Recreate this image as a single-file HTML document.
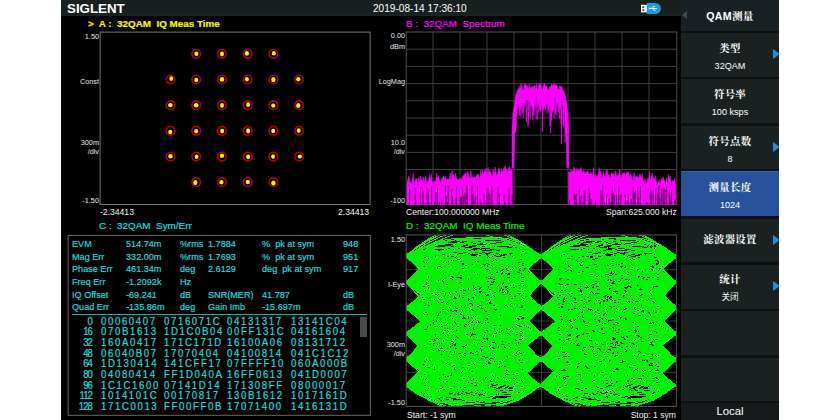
<!DOCTYPE html>
<html lang="zh">
<head>
<meta charset="utf-8">
<title>SIGLENT QAM</title>
<style>
html,body{margin:0;padding:0;background:#fff;}
body{width:840px;height:420px;position:relative;overflow:hidden;font-family:"Liberation Sans","Noto Sans CJK SC",sans-serif;}
#scr{position:absolute;left:61px;top:0;width:718px;height:420px;background:#000;overflow:hidden;}
#hdr{position:absolute;left:0;top:0;width:620px;height:16px;background:#18201f;box-shadow:inset 0 -1.5px 0 #1b2424;}
.abs{position:absolute;white-space:pre;line-height:1;}
#logo{left:6px;top:3.4px;font-size:12px;font-weight:bold;color:#fff;letter-spacing:0;transform-origin:0 0;transform:scaleX(1.11);}
#date{left:312px;top:4.2px;font-size:10.1px;color:#fff;}
.ttl{font-size:9.9px;top:18.6px;-webkit-text-stroke:0.22px currentColor;}
.ax{font-size:7.3px;color:#e8e8e8;text-align:right;width:40px;}
.bl{font-size:8.6px;color:#f0f0f0;}
.box{position:absolute;border:1px solid #6e6e6e;box-sizing:border-box;}
#menu{position:absolute;left:620px;top:0;width:98px;height:420px;background:#0d1112;}
.mi{position:absolute;left:0;width:98px;height:43.7px;background:#1a2120;color:#fff;text-align:center;}
.mi .l{position:absolute;left:0;width:98px;top:11.2px;font-size:10.4px;font-weight:bold;line-height:1;letter-spacing:0.3px;font-family:"Liberation Sans","Noto Serif CJK SC",serif;}
.mi .l1{top:16.4px;}
.mi .v{position:absolute;left:0;width:98px;top:29px;font-size:9.1px;line-height:1;}
.mi .ar{position:absolute;right:-0.5px;top:16.6px;width:0;height:0;border-left:7.6px solid #1b8fe6;border-top:5px solid transparent;border-bottom:5px solid transparent;}
.c{color:#12dede;font-size:9.8px;transform-origin:0 50%;transform:scaleX(0.93);-webkit-text-stroke:0.2px #12dede;}
.hx{color:#12dede;font-size:10px;letter-spacing:1.62px;transform-origin:0 50%;transform:scale(0.97,1.03);-webkit-text-stroke:0.2px #12dede;}
.hi{color:#12dede;font-size:10px;letter-spacing:-1px;text-align:right;width:30px;transform-origin:100% 50%;transform:scale(0.97,1.03);-webkit-text-stroke:0.2px #12dede;}
</style>
</head>
<body>
<div id="scr">
  <div id="hdr"></div>
  <div id="logo" class="abs">SIGLENT</div>
  <div id="date" class="abs">2019-08-14 17:36:10</div>
  <!-- usb icon -->
  <svg class="abs" style="left:578px;top:2px" width="24" height="13" viewBox="0 0 24 13">
    <rect x="2" y="2.8" width="6.2" height="7.6" fill="#fff"/>
    <rect x="3.4" y="4.3" width="1.8" height="1.5" fill="#18201f"/>
    <rect x="3.4" y="7.4" width="1.8" height="1.5" fill="#18201f"/>
    <path d="M7.8,0.9 H16.3 A5.6,5.6 0 0 1 16.3,12.1 H7.8 Z" fill="#1a9be8"/>
    <path d="M10.5,6.5 H18 M12.5,6.5 L14.3,4.6 H16 M13.5,6.5 L15,8.4 H16.6" stroke="#fff" stroke-width="0.9" fill="none"/>
    <circle cx="10.6" cy="6.5" r="1" fill="#fff"/>
  </svg>

  <!-- ===== A ===== -->
  <div class="abs ttl" style="left:27px;color:#f4f400;font-weight:bold;font-size:9.85px;">&gt;  A :  32QAM  IQ Meas Time</div>
  
  <div class="abs ax" style="left:-2px;top:33px;">1.50</div>
  <div class="abs ax" style="left:-2px;top:78.3px;">Const</div>
  <div class="abs ax" style="left:-2px;top:139px;">300m</div>
  <div class="abs ax" style="left:-2px;top:147.5px;">/div</div>
  <div class="abs ax" style="left:-2px;top:197.3px;">-1.50</div>
  <div class="abs bl" style="left:39px;top:208.3px;">-2.34413</div>
  <div class="abs bl" style="left:277px;top:208.3px;">2.34413</div>
  <svg class="abs" style="left:0;top:0" width="620" height="420" viewBox="61 0 620 420">
    <rect x="100.1" y="32.1" width="270" height="172.4" fill="none" stroke="#747474"/>
    <rect x="68.1" y="235.4" width="302.2" height="179.9" fill="none" stroke="#6a6a6a"/>
    <g id="con" fill="none" stroke="#b40000" stroke-width="1.6"><circle cx="170.6" cy="79.5" r="4.3"/><circle cx="170.6" cy="105.2" r="4.3"/><circle cx="170.6" cy="130.8" r="4.3"/><circle cx="170.6" cy="156.6" r="4.3"/><circle cx="196.2" cy="53.8" r="4.3"/><circle cx="196.2" cy="79.5" r="4.3"/><circle cx="196.2" cy="105.2" r="4.3"/><circle cx="196.2" cy="130.8" r="4.3"/><circle cx="196.2" cy="156.6" r="4.3"/><circle cx="196.2" cy="182.2" r="4.3"/><circle cx="222.0" cy="53.8" r="4.3"/><circle cx="222.0" cy="79.5" r="4.3"/><circle cx="222.0" cy="105.2" r="4.3"/><circle cx="222.0" cy="130.8" r="4.3"/><circle cx="222.0" cy="156.6" r="4.3"/><circle cx="222.0" cy="182.2" r="4.3"/><circle cx="247.7" cy="53.8" r="4.3"/><circle cx="247.7" cy="79.5" r="4.3"/><circle cx="247.7" cy="105.2" r="4.3"/><circle cx="247.7" cy="130.8" r="4.3"/><circle cx="247.7" cy="156.6" r="4.3"/><circle cx="247.7" cy="182.2" r="4.3"/><circle cx="273.4" cy="53.8" r="4.3"/><circle cx="273.4" cy="79.5" r="4.3"/><circle cx="273.4" cy="105.2" r="4.3"/><circle cx="273.4" cy="130.8" r="4.3"/><circle cx="273.4" cy="156.6" r="4.3"/><circle cx="273.4" cy="182.2" r="4.3"/><circle cx="299.1" cy="79.5" r="4.3"/><circle cx="299.1" cy="105.2" r="4.3"/><circle cx="299.1" cy="130.8" r="4.3"/><circle cx="299.1" cy="156.6" r="4.3"/><g fill="#f4f400" stroke="none"><ellipse cx="171.3" cy="78.6" rx="2.0" ry="2.3"/><ellipse cx="170.4" cy="105.1" rx="2.4" ry="2.2"/><ellipse cx="170.2" cy="132.0" rx="2.0" ry="2.2"/><ellipse cx="170.5" cy="156.3" rx="2.2" ry="2.2"/><ellipse cx="196.4" cy="53.7" rx="2.1" ry="2.2"/><ellipse cx="196.3" cy="80.0" rx="2.0" ry="2.3"/><ellipse cx="196.2" cy="105.3" rx="2.4" ry="2.2"/><ellipse cx="196.2" cy="131.2" rx="2.1" ry="2.2"/><ellipse cx="196.6" cy="156.8" rx="1.9" ry="2.3"/><ellipse cx="195.3" cy="182.6" rx="2.1" ry="2.6"/><ellipse cx="222.0" cy="54.0" rx="2.0" ry="2.4"/><ellipse cx="222.0" cy="79.4" rx="2.3" ry="2.3"/><ellipse cx="222.0" cy="105.5" rx="2.0" ry="2.4"/><ellipse cx="222.2" cy="131.1" rx="2.0" ry="2.3"/><ellipse cx="222.0" cy="155.7" rx="2.1" ry="2.2"/><ellipse cx="221.4" cy="182.3" rx="2.1" ry="2.3"/><ellipse cx="246.9" cy="53.4" rx="2.1" ry="2.4"/><ellipse cx="246.9" cy="79.3" rx="2.0" ry="2.3"/><ellipse cx="248.2" cy="104.7" rx="2.0" ry="2.4"/><ellipse cx="248.1" cy="130.8" rx="2.0" ry="2.6"/><ellipse cx="248.2" cy="156.8" rx="2.1" ry="2.4"/><ellipse cx="247.8" cy="182.0" rx="2.1" ry="2.3"/><ellipse cx="273.8" cy="53.2" rx="2.0" ry="2.2"/><ellipse cx="273.4" cy="79.7" rx="2.2" ry="2.6"/><ellipse cx="273.3" cy="105.6" rx="2.1" ry="2.2"/><ellipse cx="273.2" cy="131.0" rx="2.0" ry="2.3"/><ellipse cx="273.1" cy="156.6" rx="1.9" ry="2.3"/><ellipse cx="273.4" cy="183.1" rx="2.3" ry="2.5"/><ellipse cx="298.3" cy="79.3" rx="2.1" ry="2.3"/><ellipse cx="298.3" cy="105.6" rx="2.2" ry="2.5"/><ellipse cx="298.7" cy="130.6" rx="1.9" ry="2.3"/><ellipse cx="299.8" cy="156.5" rx="2.1" ry="2.1"/></g></g>
  </svg>

  <!-- ===== B ===== -->
  <div class="abs ttl" style="left:345px;color:#ff00ff;">B :  32QAM  Spectrum</div>
  <div class="abs ax" style="left:304px;top:32.2px;">0.00</div>
  <div class="abs ax" style="left:304px;top:43.4px;">dBm</div>
  <div class="abs ax" style="left:304px;top:78.3px;">LogMag</div>
  <div class="abs ax" style="left:304px;top:139px;">10.0</div>
  <div class="abs ax" style="left:304px;top:147.5px;">/div</div>
  <div class="abs ax" style="left:304px;top:197.3px;">-100</div>
  <div class="abs bl" style="left:345px;top:208.3px;">Center:100.000000 MHz</div>
  <div class="abs bl" style="left:545px;top:208.3px;width:70px;text-align:right;">Span:625.000 kHz</div>
  <svg class="abs" style="left:0;top:0" width="620" height="420" viewBox="61 0 620 420">
    <g stroke="#3e3e3e" stroke-width="1" fill="none"><path d="M433.0,32V204M460.0,32V204M487.0,32V204M514.0,32V204M541.0,32V204M568.0,32V204M595.0,32V204M622.0,32V204M649.0,32V204M406,49.2H676M406,66.4H676M406,83.6H676M406,100.8H676M406,118.0H676M406,135.2H676M406,152.4H676M406,169.6H676M406,186.8H676"/></g>
    <rect x="406.2" y="32" width="270.6" height="172.5" fill="none" stroke="#525252"/>
    <path d="M407.0,204.5L407.0,183.6L407.9,179.4L408.8,175.9L409.7,181.8L410.6,182.1L411.5,184.6L412.4,178.8L413.3,173.4L414.2,185.4L415.1,181.5L416.0,178.2L416.9,178.9L417.8,184.4L418.7,176.4L419.6,184.4L420.5,175.7L421.4,179.6L422.3,181.7L423.2,176.7L424.1,184.7L425.0,178.3L425.9,176.2L426.8,183.9L427.7,180.6L428.6,181.4L429.5,174.3L430.4,180.3L431.3,173.9L432.2,181.1L433.1,182.9L434.0,181.1L434.9,181.8L435.8,181.6L436.7,173.0L437.6,179.1L438.5,175.4L439.4,179.5L440.3,183.0L441.2,182.2L442.1,177.7L443.0,177.7L443.9,175.6L444.8,180.2L445.7,176.3L446.6,181.7L447.5,178.8L448.4,179.0L449.3,180.1L450.2,173.1L451.1,180.9L452.0,170.8L452.9,174.8L453.8,175.2L454.7,179.9L455.6,173.5L456.5,177.8L457.4,179.4L458.3,179.3L459.2,180.0L460.1,177.7L461.0,179.2L461.9,179.7L462.8,176.7L463.7,175.1L464.6,174.6L465.5,172.7L466.4,178.0L467.3,171.4L468.2,173.0L469.1,176.4L470.0,178.7L470.9,170.5L471.8,178.0L472.7,177.3L473.6,178.3L474.5,176.7L475.4,177.7L476.3,176.8L477.2,173.8L478.1,174.6L479.0,176.2L479.9,177.8L480.8,169.9L481.7,177.5L482.6,170.1L483.5,175.9L484.4,170.4L485.3,171.4L486.2,168.3L487.1,176.8L488.0,167.3L488.9,172.7L489.8,170.3L490.7,173.0L491.6,175.9L492.5,176.3L493.4,169.1L494.3,173.8L495.2,166.9L496.1,175.4L497.0,174.2L497.9,173.4L498.8,167.9L499.7,169.7L500.6,175.5L501.5,168.9L502.4,172.4L503.3,170.1L504.2,169.1L505.1,165.5L506.0,169.6L506.9,169.6L507.8,171.6L508.7,167.5L509.6,166.7L510.5,171.8L511.4,169.3L512.3,171.2L512.5,204.5ZM568.5,204.5L568.5,171.8L569.4,172.0L570.3,172.9L571.2,169.6L572.1,170.8L573.0,171.9L573.9,166.9L574.8,169.0L575.7,174.2L576.6,168.5L577.5,170.1L578.4,170.7L579.3,169.8L580.2,170.2L581.1,167.4L582.0,172.8L582.9,171.9L583.8,169.7L584.7,173.8L585.6,171.9L586.5,173.3L587.4,170.6L588.3,172.2L589.2,173.8L590.1,175.1L591.0,172.3L591.9,173.9L592.8,176.8L593.7,167.7L594.6,175.7L595.5,174.7L596.4,177.8L597.3,175.2L598.2,174.6L599.1,167.7L600.0,173.0L600.9,170.8L601.8,177.9L602.7,175.9L603.6,171.6L604.5,176.2L605.4,176.4L606.3,170.3L607.2,169.9L608.1,175.9L609.0,174.5L609.9,177.3L610.8,177.0L611.7,172.1L612.6,174.9L613.5,173.1L614.4,177.8L615.3,170.7L616.2,175.6L617.1,176.4L618.0,173.6L618.9,175.7L619.8,169.4L620.7,177.1L621.6,177.3L622.5,173.3L623.4,173.0L624.3,172.7L625.2,175.9L626.1,173.7L627.0,172.5L627.9,171.7L628.8,172.3L629.7,177.6L630.6,173.5L631.5,176.1L632.4,181.1L633.3,179.4L634.2,172.6L635.1,178.9L636.0,175.6L636.9,177.3L637.8,176.4L638.7,179.4L639.6,174.4L640.5,174.5L641.4,178.5L642.3,173.8L643.2,179.6L644.1,183.5L645.0,178.3L645.9,183.7L646.8,183.4L647.7,178.2L648.6,179.1L649.5,172.0L650.4,181.4L651.3,177.9L652.2,173.1L653.1,178.0L654.0,177.6L654.9,181.2L655.8,175.5L656.7,184.9L657.6,185.0L658.5,182.6L659.4,179.6L660.3,184.8L661.2,178.3L662.1,180.3L663.0,177.0L663.9,179.6L664.8,181.9L665.7,185.6L666.6,177.7L667.5,184.6L668.4,174.3L669.3,179.2L670.2,175.8L671.1,185.5L672.0,181.1L672.9,180.3L673.8,181.8L674.7,178.3L675.6,184.7L676.0,204.5ZM512.0,129.7L512.9,115.0L513.8,107.4L514.7,102.7L515.6,95.3L516.5,93.5L517.4,89.9L518.3,89.4L519.2,86.7L520.1,88.4L521.0,83.4L521.9,84.9L522.8,89.7L523.7,89.6L524.6,83.9L525.5,84.1L526.4,86.2L527.3,84.8L528.2,89.6L529.1,84.2L530.0,89.0L530.9,86.8L531.8,88.5L532.7,86.2L533.6,86.9L534.5,85.1L535.4,90.1L536.3,83.6L537.2,89.2L538.1,89.5L539.0,83.6L539.9,85.2L540.8,83.4L541.7,88.8L542.6,89.7L543.5,85.4L544.4,83.1L545.3,87.1L546.2,85.2L547.1,87.5L548.0,90.1L548.9,89.6L549.8,86.6L550.7,86.8L551.6,84.0L552.5,86.1L553.4,84.2L554.3,83.7L555.2,85.4L556.1,85.2L557.0,84.9L557.9,88.7L558.8,90.3L559.7,85.7L560.6,87.2L561.5,85.7L562.4,89.0L563.3,90.6L564.2,92.1L565.1,95.8L566.0,100.3L566.9,104.1L567.8,113.1L568.7,125.9L568.7,168.0L567.8,168.0L566.9,168.0L566.0,129.6L565.1,142.6L564.2,103.7L563.3,111.5L562.4,103.6L561.5,107.3L560.6,109.8L559.7,104.3L558.8,112.3L557.9,103.8L557.0,103.0L556.1,114.7L555.2,115.1L554.3,109.6L553.4,109.2L552.5,111.3L551.6,114.5L550.7,104.1L549.8,115.5L548.9,112.2L548.0,107.4L547.1,103.7L546.2,104.1L545.3,109.7L544.4,105.5L543.5,110.7L542.6,113.2L541.7,104.3L540.8,110.7L539.9,110.1L539.0,104.5L538.1,111.5L537.2,115.2L536.3,109.5L535.4,103.4L534.5,115.0L533.6,114.4L532.7,108.4L531.8,106.3L530.9,104.5L530.0,110.3L529.1,105.8L528.2,111.7L527.3,112.3L526.4,108.6L525.5,103.2L524.6,104.7L523.7,111.1L522.8,113.5L521.9,111.1L521.0,113.5L520.1,107.3L519.2,109.1L518.3,105.3L517.4,103.2L516.5,123.2L515.6,131.4L514.7,133.9L513.8,168.0L512.9,168.0L512.0,168.0Z" fill="#ff00ff" stroke="#ff00ff" stroke-width="0.5" stroke-linejoin="round"/><path d="M517.4,102.2V109.8M519.4,108.1V115.5M520.9,112.5V117.3M523.7,110.1V117.6M526.4,107.6V122.4M528.1,110.7V126.3M528.2,110.7V124.5M528.9,104.8V118.5M530.2,109.3V118.0M532.8,107.4V120.0M536.2,108.5V119.7M537.5,114.2V119.6M538.8,103.5V113.7M542.7,112.2V118.6M542.6,112.2V132.0M547.1,102.7V113.7M550.0,114.5V125.8M551.0,103.1V117.7M550.7,103.1V133.1M551.6,113.5V120.5M554.2,108.6V119.3M559.6,103.3V119.2M560.9,108.8V123.7M561.7,106.3V117.4M561.5,106.3V144.2M563.1,110.5V125.3M563.3,110.5V127.7M564.1,102.7V113.2" fill="none" stroke="#ff00ff" stroke-width="0.9"/><path d="M409.7,188.8V204.5M415.2,187.7V204.5M415.8,199.8V204.5M420.7,186.9V204.5M423.0,191.6V204.5M427.1,187.9V204.5M428.4,191.8V204.5M431.6,186.3V204.5M434.6,201.7V204.5M436.0,192.0V204.5M437.5,187.8V204.5M439.4,202.1V204.5M441.8,201.5V204.5M445.5,185.0V204.5M446.6,195.5V204.5M447.5,202.3V204.5M448.3,185.2V204.5M451.8,188.7V204.5M452.6,196.9V204.5M455.9,199.2V204.5M456.6,186.1V204.5M460.2,196.6V204.5M461.2,197.7V204.5M461.7,196.4V204.5M462.8,188.8V204.5M463.9,196.6V204.5M465.2,192.7V204.5M466.6,185.5V204.5M467.5,185.5V204.5M471.8,185.2V204.5M472.8,194.2V204.5M473.7,199.2V204.5M475.2,196.2V204.5M477.4,184.6V204.5M480.2,198.4V204.5M481.5,202.8V204.5M484.1,193.0V204.5M486.9,188.3V204.5M488.2,187.3V204.5M489.9,193.8V204.5M491.9,186.2V204.5M498.1,187.2V204.5M499.5,193.8V204.5M504.4,194.5V204.5M505.1,202.2V204.5M508.9,187.7V204.5M512.2,194.6V204.5M569.3,199.7V204.5M574.2,192.2V204.5M575.1,195.0V204.5M575.7,200.8V204.5M576.4,193.4V204.5M579.4,190.0V204.5M581.0,196.2V204.5M582.8,202.3V204.5M584.0,192.0V204.5M584.9,190.1V204.5M589.1,187.3V204.5M589.8,193.0V204.5M590.8,199.1V204.5M591.7,199.5V204.5M595.7,199.8V204.5M600.9,189.8V204.5M602.9,184.1V204.5M604.4,201.8V204.5M606.5,194.5V204.5M609.1,198.4V204.5M610.9,202.3V204.5M611.9,192.9V204.5M612.4,185.5V204.5M613.3,192.8V204.5M614.4,194.9V204.5M616.4,195.3V204.5M616.8,198.4V204.5M618.8,184.8V204.5M620.9,194.9V204.5M625.3,194.3V204.5M627.2,200.1V204.5M628.2,192.9V204.5M631.2,198.8V204.5M633.2,186.6V204.5M634.1,192.8V204.5M635.3,190.3V204.5M637.8,186.7V204.5M638.7,197.5V204.5M640.4,185.8V204.5M646.7,201.9V204.5M650.3,188.4V204.5M651.4,190.1V204.5M653.1,191.7V204.5M655.6,188.8V204.5M657.7,193.9V204.5M658.2,186.6V204.5M659.1,185.3V204.5M660.0,197.5V204.5M661.8,188.2V204.5M663.2,187.0V204.5M664.0,199.1V204.5M664.9,188.9V204.5M666.7,186.5V204.5M669.3,189.9V204.5M670.2,197.5V204.5M671.4,189.5V204.5M674.8,199.8V204.5M675.3,199.5V204.5" fill="none" stroke="#000" stroke-opacity="0.7" stroke-width="0.85"/><path d="M522.0,105.6V112.1M523.1,102.7V114.5M525.3,97.0V104.2M526.5,100.1V109.6M527.5,99.8V113.3M528.0,110.5V112.7M529.1,101.1V106.8M530.0,106.3V111.3M534.6,100.2V116.0M536.3,96.4V110.5M537.2,100.2V116.2M538.3,103.4V112.5M549.6,105.9V116.5M555.0,97.2V116.1M561.7,98.6V108.3M562.4,100.5V104.6" fill="none" stroke="#000" stroke-opacity="0.45" stroke-width="0.7"/>
  </svg>

  <!-- ===== C ===== -->
  <div class="abs ttl" style="left:38px;top:221.2px;color:#12dede;">C :  32QAM  Sym/Err</div>
  
  <div class="abs c" style="left:11.2px;top:238.8px;">EVM</div>
  <div class="abs c" style="left:65.0px;top:238.8px;">514.74m</div>
  <div class="abs c" style="left:119.4px;top:238.8px;">%rms</div>
  <div class="abs c" style="left:147.0px;top:238.8px;">1.7884</div>
  <div class="abs c" style="left:201.0px;top:238.8px;">%  pk at sym</div>
  <div class="abs c" style="left:281.5px;top:238.8px;">948</div>
  <div class="abs c" style="left:11.2px;top:251.5px;">Mag Err</div>
  <div class="abs c" style="left:65.0px;top:251.5px;">332.00m</div>
  <div class="abs c" style="left:119.4px;top:251.5px;">%rms</div>
  <div class="abs c" style="left:147.0px;top:251.5px;">1.7693</div>
  <div class="abs c" style="left:201.0px;top:251.5px;">%  pk at sym</div>
  <div class="abs c" style="left:281.5px;top:251.5px;">951</div>
  <div class="abs c" style="left:11.2px;top:264.2px;">Phase Err</div>
  <div class="abs c" style="left:65.0px;top:264.2px;">461.34m</div>
  <div class="abs c" style="left:119.4px;top:264.2px;">deg</div>
  <div class="abs c" style="left:147.0px;top:264.2px;">2.6129</div>
  <div class="abs c" style="left:201.0px;top:264.2px;">deg  pk at sym</div>
  <div class="abs c" style="left:281.5px;top:264.2px;">917</div>
  <div class="abs c" style="left:11.2px;top:276.9px;">Freq Err</div>
  <div class="abs c" style="left:64.5px;top:276.9px;">-1.2092k</div>
  <div class="abs c" style="left:119.4px;top:276.9px;">Hz</div>
  <div class="abs c" style="left:11.2px;top:289.6px;">IQ Offset</div>
  <div class="abs c" style="left:64.5px;top:289.6px;">-69.241</div>
  <div class="abs c" style="left:119.4px;top:289.6px;">dB</div>
  <div class="abs c" style="left:147.0px;top:289.6px;">SNR(MER)</div>
  <div class="abs c" style="left:201.0px;top:289.6px;">41.787</div>
  <div class="abs c" style="left:281.5px;top:289.6px;">dB</div>
  <div class="abs c" style="left:11.2px;top:302.3px;">Quad Err</div>
  <div class="abs c" style="left:64.5px;top:302.3px;">-135.86m</div>
  <div class="abs c" style="left:119.4px;top:302.3px;">deg</div>
  <div class="abs c" style="left:147.0px;top:302.3px;">Gain Imb</div>
  <div class="abs c" style="left:201.0px;top:302.3px;">-15.697m</div>
  <div class="abs c" style="left:281.5px;top:302.3px;">dB</div>
  <div class="abs hi" style="left:0.6px;top:316.7px;">0</div>
  <div class="abs hx" style="left:40.1px;top:316.7px;">00060407</div>
  <div class="abs hx" style="left:102.8px;top:316.7px;">0716071C</div>
  <div class="abs hx" style="left:166.2px;top:316.7px;">04131317</div>
  <div class="abs hx" style="left:230.2px;top:316.7px;">13141C04</div>
  <div class="abs hi" style="left:0.6px;top:327.3px;">16</div>
  <div class="abs hx" style="left:40.1px;top:327.3px;">070B1613</div>
  <div class="abs hx" style="left:102.8px;top:327.3px;">1D1C0B04</div>
  <div class="abs hx" style="left:166.2px;top:327.3px;">00FF131C</div>
  <div class="abs hx" style="left:230.2px;top:327.3px;">04161604</div>
  <div class="abs hi" style="left:0.6px;top:338.0px;">32</div>
  <div class="abs hx" style="left:40.1px;top:338.0px;">160A0417</div>
  <div class="abs hx" style="left:102.8px;top:338.0px;">171C171D</div>
  <div class="abs hx" style="left:166.2px;top:338.0px;">16100A06</div>
  <div class="abs hx" style="left:230.2px;top:338.0px;">08131712</div>
  <div class="abs hi" style="left:0.6px;top:348.6px;">48</div>
  <div class="abs hx" style="left:40.1px;top:348.6px;">06040B07</div>
  <div class="abs hx" style="left:102.8px;top:348.6px;">17070404</div>
  <div class="abs hx" style="left:166.2px;top:348.6px;">04100814</div>
  <div class="abs hx" style="left:230.2px;top:348.6px;">041C1C12</div>
  <div class="abs hi" style="left:0.6px;top:359.3px;">64</div>
  <div class="abs hx" style="left:40.1px;top:359.3px;">1D130414</div>
  <div class="abs hx" style="left:102.8px;top:359.3px;">141CFF17</div>
  <div class="abs hx" style="left:166.2px;top:359.3px;">07FFFF10</div>
  <div class="abs hx" style="left:230.2px;top:359.3px;">060A000B</div>
  <div class="abs hi" style="left:0.6px;top:369.9px;">80</div>
  <div class="abs hx" style="left:40.1px;top:369.9px;">04080414</div>
  <div class="abs hx" style="left:102.8px;top:369.9px;">FF1D040A</div>
  <div class="abs hx" style="left:166.2px;top:369.9px;">16FF0613</div>
  <div class="abs hx" style="left:230.2px;top:369.9px;">041D0007</div>
  <div class="abs hi" style="left:0.6px;top:380.5px;">96</div>
  <div class="abs hx" style="left:40.1px;top:380.5px;">1C1C1600</div>
  <div class="abs hx" style="left:102.8px;top:380.5px;">07141D14</div>
  <div class="abs hx" style="left:166.2px;top:380.5px;">171308FF</div>
  <div class="abs hx" style="left:230.2px;top:380.5px;">08000017</div>
  <div class="abs hi" style="left:0.6px;top:391.2px;">112</div>
  <div class="abs hx" style="left:40.1px;top:391.2px;">1014101C</div>
  <div class="abs hx" style="left:102.8px;top:391.2px;">00170817</div>
  <div class="abs hx" style="left:166.2px;top:391.2px;">130B1612</div>
  <div class="abs hx" style="left:230.2px;top:391.2px;">1017161D</div>
  <div class="abs hi" style="left:0.6px;top:401.8px;">128</div>
  <div class="abs hx" style="left:40.1px;top:401.8px;">171C0013</div>
  <div class="abs hx" style="left:102.8px;top:401.8px;">FF00FF0B</div>
  <div class="abs hx" style="left:166.2px;top:401.8px;">17071400</div>
  <div class="abs hx" style="left:230.2px;top:401.8px;">1416131D</div>
  <div class="abs" style="left:11px;top:314px;width:295px;height:1.4px;background:#0fb5b5;"></div>
  <div class="abs" style="left:298.5px;top:317px;width:7.5px;height:20px;background:#4a4a4a;"></div>

  <!-- ===== D ===== -->
  <div class="abs ttl" style="left:345px;top:221.2px;color:#00f000;">D :  32QAM  IQ Meas Time</div>
  <div class="abs ax" style="left:304px;top:235.5px;">1.50</div>
  <div class="abs ax" style="left:304px;top:280.7px;">I-Eye</div>
  <div class="abs ax" style="left:304px;top:341.2px;">300m</div>
  <div class="abs ax" style="left:304px;top:349.8px;">/div</div>
  <div class="abs ax" style="left:304px;top:399.2px;">-1.50</div>
  <div class="abs bl" style="left:346px;top:410.6px;">Start: -1 sym</div>
  <div class="abs bl" style="left:545px;top:410.6px;width:70px;text-align:right;">Stop: 1 sym</div>
  <svg class="abs" style="left:0;top:0" width="620" height="420" viewBox="61 0 620 420">
    <defs><clipPath id="cd"><rect x="406" y="235" width="270.5" height="171"/></clipPath><clipPath id="cs"><rect x="34" y="0" width="202" height="342"/><rect x="304" y="0" width="202" height="342"/></clipPath></defs>
    <g stroke="#3a3a3a" stroke-width="1" fill="none"><path d="M541.5,235V406M406,252.6H676M406,269.7H676M406,286.8H676M406,303.9H676M406,321.0H676M406,338.1H676M406,355.2H676M406,372.3H676M406,389.4H676"/></g>
    <g clip-path="url(#cd)"><g transform="translate(406,235) scale(0.5)"><path d="M0,197 22,183 45,168 68,152 90,137 112,122 135,107 158,93 180,80 202,69 225,58 248,50 270,43 292,39 315,37 338,37 360,39 382,44 405,52 428,62 450,74 472,89 495,105 518,123 540,143M0,43 22,39 45,37 68,37 90,39 112,44 135,52 158,62 180,74 202,88 225,105 248,123 270,143 292,164 315,185 338,206 360,227 382,246 405,263 428,278 450,290 472,298 495,302 518,303 540,300M0,143 22,164 45,185 68,206 90,227 112,246 135,263 158,278 180,290 202,298 225,302 248,303 270,300 292,292 315,282 338,268 360,253 382,235 405,218 428,200 450,184 472,170 495,158 518,150 540,145M0,300 22,292 45,282 68,268 90,253 112,235 135,218 158,200 180,184 202,170 225,158 248,150 270,145 292,145 315,148 338,154 360,164 382,176 405,189 428,203 450,216 472,228 495,238 518,245 540,249M0,145 22,145 45,148 68,154 90,164 112,176 135,189 158,203 180,216 202,228 225,238 248,245 270,249 292,249 315,246 338,239 360,228 382,215 405,199 428,182 450,164 472,145 495,128 518,111 540,97M0,249 22,249 45,246 68,239 90,228 112,215 135,199 158,182 180,164 202,145 225,128 248,111 270,97 292,84 315,73 338,65 360,58 382,53 405,50 428,48 450,47 472,46 495,45 518,43 540,42M0,97 22,84 45,73 68,65 90,58 112,53 135,50 158,48 180,47 202,46 225,45 248,43 270,42 292,39 315,37 338,34 360,31 382,28 405,26 428,24 450,24 472,26 495,29 518,34 540,41M0,42 22,39 45,37 68,34 90,31 112,28 135,26 158,24 180,24 202,26 225,29 248,34 270,41 292,49 315,59 338,70 360,82 382,94 405,105 428,116 450,126 472,134 495,140 518,144 540,146M0,41 22,49 45,59 68,70 90,82 112,94 135,105 158,116 180,126 202,134 225,140 248,144 270,146 292,146 315,144 338,140 360,135 382,129 405,122 428,115 450,108 472,103 495,98 518,95 540,93M0,146 22,146 45,144 68,140 90,135 112,129 135,122 158,115 180,108 202,103 225,98 248,95 270,93 292,94 315,96 338,100 360,106 382,114 405,123 428,134 450,146 472,158 495,171 518,184 540,196M0,93 22,94 45,96 68,100 90,106 112,114 135,123 158,134 180,146 202,158 225,171 248,184 270,196 292,209 315,220 338,231 360,240 382,248 405,255 428,259 450,261 472,262 495,260 518,256 540,250M0,196 22,209 45,220 68,231 90,240 112,248 135,254 158,259 180,261 202,262 225,260 248,256 270,250 292,243 315,234 338,224 360,214 382,202 405,191 428,180 450,171 472,162 495,154 518,149 540,145M0,250 22,243 45,234 68,224 90,214 112,202 135,191 158,180 180,171 202,162 225,154 248,149 270,145 292,143 315,142 338,144 360,147 382,151 405,157 428,163 450,170 472,177 495,184 518,190 540,196M0,145 22,143 45,142 68,144 90,147 112,151 135,157 158,163 180,170 202,177 225,184 248,190 270,196 292,201 315,204 338,207 360,207 382,206 405,203 428,199 450,192 472,183 495,172 518,160 540,145M0,196 22,201 45,204 68,207 90,207 112,206 135,203 158,199 180,192 202,183 225,172 248,160 270,145 292,130 315,114 338,97 360,81 382,66 405,53 428,42 450,34 472,30 495,30 518,34 540,42M0,145 22,130 45,114 68,97 90,81 112,66 135,53 158,42 180,34 202,30 225,30 248,34 270,42 292,55 315,72 338,92 360,114 382,137 405,161 428,183 450,204 472,221 495,235 518,244 540,248M0,42 22,55 45,72 68,92 90,114 112,137 135,161 158,183 180,204 202,221 225,235 248,244 270,248 292,247 315,241 338,230 360,216 382,199 405,180 428,161 450,143 472,126 495,112 518,102 540,96M0,248 22,247 45,241 68,230 90,216 112,199 135,180 158,161 180,143 202,126 225,112 248,102 270,96 292,94 315,97 338,104 360,115 382,129 405,145 428,164 450,183 472,201 495,219 518,235 540,249M0,96 22,94 45,97 68,104 90,115 112,129 135,145 158,164 180,183 202,201 225,219 248,235 270,249 292,260 315,268 338,272 360,274 382,272 405,268 428,260 450,251 472,239 495,226 518,211 540,196M0,249 22,260 45,268 68,272 90,274 112,272 135,268 158,260 180,251 202,239 225,226 248,211 270,196 292,180 315,165 338,149 360,135 382,121 405,110 428,100 450,93 472,89 495,88 518,90 540,95M0,196 22,180 45,165 68,149 90,135 112,121 135,110 158,100 180,93 202,89 225,88 248,90 270,95 292,104 315,115 338,128 360,144 382,160 405,177 428,194 450,210 472,223 495,235 518,243 540,248M0,95 22,104 45,115 68,128 90,144 112,160 135,177 158,194 180,210 202,223 225,235 248,243 270,248 292,249 315,247 338,242 360,234 382,223 405,211 428,199 450,186 472,173 495,162 518,153 540,146M0,248 22,249 45,247 68,242 90,234 112,223 135,212 158,199 180,186 202,173 225,162 248,153 270,146 292,142 315,140 338,140 360,143 382,148 405,155 428,163 450,171 472,179 495,187 518,194 540,199M0,146 22,142 45,140 68,140 90,143 112,148 135,155 158,163 180,171 202,179 225,187 248,194 270,199 292,203 315,206 338,207 360,205 382,203 405,198 428,192 450,185 472,176 495,167 518,157 540,146M0,199 22,203 45,206 68,207 90,205 112,203 135,198 158,192 180,185 202,176 225,167 248,157 270,146 292,134 315,123 338,112 360,100 382,89 405,79 428,70 450,62 472,55 495,49 518,46 540,43M0,146 22,134 45,123 68,112 90,100 112,89 135,79 158,70 180,62 202,55 225,49 248,46 270,43 292,43 315,44 338,47 360,51 382,56 405,62 428,68 450,74 472,80 495,86 518,90 540,94M0,43 22,43 45,44 68,47 90,51 112,56 135,62 158,68 180,74 202,80 225,86 248,90 270,94 292,96 315,97 338,98 360,97 382,96 405,94 428,93 450,92 472,91 495,92 518,93 540,95M0,94 22,96 45,97 68,98 90,97 112,96 135,94 158,93 180,92 202,91 225,92 248,93 270,95 292,99 315,103 338,108 360,114 382,121 405,127 428,132 450,137 472,141 495,144 518,145 540,145M0,95 22,99 45,103 68,108 90,114 112,120 135,127 158,132 180,137 202,141 225,144 248,145 270,145 292,142 315,138 338,133 360,126 382,118 405,108 428,98 450,87 472,76 495,65 518,54 540,43M0,145 22,142 45,138 68,133 90,126 112,118 135,108 158,98 180,87 202,76 225,65 248,54 270,43 292,33 315,25 338,17 360,11 382,7 405,5 428,5 450,7 472,12 495,20 518,30 540,42M0,43 22,33 45,25 68,17 90,11 112,7 135,5 158,5 180,7 202,12 225,20 248,30 270,42 292,57 315,73 338,91 360,111 382,131 405,151 428,171 450,190 472,208 495,224 518,238 540,249M0,42 22,57 45,73 68,91 90,111 112,131 135,151 158,171 180,190 202,208 225,224 248,238 270,249 292,258 315,265 338,269 360,270 382,270 405,268 428,266 450,262 472,258 495,255 518,252 540,249M0,249 22,258 45,265 68,269 90,270 112,270 135,268 158,266 180,262 202,258 225,255 248,252 270,249 292,247 315,246 338,246 360,247 382,248 405,249 428,250 450,251 472,252 495,251 518,250 540,248M0,249 22,247 45,246 68,246 90,247 112,248 135,249 158,250 180,251 202,252 225,251 248,250 270,248 292,244 315,239 338,234 360,227 382,219 405,210 428,200 450,190 472,179 495,168 518,157 540,145M0,248 22,244 45,239 68,234 90,227 112,219 135,210 158,200 180,190 202,179 225,168 248,157 270,145 292,134 315,123 338,113 360,103 382,95 405,88 428,83 450,81 472,80 495,82 518,87 540,94M0,145 22,134 45,123 68,113 90,103 112,95 135,88 158,83 180,81 202,80 225,82 248,87 270,94 292,104 315,115 338,128 360,142 382,156 405,170 428,182 450,192 472,199 495,203 518,203 540,198M0,94 22,104 45,115 68,128 90,142 112,156 135,170 158,182 180,192 202,199 225,203 248,203 270,198 292,190 315,179 338,164 360,146 382,128 405,108 428,90 450,73 472,59 495,49 518,43 540,41M0,198 22,190 45,179 68,164 90,146 112,128 135,108 158,90 180,73 202,59 225,49 248,43 270,41 292,45 315,53 338,65 360,81 382,99 405,118 428,137 450,156 472,172 495,184 518,193 540,196M0,41 22,45 45,53 68,65 90,81 112,99 135,118 158,137 180,156 202,172 225,184 248,193 270,196 292,195 315,189 338,179 360,165 382,148 405,130 428,110 450,92 472,75 495,60 518,50 540,43M0,196 22,195 45,189 68,179 90,165 112,148 135,130 158,110 180,92 202,75 225,60 248,50 270,43 292,40 315,42 338,48 360,57 382,68 405,82 428,96 450,109 472,122 495,133 518,140 540,145M0,43 22,40 45,42 68,48 90,57 112,68 135,82 158,96 180,109 202,122 225,133 248,140 270,145 292,147 315,146 338,141 360,135 382,127 405,118 428,109 450,102 472,96 495,93 518,92 540,95M0,145 22,147 45,146 68,141 90,135 112,127 135,118 158,109 180,102 202,96 225,93 248,92 270,95 292,101 315,111 338,123 360,138 382,154 405,172 428,189 450,205 472,220 495,233 518,243 540,250M0,95 22,101 45,111 68,123 90,138 112,154 135,172 158,189 180,206 202,221 225,233 248,243 270,250 292,253 315,253 338,249 360,243 382,234 405,223 428,210 450,197 472,183 495,170 518,158 540,146M0,250 22,253 45,253 68,249 90,243 112,234 135,223 158,210 180,197 202,183 225,170 248,158 270,146 292,137 315,128 338,122 360,117 382,113 405,110 428,107 450,105 472,103 495,101 518,98 540,94M0,146 22,137 45,128 68,122 90,117 112,113 135,110 158,107 180,105 202,103 225,101 248,98 270,94 292,89 315,83 338,77 360,71 382,64 405,57 428,51 450,46 472,43 495,41 518,41 540,42M0,94 22,89 45,83 68,77 90,71 112,64 135,57 158,51 180,46 202,43 225,41 248,40 270,42 292,46 315,51 338,57 360,64 382,72 405,80 428,87 450,92 472,96 495,98 518,98 540,95M0,42 22,46 45,51 68,57 90,64 112,72 135,80 158,87 180,92 202,96 225,98 248,98 270,95 292,90 315,82 338,73 360,64 382,54 405,44 428,36 450,30 472,27 495,28 518,33 540,42M0,95 22,90 45,82 68,73 90,64 112,54 135,44 158,36 180,30 202,28 225,28 248,33 270,42 292,54 315,71 338,90 360,112 382,136 405,159 428,182 450,202 472,220 495,234 518,244 540,248M0,42 22,54 45,71 68,90 90,112 112,136 135,159 158,182 180,202 202,220 225,234 248,244 270,248 292,247 315,242 338,232 360,218 382,201 405,183 428,164 450,145 472,128 495,113 518,102 540,94M0,248 22,247 45,242 68,232 90,218 112,202 135,183 158,164 180,145 202,128 225,113 248,102 270,94 292,90 315,91 338,95 360,103 382,114 405,127 428,141 450,155 472,168 495,180 518,189 540,196M0,94 22,90 45,91 68,95 90,103 112,114 135,127 158,141 180,155 202,168 225,180 248,189 270,196 292,200 315,201 338,199 360,195 382,189 405,181 428,173 450,165 472,158 495,152 518,148 540,146M0,196 22,200 45,201 68,199 90,195 112,189 135,181 158,173 180,165 202,158 225,152 248,148 270,146 292,147 315,150 338,155 360,163 382,173 405,184 428,195 450,207 472,219 495,230 518,240 540,249M0,146 22,147 45,150 68,155 90,163 112,173 135,184 158,195 180,207 202,219 225,230 248,240 270,249 292,256 315,263 338,268 360,272 382,275 405,278 428,280 450,283 472,286 495,290 518,295 540,300M0,249 22,256 45,263 68,268 90,272 112,275 135,278 158,280 180,283 202,286 225,290 248,295 270,300 292,306 315,311 338,317 360,323 382,327 405,330 428,332 450,331 472,328 495,321 518,312 540,300M0,300 22,306 45,311 68,317 90,323 112,327 135,330 158,332 180,331 202,328 225,321 248,312 270,300 292,286 315,268 338,248 360,226 382,203 405,179 428,154 450,129 472,105 495,82 518,61 540,42M0,300 22,286 45,268 68,248 90,226 112,203 135,178 158,154 180,129 202,105 225,82 248,61 270,42 292,25 315,11 338,0 360,-6 382,-6 405,-6 428,-6 450,-6 472,2 495,14 518,27 540,44M0,42 22,25 45,11 68,0 90,-6 112,-6 135,-6 158,-6 180,-6 202,2 225,14 248,27 270,44 292,62 315,81 338,102 360,123 382,144 405,164 428,183 450,201 472,216 495,229 518,240 540,247M0,44 22,62 45,81 68,102 90,123 112,144 135,164 158,183 180,201 202,216 225,229 248,240 270,247 292,252 315,254 338,254 360,251 382,246 405,240 428,232 450,225 472,217 495,210 518,203 540,198M0,247 22,252 45,254 68,254 90,251 112,246 135,240 158,232 180,225 202,217 225,210 248,203 270,198 292,194 315,192 338,192 360,194 382,197 405,202 428,208 450,216 472,224 495,232 518,241 540,249M0,198 22,194 45,192 68,192 90,194 112,197 135,202 158,208 180,216 202,224 225,232 248,241 270,249 292,257 315,264 338,270 360,274 382,278 405,279 428,279 450,277 472,273 495,267 518,260 540,250M0,249 22,257 45,264 68,270 90,274 112,278 135,279 158,279 180,277 202,273 225,267 248,260 270,250 292,239 315,227 338,214 360,200 382,185 405,170 428,155 450,140 472,127 495,114 518,103 540,93M0,250 22,239 45,227 68,214 90,200 112,185 135,170 158,155 180,140 202,127 225,114 248,103 270,93 292,86 315,80 338,77 360,76 382,78 405,81 428,87 450,95 472,105 495,117 518,130 540,144M0,93 22,86 45,80 68,77 90,76 112,78 135,81 158,87 180,95 202,105 225,117 248,130 270,144 292,160 315,175 338,191 360,208 382,223 405,238 428,252 450,265 472,276 495,286 518,294 540,299M0,144 22,160 45,175 68,191 90,208 112,223 135,238 158,252 180,265 202,276 225,286 248,294 270,299 292,303 315,305 338,305 360,303 382,300 405,295 428,289 450,282 472,274 495,265 518,257 540,248M0,299 22,303 45,305 68,305 90,303 112,300 135,295 158,289 180,282 202,274 225,265 248,257 270,248 292,239 315,230 338,221 360,213 382,204 405,196 428,188 450,180 472,172 495,163 518,155 540,147M0,248 22,239 45,230 68,221 90,213 112,204 135,196 158,188 180,180 202,172 225,163 248,155 270,147 292,139 315,131 338,123 360,114 382,106 405,97 428,88 450,79 472,70 495,61 518,52 540,43M0,147 22,139 45,131 68,123 90,114 112,106 135,97 158,88 180,79 202,70 225,61 248,52 270,43 292,34 315,26 338,19 360,12 382,7 405,4 428,4 450,5 472,10 495,18 518,29 540,43M0,43 22,34 45,26 68,19 90,12 112,7 135,4 158,4 180,5 202,10 225,18 248,29 270,43 292,60 315,79 338,100 360,123 382,146 405,168 428,189 450,208 472,224 495,237 518,246 540,250M0,43 22,60 45,79 68,100 90,123 112,146 135,168 158,189 180,208 202,224 225,237 248,246 270,250 292,250 315,246 338,238 360,227 382,214 405,200 428,186 450,173 472,161 495,152 518,146 540,144M0,250 22,250 45,246 68,238 90,227 112,214 135,200 158,186 180,173 202,161 225,152 248,146 270,144 292,146 315,152 338,162 360,175 382,190 405,208 428,226 450,244 472,261 495,277 518,290 540,300M0,144 22,146 45,152 68,162 90,175 112,190 135,208 158,226 180,244 202,261 225,277 248,290 270,300 292,307 315,311 338,312 360,309 382,305 405,298 428,289 450,280 472,271 495,263 518,255 540,249M0,300 22,307 45,311 68,312 90,309 112,305 135,298 158,289 180,280 202,271 225,263 248,255 270,249 292,244 315,241 338,239 360,239 382,240 405,242 428,244 450,247 472,248 495,249 518,249 540,248M0,249 22,244 45,241 68,239 90,239 112,240 135,242 158,244 180,247 202,248 225,249 248,249 270,248 292,246 315,242 338,238 360,233 382,227 405,221 428,215 450,209 472,205 495,201 518,199 540,198M0,248 22,246 45,242 68,238 90,233 112,227 135,221 158,215 180,209 202,205 225,201 248,199 270,198 292,198 315,200 338,202 360,204 382,207 405,209 428,211 450,211 472,211 495,208 518,204 540,198M0,198 22,198 45,200 68,202 90,204 112,207 135,209 158,211 180,211 202,211 225,208 248,204 270,198 292,191 315,182 338,171 360,160 382,149 405,137 428,127 450,117 472,108 495,102 518,97 540,95M0,198 22,191 45,182 68,171 90,160 112,149 135,137 158,127 180,117 202,108 225,102 248,97 270,95 292,95 315,97 338,102 360,108 382,116 405,126 428,137 450,149 472,161 495,173 518,185 540,197M0,95 22,95 45,97 68,102 90,108 112,116 135,126 158,137 180,149 202,161 225,173 248,185 270,197 292,207 315,216 338,224 360,230 382,234 405,236 428,235 450,232 472,227 495,219 518,209 540,197M0,197 22,207 45,216 68,224 90,230 112,234 135,236 158,235 180,232 202,227 225,219 248,209 270,197 292,183 315,167 338,150 360,133 382,116 405,100 428,84 450,71 472,59 495,50 518,45 540,42M0,197 22,183 45,167 68,151 90,133 112,116 135,100 158,84 180,71 202,59 225,50 248,45 270,42 292,42 315,45 338,51 360,60 382,70 405,81 428,94 450,106 472,117 495,128 518,137 540,144M0,42 22,42 45,45 68,52 90,60 112,70 135,82 158,94 180,106 202,117 225,128 248,137 270,144 292,150 315,153 338,153 360,152 382,149 405,144 428,137 450,130 472,122 495,113 518,104 540,95M0,144 22,150 45,153 68,153 90,152 112,149 135,144 158,137 180,130 202,122 225,113 248,104 270,95 292,87 315,80 338,73 360,68 382,65 405,63 428,63 450,65 472,69 495,75 518,84 540,95M0,95 22,87 45,80 68,73 90,68 112,64 135,63 158,63 180,65 202,69 225,75 248,84 270,95 292,107 315,121 338,135 360,150 382,165 405,178 428,189 450,198 472,204 495,205 518,203 540,197M0,95 22,107 45,121 68,135 90,150 112,165 135,178 158,189 180,198 202,203 225,205 248,203 270,197 292,187 315,173 338,157 360,138 382,119 405,99 428,81 450,65 472,53 495,45 518,42 540,44M0,197 22,187 45,173 68,157 90,138 112,119 135,99 158,81 180,65 202,53 225,45 248,42 270,44 292,51 315,64 338,82 360,104 382,129 405,156 428,185 450,212 472,239 495,263 518,284 540,301M0,44 22,51 45,64 68,82 90,104 112,129 135,156 158,185 180,212 202,239 225,263 248,284 270,301 292,314 315,322 338,326 360,326 382,323 405,316 428,307 450,296 472,284 495,272 518,259 540,248M0,301 22,314 45,322 68,326 90,326 112,323 135,316 158,307 180,296 202,284 225,272 248,259 270,248 292,237 315,228 338,221 360,215 382,212 405,210 428,211 450,215 472,220 495,227 518,237 540,248M0,248 22,237 45,228 68,221 90,215 112,212 135,210 158,211 180,215 202,220 225,227 248,237 270,248 292,260 315,273 338,286 360,298 382,310 405,319 428,326 450,329 472,329 495,324 518,314 540,299M0,248 22,260 45,273 68,286 90,298 112,310 135,319 158,326 180,329 202,329 225,324 248,314 270,299 292,280 315,257 338,231 360,203 382,173 405,144 428,116 450,91 472,70 495,55 518,45 540,42M0,299 22,280 45,257 68,231 90,203 112,173 135,144 158,116 180,91 202,70 225,55 248,45 270,42 292,46 315,56 338,72 360,94 382,119 405,147 428,177 450,207 472,235 495,261 518,283 540,301M0,42 22,46 45,56 68,72 90,94 112,119 135,147 158,177 180,207 202,235 225,261 248,283 270,301 292,313 315,321 338,323 360,320 382,312 405,301 428,286 450,270 472,252 495,233 518,214 540,196M0,301 22,313 45,321 68,323 90,320 112,312 135,301 158,286 180,270 202,252 225,233 248,214 270,196 292,179 315,164 338,150 360,138 382,127 405,119 428,111 450,106 472,101 495,98 518,96 540,94M0,196 22,179 45,164 68,150 90,138 112,127 135,119 158,111 180,106 202,101 225,98 248,96 270,94 292,94 315,94 338,95 360,96 382,97 405,98 428,99 450,99 472,99 495,98 518,96 540,94M0,94 22,94 45,94 68,95 90,96 112,97 135,98 158,99 180,99 202,99 225,98 248,96 270,94 292,90 315,85 338,81 360,76 382,71 405,67 428,65 450,65 472,67 495,73 518,81 540,93M0,94 22,90 45,85 68,81 90,76 112,71 135,67 158,65 180,65 202,67 225,73 248,81 270,93 292,107 315,125 338,145 360,167 382,189 405,212 428,234 450,254 472,271 495,285 518,295 540,301M0,93 22,107 45,125 68,145 90,167 112,189 135,212 158,234 180,254 202,271 225,285 248,295 270,301 292,302 315,300 338,294 360,285 382,273 405,260 428,247 450,234 472,221 495,211 518,203 540,198M0,301 22,302 45,300 68,294 90,285 112,273 135,261 158,247 180,234 202,221 225,211 248,203 270,198 292,196 315,197 338,201 360,208 382,217 405,227 428,240 450,252 472,265 495,278 518,290 540,300M0,198 22,196 45,197 68,201 90,208 112,217 135,227 158,240 180,252 202,265 225,278 248,290 270,300 292,309 315,316 338,321 360,323 382,323 405,320 428,315 450,306 472,296 495,282 518,266 540,248M0,300 22,309 45,316 68,321 90,323 112,323 135,320 158,315 180,306 202,296 225,282 248,266 270,248 292,229 315,208 338,187 360,165 382,145 405,127 428,111 450,99 472,90 495,87 518,88 540,94M0,248 22,229 45,208 68,187 90,165 112,145 135,127 158,111 180,99 202,90 225,87 248,88 270,94 292,104 315,119 338,138 360,160 382,183 405,207 428,230 450,252 472,270 495,285 518,295 540,300M0,94 22,104 45,119 68,138 90,160 112,183 135,207 158,230 180,252 202,270 225,285 248,295 270,300 292,300 315,295 338,285 360,271 382,254 405,235 428,215 450,196 472,178 495,164 518,152 540,145M0,300 22,300 45,295 68,285 90,271 112,254 135,235 158,215 180,196 202,179 225,164 248,152 270,145 292,142 315,144 338,150 360,161 382,175 405,191 428,210 450,230 472,249 495,269 518,286 540,302M0,145 22,142 45,144 68,150 90,161 112,175 135,191 158,210 180,230 202,249 225,269 248,286 270,302 292,315 315,325 338,332 360,336 382,335 405,332 428,325 450,315 472,302 495,287 518,269 540,250M0,302 22,315 45,325 68,332 90,336 112,335 135,332 158,325 180,315 202,302 225,287 248,269 270,250 292,228 315,206 338,183 360,160 382,138 405,116 428,97 450,79 472,65 495,54 518,46 540,42M0,250 22,228 45,206 68,183 90,160 112,138 135,117 158,97 180,79 202,65 225,54 248,46 270,42 292,43 315,47 338,55 360,66 382,80 405,97 428,114 450,133 472,151 495,168 518,184 540,198M0,42 22,43 45,47 68,55 90,66 112,80 135,97 158,114 180,133 202,151 225,168 248,184 270,198 292,210 315,219 338,226 360,231 382,234 405,235 428,236 450,237 472,239 495,241 518,245 540,250M0,198 22,210 45,219 68,226 90,231 112,234 135,235 158,236 180,237 202,239 225,241 248,245 270,250 292,257 315,265 338,275 360,285 382,295 405,304 428,311 450,316 472,318 495,317 518,311 540,302M0,250 22,257 45,265 68,275 90,285 112,295 135,304 158,311 180,316 202,318 225,317 248,311 270,302 292,288 315,271 338,251 360,229 382,205 405,182 428,159 450,139 472,122 495,108 518,99 540,95M0,302 22,288 45,271 68,251 90,229 112,205 135,182 158,159 180,139 202,122 225,108 248,99 270,95 292,96 315,101 338,111 360,124 382,140 405,158 428,177 450,195 472,212 495,227 518,240 540,249M0,95 22,96 45,101 68,111 90,124 112,140 135,158 158,177 180,195 202,212 225,227 248,240 270,249 292,255 315,257 338,257 360,253 382,247 405,240 428,231 450,223 472,214 495,207 518,202 540,198M0,249 22,255 45,257 68,256 90,253 112,247 135,240 158,231 180,223 202,214 225,207 248,202 270,198 292,197 315,198 338,201 360,207 382,215 405,225 428,236 450,248 472,261 495,274 518,287 540,300M0,198 22,197 45,198 68,202 90,207 112,215 135,225 158,236 180,248 202,261 225,274 248,287 270,300 292,312 315,323 338,333 360,340 382,346 405,348 428,348 450,345 472,338 495,328 518,315 540,299M0,300 22,312 45,323 68,333 90,340 112,346 135,348 158,348 180,345 202,338 225,328 248,315 270,299 292,279 315,258 338,235 360,211 382,187 405,164 428,143 450,125 472,110 495,100 518,94 540,94M0,299 22,279 45,258 68,235 90,211 112,187 135,164 158,143 180,125 202,110 225,100 248,94 270,94 292,99 315,109 338,123 360,141 382,162 405,184 428,208 450,231 472,252 495,271 518,287 540,299M0,94 22,99 45,109 68,123 90,141 112,162 135,184 158,208 180,231 202,252 225,271 248,287 270,299 292,307 315,310 338,309 360,304 382,295 405,283 428,270 450,255 472,239 495,224 518,210 540,197M0,299 22,307 45,310 68,309 90,304 112,295 135,283 158,270 180,255 202,239 225,224 248,210 270,197 292,186 315,177 338,171 360,167 382,166 405,166 428,169 450,173 472,178 495,184 518,191 540,198M0,197 22,186 45,177 68,171 90,167 112,166 135,166 158,169 180,173 202,178 225,184 248,191 270,198 292,206 315,213 338,221 360,227 382,234 405,239 428,244 450,248 472,250 495,251 518,251 540,249M0,198 22,206 45,213 68,220 90,227 112,234 135,239 158,244 180,248 202,250 225,251 248,251 270,249 292,246 315,240 338,234 360,226 382,217 405,206 428,196 450,185 472,174 495,164 518,155 540,147M0,249 22,246 45,240 68,234 90,226 112,217 135,206 158,196 180,185 202,174 225,164 248,155 270,147 292,140 315,134 338,129 360,126 382,123 405,121 428,119 450,116 472,112 495,107 518,101 540,93M0,147 22,140 45,134 68,129 90,126 112,123 135,121 158,119 180,116 202,112 225,107 248,101 270,93 292,84 315,74 338,63 360,52 382,41 405,32 428,25 450,21 472,20 495,24 518,32 540,44M0,93 22,84 45,74 68,63 90,52 112,41 135,32 158,25 180,21 202,20 225,24 248,32 270,44 292,60 315,80 338,102 360,127 382,152 405,176 428,199 450,219 472,234 495,244 518,249 540,247M0,44 22,60 45,79 68,102 90,127 112,152 135,176 158,199 180,219 202,234 225,244 248,249 270,247 292,240 315,227 338,209 360,187 382,163 405,138 428,113 450,90 472,70 495,55 518,45 540,42M0,247 22,240 45,227 68,209 90,187 112,163 135,138 158,113 180,90 202,70 225,55 248,45 270,42 292,45 315,54 338,69 360,90 382,114 405,142 428,172 450,202 472,231 495,258 518,282 540,302M0,42 22,45 45,54 68,69 90,90 112,114 135,142 158,172 180,202 202,231 225,258 248,282 270,302 292,318 315,329 338,335 360,337 382,334 405,328 428,318 450,306 472,292 495,278 518,263 540,248M0,302 22,318 45,329 68,335 90,337 112,334 135,328 158,318 180,306 202,292 225,278 248,263 270,248 292,234 315,221 338,209 360,198 382,188 405,180 428,172 450,165 472,159 495,154 518,149 540,144M0,248 22,234 45,221 68,209 90,198 112,188 135,180 158,172 180,165 202,159 225,154 248,149 270,144 292,139 315,135 338,130 360,126 382,122 405,118 428,114 450,110 472,106 495,102 518,98 540,95M0,144 22,139 45,135 68,130 90,126 112,122 135,118 158,114 180,110 202,106 225,102 248,98 270,95 292,91 315,87 338,83 360,79 382,75 405,70 428,65 450,61 472,56 495,51 518,46 540,41M0,95 22,91 45,87 68,83 90,79 112,75 135,70 158,65 180,61 202,56 225,51 248,46 270,41 292,38 315,35 338,33 360,32 382,33 405,36 428,40 450,47 472,56 495,67 518,81 540,96M0,41 22,38 45,35 68,33 90,32 112,33 135,36 158,40 180,47 202,56 225,67 248,81 270,96 292,113 315,132 338,151 360,172 382,192 405,213 428,232 450,250 472,267 495,281 518,292 540,300M0,96 22,113 45,132 68,151 90,172 112,192 135,213 158,232 180,250 202,267 225,281 248,292 270,300 292,305 315,307 338,306 360,302 382,295 405,285 428,273 450,260 472,245 495,230 518,214 540,199M0,300 22,305 45,307 68,306 90,302 112,295 135,285 158,273 180,260 202,245 225,230 248,214 270,199 292,184 315,170 338,157 360,145 382,134 405,125 428,117 450,110 472,104 495,100 518,96 540,94M0,199 22,184 45,170 68,157 90,145 112,134 135,125 158,117 180,110 202,104 225,100 248,96 270,94 292,92 315,91 338,91 360,92 382,94 405,97 428,102 450,108 472,116 495,125 518,135 540,147M0,94 22,92 45,91 68,91 90,92 112,94 135,97 158,102 180,108 202,116 225,125 248,135 270,147 292,161 315,175 338,189 360,203 382,217 405,229 428,240 450,248 472,254 495,257 518,256 540,252M0,147 22,161 45,175 68,189 90,203 112,217 135,229 158,240 180,248 202,254 225,257 248,256 270,252 292,244 315,234 338,222 360,208 382,193 405,179 428,166 450,154 472,146 495,142 518,141 540,145M0,252 22,244 45,234 68,222 90,208 112,193 135,179 158,166 180,154 202,146 225,142 248,141 270,145 292,153 315,166 338,181 360,199 382,219 405,239 428,257 450,274 472,287 495,296 518,300 540,298M0,145 22,153 45,166 68,181 90,199 112,219 135,238 158,257 180,274 202,287 225,296 248,300 270,298 292,291 315,278 338,261 360,240 382,216 405,192 428,167 450,144 472,124 495,109 518,99 540,95M0,298 22,291 45,278 68,261 90,240 112,216 135,192 158,167 180,144 202,124 225,109 248,99 270,95 292,96 315,104 338,118 360,136 382,158 405,182 428,207 450,231 472,254 495,273 518,289 540,300M0,95 22,96 45,104 68,118 90,136 112,158 135,182 158,207 180,231 202,254 225,273 248,289 270,300 292,305 315,306 338,301 360,293 382,281 405,267 428,252 450,237 472,223 495,211 518,202 540,197M0,300 22,305 45,306 68,301 90,293 112,281 135,267 158,252 180,237 202,223 225,211 248,202 270,197 292,195 315,197 338,202 360,209 382,218 405,227 428,237 450,245 472,251 495,254 518,253 540,249M0,197 22,195 45,197 68,202 90,209 112,218 135,227 158,237 180,245 202,251 225,254 248,253 270,249 292,241 315,229 338,213 360,195 382,174 405,152 428,130 450,108 472,88 495,70 518,54 540,42M0,249 22,241 45,229 68,213 90,195 112,174 135,152 158,130 180,108 202,88 225,70 248,54 270,42 292,33 315,27 338,25 360,26 382,29 405,35 428,43 450,52 472,62 495,72 518,83 540,92M0,42 22,33 45,27 68,25 90,26 112,29 135,35 158,43 180,52 202,62 225,72 248,83 270,92 292,101 315,109 338,117 360,123 382,128 405,132 428,136 450,139 472,141 495,143 518,145 540,147M0,92 22,101 45,109 68,117 90,123 112,128 135,132 158,136 180,139 202,141 225,143 248,145 270,147 292,149 315,151 338,153 360,156 382,159 405,163 428,167 450,172 472,177 495,183 518,190 540,197M0,147 22,149 45,151 68,153 90,156 112,159 135,163 158,167 180,172 202,177 225,183 248,190 270,197 292,204 315,212 338,219 360,227 382,233 405,240 428,245 450,249 472,251 495,252 518,251 540,248M0,197 22,204 45,212 68,219 90,227 112,233 135,240 158,245 180,249 202,251 225,252 248,251 270,248 292,244 315,237 338,228 360,218 382,205 405,192 428,177 450,161 472,145 495,128 518,112 540,95M0,248 22,244 45,237 68,228 90,217 112,205 135,192 158,177 180,161 202,145 225,128 248,112 270,95 292,80 315,66 338,53 360,42 382,32 405,25 428,21 450,19 472,20 495,24 518,31 540,41M0,95 22,80 45,66 68,53 90,42 112,32 135,25 158,21 180,19 202,20 225,24 248,31 270,41 292,53 315,67 338,84 360,102 382,121 405,141 428,161 450,181 472,200 495,217 518,233 540,247M0,41 22,53 45,67 68,84 90,102 112,121 135,141 158,161 180,181 202,200 225,217 248,233 270,247 292,258 315,267 338,273 360,277 382,279 405,279 428,276 450,273 472,268 495,262 518,256 540,250M0,247 22,258 45,267 68,273 90,277 112,279 135,279 158,276 180,273 202,268 225,262 248,256 270,250 292,244 315,237 338,232 360,226 382,221 405,217 428,213 450,209 472,205 495,202 518,198 540,195M0,250 22,244 45,237 68,232 90,226 112,221 135,217 158,213 180,209 202,205 225,202 248,198 270,195 292,193 315,190 338,188 360,186 382,185 405,185 428,185 450,186 472,188 495,190 518,193 540,197M0,195 22,193 45,190 68,188 90,186 112,185 135,185 158,185 180,186 202,188 225,190 248,194 270,197 292,201 315,206 338,210 360,215 382,220 405,225 428,229 450,234 472,238 495,242 518,246 540,249M0,197 22,201 45,206 68,210 90,215 112,220 135,225 158,229 180,234 202,238 225,242 248,246 270,249 292,252 315,254 338,256 360,256 382,255 405,253 428,249 450,243 472,234 495,224 518,211 540,196M0,249 22,252 45,254 68,256 90,256 112,255 135,253 158,249 180,243 202,234 225,224 248,211 270,196 292,179 315,160 338,141 360,122 382,103 405,85 428,69 450,56 472,47 495,41 518,39 540,42M0,196 22,179 45,160 68,141 90,122 112,103 135,85 158,69 180,56 202,47 225,41 248,39 270,42 292,49 315,60 338,74 360,90 382,108 405,127 428,145 450,162 472,176 495,187 518,194 540,197M0,42 22,49 45,60 68,74 90,90 112,108 135,127 158,145 180,162 202,176 225,187 248,194 270,197 292,195 315,190 338,180 360,167 382,151 405,133 428,115 450,97 472,79 495,64 518,51 540,41M0,197 22,195 45,190 68,180 90,167 112,151 135,134 158,115 180,97 202,79 225,64 248,51 270,41 292,34 315,31 338,32 360,36 382,43 405,53 428,65 450,79 472,95 495,111 518,128 540,144M0,41 22,34 45,31 68,32 90,36 112,43 135,53 158,65 180,79 202,95 225,111 248,128 270,144 292,160 315,175 338,188 360,199 382,208 405,215 428,219 450,221 472,219 495,214 518,207 540,196M0,144 22,160 45,175 68,188 90,199 112,208 135,215 158,219 180,221 202,219 225,214 248,207 270,196 292,183 315,168 338,151 360,133 382,115 405,98 428,81 450,67 472,56 495,48 518,44 540,44M0,196 22,183 45,168 68,151 90,133 112,115 135,98 158,81 180,67 202,56 225,48 248,44 270,44 292,48 315,57 338,69 360,84 382,101 405,120 428,138 450,156 472,171 495,184 518,194 540,199M0,44 22,48 45,57 68,69 90,84 112,101 135,120 158,138 180,156 202,171 225,184 248,194 270,199 292,200 315,197 338,190 360,180 382,167 405,153 428,138 450,124 472,112 495,102 518,96 540,93M0,199 22,200 45,197 68,190 90,180 112,167 135,153 158,138 180,124 202,112 225,102 248,96 270,93 292,94 315,99 338,107 360,118 382,131 405,146 428,160 450,173 472,184 495,193 518,197 540,198M0,93 22,94 45,99 68,107 90,118 112,131 135,146 158,160 180,173 202,184 225,193 248,197 270,198 292,195 315,187 338,176 360,162 382,145 405,127 428,109 450,91 472,75 495,61 518,50 540,42M0,198 22,195 45,187 68,176 90,162 112,145 135,127 158,109 180,91 202,75 225,61 248,50 270,42 292,38 315,38 338,41 360,46 382,54 405,62 428,71 450,80 472,87 495,92 518,95 540,95M0,42 22,38 45,38 68,41 90,46 112,54 135,62 158,71 180,80 202,87 225,92 248,95 270,95 292,92 315,87 338,80 360,71 382,61 405,52 428,43 450,36 472,32 495,32 518,35 540,43M0,95 22,92 45,87 68,80 90,71 112,61 135,52 158,43 180,36 202,32 225,32 248,35 270,43 292,54 315,70 338,90 360,112 382,137 405,164 428,191 450,217 472,242 495,265 518,285 540,302M0,43 22,54 45,70 68,90 90,113 112,138 135,164 158,191 180,217 202,243 225,265 248,285 270,302 292,314 315,323 338,329 360,331 382,330 405,326 428,322 450,316 472,311 495,305 518,301 540,299M0,302 22,314 45,323 68,329 90,331 112,330 135,326 158,322 180,316 202,311 225,305 248,301 270,299 292,298 315,298 338,300 360,303 382,307 405,311 428,314 450,316 472,316 495,314 518,309 540,301M0,299 22,298 45,298 68,300 90,303 112,307 135,311 158,314 180,316 202,316 225,314 248,309 270,301 292,291 315,278 338,263 360,247 382,229 405,211 428,195 450,179 472,166 495,156 518,149 540,146M0,301 22,291 45,278 68,263 90,247 112,229 135,211 158,195 180,179 202,166 225,156 248,149 270,146 292,146 315,149 338,155 360,162 382,172 405,181 428,190 450,197 472,202 495,204 518,202 540,197M0,146 22,146 45,149 68,155 90,162 112,171 135,181 158,190 180,197 202,202 225,204 248,202 270,197 292,189 315,177 338,162 360,145 382,126 405,108 428,90 450,73 472,60 495,49 518,43 540,41M0,197 22,189 45,177 68,162 90,145 112,126 135,108 158,90 180,73 202,60 225,49 248,43 270,41 292,44 315,51 338,62 360,77 382,96 405,117 428,139 450,163 472,186 495,209 518,231 540,250M0,41 22,44 45,51 68,62 90,77 112,96 135,117 158,139 180,163 202,186 225,209 248,231 270,250 292,267 315,282 338,293 360,301 382,305 405,306 428,304 450,298 472,290 495,279 518,265 540,249M0,250 22,267 45,282 68,293 90,301 112,305 135,306 158,304 180,298 202,290 225,279 248,265 270,249 292,231 315,212 338,193 360,173 382,154 405,136 428,121 450,108 472,99 495,93 518,91 540,94M0,249 22,231 45,212 68,193 90,173 112,154 135,136 158,121 180,108 202,99 225,93 248,91 270,94 292,101 315,112 338,126 360,143 382,161 405,180 428,198 450,215 472,230 495,240 518,247 540,248M0,94 22,101 45,112 68,126 90,143 112,161 135,180 158,198 180,215 202,230 225,240 248,247 270,248 292,245 315,237 338,225 360,209 382,191 405,172 428,152 450,134 472,118 495,105 518,97 540,94M0,248 22,245 45,237 68,225 90,209 112,191 135,172 158,152 180,134 202,118 225,105 248,97 270,94 292,95 315,102 338,113 360,128 382,146 405,165 428,185 450,204 472,221 495,234 518,244 540,249M0,94 22,95 45,102 68,113 90,128 112,146 135,165 158,185 180,204 202,221 225,234 248,244 270,249 292,250 315,246 338,239 360,228 382,214 405,200 428,185 450,171 472,160 495,151 518,146 540,145M0,249 22,250 45,246 68,239 90,228 112,214 135,200 158,185 180,171 202,160 225,151 248,146 270,145 292,149 315,157 338,168 360,182 382,199 405,217 428,236 450,254 472,270 495,283 518,294 540,301M0,145 22,149 45,157 68,168 90,182 112,199 135,217 158,236 180,254 202,270 225,283 248,294 270,301 292,304 315,302 338,297 360,288 382,276 405,261 428,244 450,225 472,205 495,185 518,165 540,145M0,301 22,304 45,302 68,297 90,288 112,276 135,261 158,244 180,225 202,205 225,185 248,165 270,145 292,127 315,110 338,94 360,81 382,69 405,60 428,52 450,46 472,43 495,41 518,41 540,43M0,145 22,127 45,110 68,94 90,81 112,69 135,60 158,52 180,46 202,43 225,41 248,41 270,43 292,45 315,50 338,55 360,60 382,66 405,72 428,78 450,83 472,88 495,91 518,94 540,95M0,43 22,45 45,50 68,55 90,60 112,66 135,72 158,78 180,83 202,88 225,91 248,94 270,95 292,94 315,93 338,90 360,85 382,80 405,75 428,69 450,63 472,57 495,51 518,46 540,42M0,95 22,94 45,93 68,90 90,86 112,81 135,75 158,69 180,63 202,57 225,51 248,46 270,42 292,40 315,38 338,38 360,40 382,42 405,46 428,52 450,59 472,66 495,75 518,84 540,94M0,42 22,40 45,38 68,38 90,40 112,42 135,46 158,52 180,59 202,66 225,75 248,84 270,94 292,103 315,113 338,122 360,131 382,139 405,145 428,149 450,152 472,153 495,152 518,149 540,143M0,94 22,103 45,113 68,122 90,131 112,138 135,145 158,149 180,152 202,153 225,152 248,149 270,143 292,136 315,127 338,117 360,105 382,94 405,82 428,71 450,61 472,53 495,47 518,44 540,43M0,143 22,136 45,127 68,117 90,105 112,94 135,82 158,71 180,61 202,53 225,47 248,44 270,43 292,45 315,50 338,58 360,69 382,82 405,96 428,113 450,130 472,147 495,164 518,181 540,197M0,43 22,45 45,50 68,58 90,69 112,82 135,96 158,113 180,130 202,147 225,164 248,181 270,197 292,211 315,224 338,235 360,243 382,250 405,255 428,258 450,259 472,258 495,256 518,252 540,247M0,197 22,211 45,224 68,235 90,244 112,250 135,255 158,258 180,259 202,258 225,256 248,252 270,247 292,241 315,234 338,227 360,218 382,210 405,201 428,191 450,182 472,173 495,164 518,155 540,148M0,247 22,241 45,234 68,227 90,218 112,210 135,201 158,191 180,182 202,173 225,164 248,155 270,148 292,141 315,135 338,130 360,127 382,125 405,124 428,125 450,127 472,130 495,135 518,141 540,147M0,148 22,141 45,135 68,130 90,127 112,125 135,124 158,125 180,127 202,130 225,135 248,141 270,147 292,155 315,163 338,172 360,180 382,190 405,199 428,208 450,217 472,226 495,235 518,243 540,250M0,147 22,155 45,163 68,172 90,180 112,190 135,199 158,208 180,217 202,226 225,235 248,243 270,250 292,257 315,263 338,267 360,271 382,273 405,275 428,274 450,272 472,269 495,263 518,257 540,249M0,250 22,257 45,263 68,267 90,271 112,274 135,275 158,274 180,272 202,269 225,263 248,257 270,249 292,240 315,230 338,219 360,208 382,197 405,186 428,176 450,166 472,158 495,152 518,146 540,143M0,249 22,240 45,230 68,219 90,208 112,197 135,186 158,176 180,166 202,158 225,152 248,147 270,143 292,141 315,141 338,143 360,146 382,150 405,155 428,162 450,168 472,176 495,183 518,190 540,197M0,143 22,141 45,141 68,143 90,146 112,150 135,155 158,162 180,168 202,176 225,183 248,190 270,197 292,203 315,209 338,214 360,217 382,220 405,221 428,221 450,219 472,216 495,211 518,204 540,196M0,197 22,203 45,209 68,214 90,217 112,220 135,221 158,221 180,219 202,216 225,211 248,204 270,196 292,186 315,176 338,164 360,152 382,140 405,129 428,118 450,109 472,102 495,97 518,94 540,94M0,196 22,186 45,176 68,164 90,152 112,140 135,129 158,118 180,109 202,102 225,97 248,94 270,94 292,97 315,101 338,108 360,115 382,124 405,132 428,140 450,147 472,151 495,153 518,152 540,148M0,94 22,97 45,101 68,108 90,115 112,124 135,132 158,140 180,147 202,151 225,153 248,152 270,148 292,141 315,131 338,119 360,106 382,91 405,77 428,64 450,53 472,45 495,40 518,40 540,45M0,148 22,141 45,131 68,119 90,106 112,91 135,77 158,64 180,53 202,45 225,41 248,40 270,45 292,54 315,67 338,84 360,104 382,126 405,149 428,172 450,193 472,212 495,228 518,240 540,248M0,45 22,54 45,67 68,84 90,104 112,126 135,149 158,172 180,193 202,212 225,228 248,240 270,248 292,250 315,248 338,241 360,230 382,216 405,199 428,180 450,161 472,142 495,124 518,108 540,94M0,248 22,250 45,248 68,241 90,230 112,216 135,199 158,180 180,161 202,142 225,124 248,108 270,94 292,83 315,76 338,71 360,70 382,73 405,78 428,85 450,95 472,106 495,119 518,133 540,147M0,94 22,83 45,76 68,71 90,70 112,73 135,78 158,85 180,95 202,106 225,119 248,133 270,147 292,162 315,176 338,191 360,205 382,219 405,233 428,246 450,258 472,270 495,281 518,291 540,299M0,147 22,162 45,176 68,191 90,205 112,219 135,233 158,246 180,258 202,270 225,281 248,291 270,299 292,307 315,313 338,318 360,321 382,323 405,324 428,323 450,321 472,317 495,313 518,308 540,302M0,299 22,307 45,313 68,318 90,321 112,323 135,324 158,323 180,321 202,317 225,313 248,308 270,302 292,295 315,288 338,281 360,273 382,264 405,255 428,246 450,237 472,227 495,217 518,206 540,196M0,302 22,295 45,288 68,281 90,273 112,264 135,255 158,246 180,237 202,227 225,217 248,206 270,196 292,186 315,176 338,167 360,158 382,150 405,144 428,140 450,137 472,136 495,136 518,139 540,144M0,196 22,186 45,176 68,167 90,158 112,150 135,144 158,140 180,137 202,136 225,137 248,139 270,144 292,151 315,159 338,168 360,178 382,189 405,200 428,211 450,221 472,230 495,238 518,245 540,250M0,144 22,151 45,159 68,168 90,178 112,189 135,200 158,211 180,221 202,230 225,238 248,245 270,250 292,252 315,253 338,251 360,247 382,241 405,232 428,222 450,210 472,196 495,180 518,164 540,147M0,250 22,252 45,253 68,251 90,247 112,241 135,232 158,222 180,210 202,196 225,180 248,164 270,147 292,129 315,112 338,96 360,80 382,67 405,55 428,45 450,38 472,35 495,34 518,36 540,42M0,147 22,129 45,112 68,96 90,81 112,67 135,55 158,45 180,39 202,35 225,34 248,36 270,42 292,50 315,61 338,75 360,92 382,110 405,129 428,150 450,171 472,192 495,212 518,232 540,250M0,42 22,50 45,61 68,75 90,92 112,110 135,129 158,150 180,171 202,192 225,212 248,232 270,250 292,266 315,281 338,292 360,301 382,307 405,310 428,308 450,303 472,295 495,282 518,267 540,248M0,250 22,266 45,281 68,293 90,301 112,307 135,310 158,308 180,303 202,295 225,282 248,267 270,248 292,226 315,203 338,178 360,153 382,128 405,105 428,84 450,67 472,54 495,45 518,42 540,44M0,248 22,226 45,203 68,178 90,153 112,128 135,105 158,84 180,67 202,54 225,45 248,42 270,44 292,51 315,63 338,80 360,100 382,123 405,147 428,171 450,194 472,214 495,230 518,242 540,248M0,44 22,51 45,63 68,80 90,100 112,123 135,147 158,171 180,194 202,214 225,230 248,242 270,248 292,249 315,244 338,235 360,221 382,204 405,185 428,165 450,145 472,127 495,112 518,101 540,94M0,248 22,249 45,244 68,235 90,221 112,204 135,185 158,165 180,145 202,127 225,112 248,101 270,94 292,92 315,94 338,101 360,111 382,124 405,139 428,154 450,168 472,181 495,190 518,196 540,198M0,94 22,92 45,94 68,101 90,111 112,124 135,139 158,154 180,168 202,180 225,190 248,196 270,198 292,195 315,189 338,179 360,166 382,152 405,137 428,123 450,110 472,100 495,94 518,92 540,95M0,198 22,195 45,189 68,179 90,166 112,152 135,137 158,123 180,110 202,100 225,94 248,92 270,95 292,103 315,115 338,131 360,150 382,172 405,195 428,219 450,241 472,261 495,278 518,291 540,300M0,95 22,103 45,115 68,131 90,150 112,172 135,195 158,219 180,241 202,261 225,278 248,291 270,300 292,305 315,304 338,300 360,291 382,278 405,263 428,245 450,226 472,206 495,185 518,166 540,148M0,300 22,305 45,304 68,300 90,291 112,278 135,263 158,245 180,226 202,206 225,185 248,166 270,148 292,131 315,116 338,103 360,93 382,85 405,80 428,77 450,76 472,78 495,81 518,87 540,94M0,148 22,131 45,116 68,103 90,93 112,85 135,80 158,77 180,76 202,78 225,81 248,87 270,94 292,103 315,113 338,124 360,135 382,147 405,158 428,168 450,178 472,186 495,192 518,196 540,198M0,94 22,103 45,113 68,124 90,135 112,147 135,158 158,168 180,178 202,186 225,192 248,196 270,198 292,197 315,195 338,191 360,185 382,178 405,171 428,164 450,157 472,151 495,147 518,145 540,145M0,198 22,197 45,195 68,191 90,185 112,178 135,171 158,164 180,157 202,151 225,147 248,145 270,145 292,147 315,152 338,159 360,168 382,179 405,190 428,202 450,214 472,225 495,235 518,243 540,250M0,145 22,147 45,152 68,159 90,168 112,179 135,190 158,202 180,214 202,225 225,235 248,243 270,250 292,255 315,258 338,259 360,258 382,257 405,255 428,252 450,249 472,247 495,246 518,246 540,247M0,250 22,255 45,258 68,259 90,258 112,257 135,255 158,252 180,249 202,247 225,246 248,246 270,247 292,250 315,253 338,258 360,264 382,270 405,277 428,283 450,289 472,294 495,298 518,300 540,301M0,247 22,250 45,253 68,258 90,264 112,270 135,277 158,283 180,289 202,294 225,298 248,300 270,301 292,300 315,297 338,293 360,286 382,279 405,270 428,259 450,248 472,236 495,224 518,211 540,198M0,301 22,300 45,297 68,293 90,286 112,279 135,270 158,259 180,248 202,236 225,224 248,211 270,198 292,186 315,174 338,163 360,154 382,145 405,139 428,134 450,131 472,131 495,133 518,137 540,144M0,198 22,186 45,174 68,163 90,154 112,145 135,139 158,134 180,131 202,131 225,133 248,137 270,144 292,153 315,164 338,177 360,191 382,206 405,221 428,236 450,251 472,266 495,278 518,289 540,299M0,144 22,153 45,164 68,177 90,191 112,206 135,221 158,236 180,251 202,266 225,278 248,289 270,299 292,306 315,310 338,313 360,313 382,311 405,306 428,300 450,292 472,283 495,272 518,261 540,249M0,299 22,306 45,310 68,313 90,313 112,311 135,306 158,300 180,292 202,283 225,272 248,261 270,249 292,237 315,225 338,213 360,201 382,190 405,180 428,171 450,164 472,157 495,152 518,149 540,147M0,249 22,237 45,225 68,213 90,201 112,190 135,180 158,171 180,164 202,157 225,152 248,149 270,147 292,146 315,147 338,148 360,152 382,156 405,161 428,166 450,172 472,178 495,185 518,191 540,197M0,147 22,146 45,147 68,148 90,152 112,156 135,161 158,166 180,172 202,178 225,185 248,191 270,197 292,203 315,209 338,214 360,219 382,223 405,228 428,232 450,236 472,239 495,243 518,246 540,250M0,197 22,203 45,209 68,214 90,219 112,223 135,228 158,232 180,236 202,239 225,243 248,246 270,250 292,253 315,256 338,259 360,263 382,266 405,270 428,274 450,279 472,284 495,289 518,295 540,301M0,250 22,253 45,256 68,259 90,263 112,266 135,270 158,274 180,279 202,284 225,289 248,295 270,301 292,307 315,313 338,319 360,324 382,328 405,331 428,332 450,331 472,327 495,320 518,311 540,299M0,301 22,307 45,313 68,319 90,324 112,328 135,331 158,332 180,331 202,327 225,320 248,311 270,299 292,284 315,268 338,249 360,230 382,211 405,193 428,177 450,163 472,152 495,145 518,143 540,145M0,299 22,284 45,268 68,249 90,230 112,211 135,193 158,177 180,163 202,152 225,145 248,143 270,145 292,152 315,162 338,176 360,193 382,211 405,231 428,249 450,266 472,281 495,292 518,298 540,300M0,145 22,152 45,162 68,176 90,193 112,211 135,231 158,249 180,266 202,281 225,292 248,298 270,300 292,297 315,290 338,278 360,261 382,242 405,220 428,197 450,174 472,151 495,129 518,110 540,94M0,300 22,297 45,290 68,277 90,261 112,242 135,220 158,197 180,174 202,151 225,129 248,110 270,94 292,81 315,71 338,66 360,64 382,66 405,71 428,78 450,89 472,101 495,115 518,130 540,146M0,94 22,81 45,71 68,66 90,64 112,66 135,71 158,78 180,89 202,101 225,115 248,130 270,146 292,161 315,177 338,192 360,206 382,218 405,229 428,238 450,245 472,250 495,252 518,251 540,248M0,146 22,161 45,177 68,192 90,206 112,218 135,229 158,238 180,245 202,250 225,252 248,251 270,248 292,242 315,235 338,225 360,214 382,203 405,191 428,179 450,168 472,159 495,152 518,147 540,145M0,248 22,242 45,235 68,225 90,214 112,202 135,190 158,179 180,168 202,159 225,151 248,147 270,145 292,146 315,149 338,156 360,164 382,175 405,187 428,199 450,212 472,224 495,234 518,243 540,249M0,145 22,146 45,149 68,156 90,164 112,175 135,187 158,199 180,212 202,224 225,234 248,243 270,249 292,253 315,255 338,254 360,250 382,245 405,239 428,231 450,223 472,216 495,208 518,202 540,197M0,249 22,253 45,255 68,254 90,251 112,245 135,239 158,231 180,223 202,216 225,208 248,202 270,197 292,194 315,192 338,191 360,191 382,193 405,195 428,197 450,198 472,199 495,199 518,197 540,195M0,197 22,194 45,191 68,191 90,191 112,193 135,195 158,196 180,198 202,199 225,199 248,197 270,195 292,191 315,185 338,179 360,172 382,164 405,157 428,151 450,146 472,142 495,141 518,142 540,145M0,195 22,191 45,185 68,179 90,172 112,164 135,157 158,151 180,146 202,142 225,141 248,142 270,145 292,151 315,158 338,168 360,179 382,191 405,203 428,214 450,225 472,234 495,242 518,247 540,249M0,145 22,151 45,158 68,168 90,179 112,191 135,203 158,214 180,225 202,234 225,242 248,247 270,249 292,249 315,247 338,242 360,236 382,228 405,221 428,213 450,206 472,200 495,196 518,194 540,195M0,249 22,249 45,247 68,242 90,236 112,228 135,221 158,213 180,206 202,200 225,196 248,194 270,195 292,198 315,204 338,212 360,221 382,232 405,244 428,256 450,267 472,278 495,287 518,295 540,300M0,195 22,198 45,204 68,212 90,221 112,232 135,244 158,256 180,267 202,278 225,287 248,295 270,300 292,304 315,305 338,304 360,301 382,297 405,291 428,284 450,277 472,270 495,263 518,256 540,250M0,300 22,304 45,305 68,304 90,301 112,297 135,291 158,284 180,277 202,270 225,263 248,256 270,250 292,245 315,241 338,238 360,236 382,235 405,235 428,236 450,238 472,240 495,243 518,246 540,248M0,250 22,245 45,241 68,238 90,236 112,235 135,235 158,236 180,238 202,240 225,243 248,246 270,248 292,250 315,252 338,253 360,253 382,252 405,249 428,245 450,239 472,232 495,222 518,211 540,198M0,248 22,250 45,252 68,253 90,253 112,252 135,249 158,245 180,239 202,232 225,222 248,211 270,198 292,184 315,169 338,153 360,136 382,120 405,104 428,89 450,75 472,64 495,54 518,47 540,43M0,198 22,184 45,169 68,152 90,136 112,120 135,104 158,89 180,75 202,64 225,54 248,47 270,43 292,42 315,43 338,48 360,56 382,67 405,80 428,96 450,113 472,133 495,153 518,175 540,197M0,43 22,42 45,43 68,48 90,56 112,67 135,80 158,96 180,113 202,133 225,153 248,175 270,197 292,219 315,240 338,259 360,277 382,293 405,305 428,315 450,320 472,322 495,319 518,312 540,301M0,197 22,219 45,240 68,259 90,277 112,293 135,305 158,315 180,320 202,322 225,319 248,312 270,301 292,285 315,267 338,245 360,221 382,196 405,170 428,144 450,118 472,95 495,75 518,57 540,43M0,301 22,285 45,267 68,245 90,221 112,196 135,170 158,144 180,118 202,95 225,75 248,57 270,43 292,33 315,28 338,26 360,29 382,35 405,44 428,57 450,72 472,89 495,107 518,127 540,146M0,43 22,33 45,28 68,26 90,29 112,35 135,44 158,57 180,72 202,89 225,107 248,127 270,146 292,166 315,185 338,203 360,220 382,236 405,250 428,263 450,274 472,284 495,291 518,297 540,301M0,146 22,166 45,185 68,203 90,220 112,236 135,250 158,263 180,274 202,284 225,291 248,297 270,301 292,303 315,304 338,304 360,303 382,301 405,299 428,297 450,295 472,295 495,295 518,296 540,299M0,301 22,303 45,304 68,304 90,303 112,301 135,299 158,297 180,295 202,295 225,295 248,296 270,299 292,303 315,308 338,314 360,319 382,325 405,329 428,332 450,332 472,329 495,324 518,314 540,301M0,299 22,303 45,308 68,314 90,319 112,325 135,329 158,332 180,332 202,329 225,324 248,314 270,301 292,285 315,265 338,242 360,217 382,191 405,164 428,138 450,113 472,90 495,71 518,55 540,43M0,301 22,284 45,265 68,242 90,217 112,191 135,164 158,138 180,113 202,90 225,71 248,55 270,43 292,35 315,32 338,33 360,38 382,46 405,57 428,70 450,85 472,100 495,115 518,130 540,143M0,43 22,35 45,32 68,33 90,38 112,46 135,57 158,70 180,85 202,100 225,115 248,130 270,143 292,156 315,166 338,175 360,181 382,185 405,186 428,185 450,182 472,176 495,168 518,158 540,146M0,143 22,156 45,166 68,175 90,181 112,185 135,186 158,185 180,182 202,176 225,168 248,158 270,146 292,133 315,119 338,104 360,89 382,75 405,62 428,50 450,42 472,36 495,34 518,35 540,41M0,146 22,133 45,119 68,104 90,89 112,75 135,62 158,50 180,42 202,36 225,34 248,35 270,41 292,50 315,62 338,78 360,95 382,114 405,133 428,151 450,167 472,180 495,190 518,195 540,196M0,41 22,50 45,62 68,78 90,95 112,114 135,133 158,151 180,167 202,180 225,190 248,195 270,196 292,192 315,184 338,171 360,156 382,138 405,119 428,100 450,82 472,67 495,55 518,46 540,43M0,196 22,192 45,184 68,171 90,156 112,138 135,119 158,100 180,82 202,67 225,55 248,46 270,43 292,43 315,49 338,58 360,71 382,87 405,105 428,124 450,143 472,160 495,176 518,189 540,199M0,43 22,43 45,49 68,58 90,71 112,87 135,105 158,124 180,143 202,160 225,176 248,189 270,199 292,205 315,207 338,206 360,201 382,193 405,182 428,170 450,155 472,140 495,124 518,108 540,94M0,199 22,205 45,207 68,206 90,201 112,193 135,182 158,170 180,155 202,140 225,124 248,108 270,94 292,80 315,68 338,57 360,49 382,44 405,42 428,42 450,46 472,53 495,63 518,77 540,93M0,94 22,80 45,68 68,57 90,49 112,44 135,42 158,42 180,46 202,53 225,63 248,77 270,93 292,112 315,134 338,156 360,180 382,203 405,226 428,247 450,265 472,280 495,291 518,298 540,299M0,93 22,112 45,133 68,156 90,180 112,203 135,226 158,247 180,265 202,280 225,291 248,298 270,299 292,296 315,288 338,275 360,259 382,239 405,217 428,194 450,171 472,148 495,128 518,109 540,94M0,299 22,296 45,288 68,275 90,259 112,239 135,217 158,194 180,171 202,148 225,128 248,109 270,94 292,82 315,73 338,68 360,66 382,67 405,70 428,74 450,79 472,84 495,88 518,91 540,93M0,94 22,82 45,73 68,68 90,66 112,67 135,70 158,74 180,79 202,84 225,88 248,91 270,93 292,92 315,90 338,86 360,81 382,74 405,67 428,60 450,53 472,47 495,43 518,41 540,41M0,93 22,92 45,90 68,86 90,81 112,74 135,67 158,60 180,53 202,47 225,43 248,41 270,41 292,43 315,48 338,54 360,63 382,72 405,83 428,95 450,107 472,118 495,129 518,138 540,147M0,41 22,43 45,48 68,54 90,63 112,72 135,83 158,95 180,107 202,118 225,129 248,138 270,147 292,154 315,159 338,164 360,167 382,170 405,172 428,174 450,177 472,180 495,184 518,189 540,196M0,147 22,154 45,159 68,164 90,167 112,170 135,172 158,174 180,177 202,180 225,184 248,189 270,196 292,203 315,212 338,221 360,230 382,239 405,247 428,253 450,258 472,260 495,259 518,256 540,249M0,196 22,203 45,212 68,221 90,230 112,239 135,247 158,253 180,258 202,260 225,259 248,256 270,249 292,239 315,226 338,211 360,194 382,176 405,158 428,141 450,126 472,113 495,103 518,97 540,95M0,249 22,239 45,226 68,211 90,194 112,176 135,158 158,141 180,126 202,113 225,103 248,97 270,95 292,96 315,102 338,110 360,122 382,135 405,148 428,162 450,175 472,185 495,193 518,197 540,198M0,95 22,96 45,102 68,110 90,122 112,135 135,148 158,162 180,175 202,185 225,193 248,197 270,198 292,194 315,187 338,177 360,165 382,151 405,136 428,122 450,110 472,100 495,93 518,90 540,92M0,198 22,194 45,187 68,177 90,165 112,151 135,136 158,122 180,110 202,100 225,93 248,90 270,92 292,98 315,109 338,124 360,142 382,162 405,185 428,208 450,230 472,252 495,271 518,287 540,299M0,92 22,98 45,109 68,124 90,142 112,162 135,185 158,208 180,230 202,252 225,271 248,287 270,299 292,308 315,313 338,313 360,310 382,303 405,293 428,281 450,266 472,250 495,233 518,216 540,199M0,299 22,308 45,313 68,313 90,310 112,303 135,293 158,281 180,266 202,250 225,233 248,216 270,199 292,182 315,167 338,152 360,139 382,127 405,117 428,109 450,102 472,98 495,95 518,93 540,94M0,199 22,182 45,167 68,152 90,139 112,127 135,117 158,109 180,102 202,98 225,95 248,93 270,94 292,96 315,99 338,104 360,109 382,116 405,122 428,128 450,134 472,139 495,143 518,145 540,146M0,94 22,96 45,99 68,104 90,110 112,116 135,122 158,128 180,134 202,139 225,143 248,145 270,146 292,145 315,143 338,139 360,134 382,128 405,121 428,115 450,109 472,103 495,99 518,96 540,94M0,146 22,145 45,143 68,139 90,134 112,128 135,122 158,115 180,109 202,103 225,99 248,96 270,94 292,94 315,96 338,100 360,104 382,110 405,116 428,123 450,129 472,135 495,140 518,144 540,146M0,94 22,94 45,96 68,100 90,104 112,110 135,116 158,123 180,129 202,135 225,140 248,144 270,146 292,147 315,146 338,144 360,140 382,135 405,130 428,124 450,117 472,111 495,105 518,100 540,96M0,146 22,147 45,146 68,144 90,140 112,135 135,130 158,124 180,117 202,111 225,105 248,100 270,96 292,92 315,89 338,87 360,86 382,86 405,86 428,87 450,88 472,89 495,91 518,92 540,93M0,96 22,92 45,89 68,87 90,86 112,86 135,86 158,87 180,88 202,89 225,91 248,92 270,93 292,94 315,94 338,95 360,95 382,94 405,94 428,94 450,93 472,93 495,93 518,94 540,95M0,93 22,94 45,94 68,95 90,95 112,94 135,94 158,94 180,93 202,93 225,93 248,94 270,95 292,97 315,99 338,101 360,105 382,108 405,113 428,118 450,123 472,128 495,134 518,140 540,146M0,95 22,97 45,99 68,101 90,105 112,108 135,113 158,118 180,123 202,128 225,134 248,140 270,146 292,152 315,159 338,165 360,173 382,180 405,188 428,197 450,206 472,216 495,226 518,238 540,249M0,146 22,152 45,159 68,165 90,172 112,180 135,188 158,197 180,206 202,216 225,226 248,238 270,249 292,261 315,273 338,285 360,296 382,305 405,313 428,319 450,321 472,321 495,318 518,311 540,301M0,249 22,261 45,273 68,285 90,296 112,305 135,313 158,319 180,322 202,321 225,318 248,311 270,301 292,288 315,272 338,253 360,233 382,211 405,189 428,168 450,148 472,130 495,114 518,102 540,93M0,301 22,288 45,272 68,253 90,233 112,211 135,189 158,168 180,148 202,130 225,114 248,102 270,93 292,88 315,87 338,90 360,96 382,105 405,116 428,129 450,143 472,157 495,171 518,185 540,197M0,93 22,88 45,87 68,90 90,96 112,105 135,116 158,129 180,143 202,157 225,171 248,185 270,197 292,207 315,216 338,223 360,229 382,233 405,236 428,238 450,240 472,241 495,244 518,246 540,249M0,197 22,207 45,216 68,223 90,229 112,233 135,236 158,238 180,240 202,241 225,244 248,246 270,249 292,254 315,259 338,265 360,271 382,278 405,284 428,290 450,295 472,299 495,301 518,302 540,301M0,249 22,254 45,259 68,265 90,271 112,278 135,284 158,290 180,295 202,299 225,301 248,302 270,301 292,299 315,295 338,289 360,283 382,276 405,269 428,263 450,257 472,253 495,250 518,249 540,249M0,301 22,299 45,295 68,289 90,283 112,276 135,269 158,263 180,257 202,253 225,250 248,249 270,249 292,252 315,256 338,261 360,268 382,275 405,282 428,289 450,295 472,299 495,301 518,301 540,299M0,249 22,252 45,256 68,262 90,268 112,275 135,282 158,289 180,295 202,299 225,301 248,301 270,299 292,295 315,289 338,280 360,271 382,260 405,248 428,237 450,226 472,216 495,208 518,202 540,197M0,299 22,295 45,289 68,280 90,271 112,260 135,248 158,237 180,226 202,216 225,208 248,202 270,197 292,195 315,195 338,196 360,200 382,205 405,211 428,218 450,225 472,232 495,239 518,244 540,249M0,197 22,195 45,195 68,196 90,200 112,205 135,211 158,218 180,225 202,232 225,239 248,244 270,249 292,252 315,253 338,254 360,252 382,249 405,245 428,239 450,233 472,225 495,216 518,207 540,198M0,249 22,252 45,253 68,254 90,252 112,249 135,245 158,239 180,233 202,225 225,216 248,207 270,198 292,188 315,178 338,169 360,160 382,153 405,146 428,142 450,138 472,137 495,138 518,141 540,146M0,198 22,188 45,178 68,169 90,160 112,153 135,146 158,142 180,138 202,137 225,138 248,141 270,146 292,153 315,161 338,171 360,182 382,194 405,206 428,217 450,227 472,235 495,242 518,247 540,249M0,146 22,153 45,161 68,171 90,182 112,194 135,206 158,217 180,227 202,235 225,242 248,247 270,249 292,248 315,245 338,240 360,232 382,223 405,213 428,201 450,189 472,178 495,167 518,156 540,148M0,249 22,248 45,245 68,240 90,232 112,223 135,212 158,201 180,189 202,178 225,167 248,156 270,148 292,140 315,134 338,130 360,127 382,126 405,127 428,128 450,130 472,133 495,137 518,140 540,144M0,148 22,140 45,134 68,130 90,127 112,126 135,127 158,128 180,130 202,133 225,137 248,140 270,144 292,147 315,150 338,153 360,155 382,156 405,157 428,157 450,156 472,154 495,152 518,150 540,146M0,144 22,147 45,150 68,153 90,155 112,156 135,157 158,157 180,156 202,154 225,152 248,150 270,146 292,143 315,139 338,136 360,133 382,130 405,128 428,127 450,128 472,130 495,133 518,139 540,146M0,146 22,143 45,139 68,136 90,133 112,130 135,128 158,127 180,128 202,130 225,133 248,139 270,146 292,155 315,166 338,178 360,192 382,206 405,221 428,236 450,251 472,265 495,278 518,289 540,299M0,146 22,155 45,166 68,178 90,192 112,206 135,221 158,236 180,251 202,265 225,278 248,289 270,299 292,307 315,312 338,315 360,316 382,315 405,311 428,305 450,297 472,287 495,275 518,262 540,249M0,299 22,307 45,312 68,315 90,316 112,315 135,311 158,305 180,297 202,287 225,275 248,262 270,249 292,234 315,219 338,203 360,188 382,173 405,158 428,144 450,131 472,120 495,109 518,101 540,94M0,249 22,234 45,219 68,203 90,188 112,173 135,158 158,144 180,131 202,120 225,109 248,101 270,94 292,89 315,86 338,85 360,86 382,88 405,93 428,99 450,107 472,115 495,125 518,135 540,146M0,94 22,89 45,86 68,85 90,86 112,88 135,93 158,99 180,106 202,115 225,125 248,135 270,146 292,157 315,169 338,179 360,190 382,200 405,210 428,219 450,227 472,234 495,241 518,246 540,250M0,146 22,157 45,168 68,179 90,190 112,200 135,210 158,219 180,227 202,234 225,241 248,246 270,250 292,254 315,256 338,257 360,256 382,255 405,251 428,246 450,239 472,231 495,221 518,210 540,197M0,250 22,254 45,256 68,257 90,256 112,255 135,251 158,246 180,239 202,231 225,221 248,210 270,197 292,183 315,168 338,153 360,137 382,121 405,106 428,92 450,78 472,66 495,56 518,48 540,41M0,197 22,183 45,168 68,153 90,137 112,121 135,106 158,92 180,78 202,66 225,56 248,48 270,41 292,37 315,35 338,34 360,36 382,39 405,44 428,51 450,58 472,67 495,76 518,85 540,95M0,41 22,37 45,35 68,34 90,36 112,39 135,44 158,51 180,58 202,66 225,76 248,85 270,95 292,105 315,115 338,125 360,134 382,144 405,153 428,161 450,169 472,177 495,183 518,190 540,196M0,95 22,105 45,115 68,125 90,134 112,144 135,153 158,161 180,169 202,177 225,183 248,190 270,196 292,201 315,206 338,211 360,215 382,219 405,223 428,227 450,232 472,236 495,240 518,245 540,250M0,196 22,201 45,206 68,211 90,215 112,219 135,223 158,227 180,232 202,236 225,240 248,245 270,250 292,255 315,260 338,264 360,268 382,271 405,273 428,273 450,272 472,270 495,265 518,258 540,250M0,250 22,255 45,260 68,264 90,268 112,271 135,273 158,273 180,272 202,270 225,265 248,258 270,250 292,239 315,227 338,213 360,199 382,183 405,168 428,152 450,138 472,124 495,112 518,102 540,93M0,250 22,239 45,227 68,213 90,199 112,183 135,168 158,152 180,138 202,124 225,112 248,102 270,93 292,87 315,84 338,82 360,83 382,86 405,91 428,98 450,106 472,115 495,125 518,135 540,146M0,93 22,87 45,84 68,82 90,83 112,86 135,91 158,98 180,106 202,115 225,125 248,135 270,146 292,156 315,166 338,176 360,184 382,191 405,197 428,202 450,204 472,205 495,204 518,201 540,196M0,146 22,156 45,166 68,176 90,184 112,191 135,197 158,202 180,204 202,205 225,204 248,201 270,196 292,190 315,182 338,173 360,163 382,153 405,142 428,131 450,122 472,113 495,105 518,99 540,95M0,196 22,190 45,182 68,173 90,163 112,153 135,142 158,131 180,122 202,113 225,105 248,99 270,95 292,92 315,92 338,94 360,97 382,102 405,107 428,114 450,121 472,128 495,135 518,141 540,147M0,95 22,92 45,92 68,94 90,97 112,102 135,107 158,114 180,121 202,128 225,135 248,141 270,147 292,151 315,154 338,156 360,157 382,157 405,156 428,155 450,153 472,151 495,150 518,148 540,148M0,147 22,151 45,154 68,156 90,157 112,157 135,156 158,155 180,153 202,151 225,150 248,148 270,148 292,147 315,148 338,148 360,149 382,151 405,152 428,153 450,153 472,153 495,152 518,150 540,147M0,148 22,147 45,148 68,148 90,149 112,151 135,152 158,153 180,153 202,153 225,152 248,150 270,147 292,143 315,138 338,133 360,127 382,121 405,116 428,110 450,105 472,101 495,98 518,96 540,95M0,147 22,143 45,138 68,133 90,127 112,122 135,116 158,110 180,105 202,101 225,98 248,96 270,95 292,96 315,97 338,100 360,103 382,108 405,113 428,118 450,124 472,130 495,136 518,141 540,147M0,95 22,96 45,97 68,100 90,103 112,108 135,113 158,118 180,124 202,130 225,136 248,141 270,147 292,153 315,158 338,163 360,167 382,172 405,176 428,180 450,184 472,188 495,191 518,194 540,197M0,147 22,153 45,158 68,163 90,167 112,172 135,176 158,180 180,184 202,188 225,191 248,194 270,197 292,200 315,202 338,205 360,208 382,211 405,215 428,219 450,223 472,229 495,235 518,242 540,249M0,197 22,200 45,202 68,205 90,208 112,211 135,215 158,219 180,223 202,229 225,235 248,242 270,249 292,257 315,265 338,272 360,279 382,284 405,288 428,289 450,288 472,283 495,276 518,265 540,251M0,249 22,257 45,265 68,272 90,279 112,284 135,288 158,289 180,288 202,283 225,276 248,265 270,251 292,234 315,214 338,193 360,170 382,147 405,124 428,102 450,83 472,66 495,53 518,44 540,40M0,251 22,234 45,214 68,193 90,170 112,147 135,124 158,102 180,83 202,66 225,53 248,44 270,40 292,40 315,45 338,55 360,69 382,86 405,107 428,130 450,154 472,179 495,203 518,227 540,250M0,40 22,40 45,45 68,55 90,69 112,86 135,107 158,130 180,154 202,179 225,203 248,227 270,250 292,270 315,288 338,302 360,314 382,323 405,328 428,330 450,329 472,326 495,320 518,312 540,302M0,250 22,270 45,288 68,302 90,314 112,323 135,328 158,330 180,329 202,326 225,320 248,312 270,302 292,290 315,277 338,263 360,249 382,234 405,219 428,204 450,190 472,177 495,164 518,154 540,144M0,302 22,290 45,277 68,263 90,249 112,234 135,219 158,204 180,190 202,177 225,164 248,154 270,144 292,137 315,132 338,129 360,128 382,129 405,133 428,139 450,147 472,158 495,169 518,182 540,196M0,144 22,137 45,132 68,129 90,128 112,129 135,133 158,139 180,148 202,158 225,169 248,182 270,196 292,210 315,225 338,239 360,253 382,265 405,277 428,286 450,294 472,299 495,302 518,303 540,302M0,196 22,210 45,225 68,239 90,253 112,265 135,277 158,286 180,294 202,299 225,302 248,303 270,302 292,298 315,292 338,283 360,273 382,261 405,247 428,232 450,216 472,199 495,182 518,164 540,147M0,302 22,298 45,292 68,283 90,273 112,261 135,247 158,232 180,216 202,199 225,182 248,164 270,147 292,130 315,115 338,101 360,88 382,78 405,71 428,66 450,65 472,67 495,73 518,82 540,95M0,147 22,130 45,115 68,101 90,88 112,78 135,71 158,66 180,65 202,67 225,73 248,82 270,95 292,111 315,129 338,149 360,170 382,192 405,214 428,235 450,254 472,270 495,284 518,293 540,299M0,95 22,111 45,129 68,149 90,170 112,192 135,214 158,235 180,254 202,270 225,284 248,293 270,299 292,301 315,299 338,294 360,286 382,275 405,262 428,249 450,236 472,224 495,213 518,204 540,198M0,299 22,301 45,299 68,294 90,286 112,275 135,262 158,249 180,236 202,224 225,213 248,204 270,198 292,194 315,193 338,195 360,199 382,205 405,213 428,221 450,229 472,236 495,243 518,247 540,250M0,198 22,194 45,193 68,195 90,199 112,205 135,213 158,221 180,229 202,237 225,243 248,247 270,250 292,250 315,247 338,243 360,236 382,227 405,217 428,205 450,193 472,181 495,168 518,157 540,146M0,250 22,250 45,247 68,243 90,236 112,227 135,217 158,205 180,193 202,181 225,168 248,157 270,146 292,136 315,127 338,119 360,112 382,107 405,102 428,99 450,96 472,94 495,93 518,93 540,93M0,146 22,136 45,127 68,119 90,112 112,107 135,102 158,99 180,96 202,94 225,93 248,93 270,93 292,93 315,94 338,95 360,97 382,98 405,99 428,100 450,101 472,100 495,99 518,98 540,95M0,93 22,93 45,94 68,95 90,97 112,98 135,99 158,100 180,101 202,100 225,99 248,98 270,95 292,92 315,89 338,85 360,81 382,77 405,75 428,73 450,73 472,75 495,79 518,85 540,94M0,95 22,92 45,89 68,85 90,81 112,77 135,75 158,73 180,73 202,75 225,79 248,85 270,94 292,106 315,119 338,134 360,151 382,168 405,185 428,201 450,216 472,229 495,239 518,246 540,250M0,94 22,106 45,119 68,134 90,151 112,168 135,185 158,201 180,216 202,229 225,239 248,246 270,250 292,251 315,248 338,242 360,234 382,223 405,211 428,198 450,185 472,172 495,161 518,151 540,143M0,250 22,251 45,248 68,242 90,234 112,223 135,211 158,198 180,185 202,172 225,161 248,151 270,143 292,138 315,135 338,133 360,134 382,136 405,139 428,142 450,145 472,147 495,148 518,147 540,144M0,143 22,138 45,134 68,133 90,134 112,136 135,139 158,142 180,145 202,147 225,148 248,147 270,144 292,139 315,132 338,123 360,113 382,102 405,90 428,79 450,68 472,58 495,51 518,45 540,41M0,144 22,139 45,132 68,123 90,113 112,102 135,90 158,79 180,68 202,58 225,51 248,45 270,41 292,40 315,42 338,45 360,50 382,57 405,64 428,71 450,78 472,84 495,89 518,93 540,94M0,41 22,40 45,42 68,45 90,50 112,57 135,64 158,71 180,78 202,85 225,89 248,93 270,94 292,94 315,92 338,89 360,85 382,81 405,77 428,74 450,73 472,74 495,78 518,84 540,93M0,94 22,94 45,92 68,89 90,85 112,81 135,77 158,74 180,73 202,74 225,78 248,84 270,93 292,106 315,121 338,138 360,158 382,179 405,200 428,222 450,242 472,261 495,278 518,292 540,303M0,93 22,106 45,121 68,138 90,158 112,179 135,200 158,222 180,242 202,261 225,278 248,292 270,303 292,310 315,315 338,316 360,315 382,311 405,305 428,297 450,288 472,278 495,268 518,258 540,249M0,303 22,310 45,315 68,316 90,315 112,311 135,304 158,297 180,287 202,278 225,268 248,258 270,249 292,240 315,232 338,226 360,220 382,215 405,211 428,208 450,206 472,204 495,202 518,200 540,199M0,249 22,240 45,232 68,226 90,220 112,215 135,211 158,208 180,206 202,204 225,202 248,200 270,199 292,197 315,195 338,192 360,189 382,186 405,182 428,178 450,173 472,167 495,161 518,154 540,147M0,199 22,197 45,195 68,192 90,189 112,186 135,182 158,178 180,173 202,167 225,161 248,154 270,147 292,140 315,132 338,125 360,118 382,111 405,105 428,100 450,96 472,94 495,92 518,93 540,95M0,147 22,140 45,132 68,125 90,118 112,111 135,105 158,100 180,96 202,94 225,92 248,93 270,95 292,98 315,103 338,110 360,117 382,126 405,136 428,146 450,156 472,167 495,178 518,188 540,198M0,95 22,98 45,103 68,110 90,117 112,126 135,136 158,146 180,156 202,167 225,178 248,188 270,198 292,206 315,214 338,221 360,225 382,229 405,230 428,230 450,227 472,222 495,216 518,207 540,197M0,198 22,206 45,214 68,220 90,225 112,229 135,230 158,230 180,227 202,222 225,216 248,207 270,197 292,185 315,172 338,158 360,145 382,131 405,119 428,108 450,100 472,93 495,90 518,90 540,93M0,197 22,185 45,172 68,158 90,145 112,131 135,119 158,108 180,100 202,93 225,90 248,90 270,93 292,100 315,109 338,121 360,135 382,151 405,168 428,184 450,201 472,216 495,229 518,240 540,249M0,93 22,100 45,109 68,121 90,135 112,151 135,168 158,184 180,201 202,216 225,229 248,240 270,249 292,254 315,257 338,257 360,254 382,249 405,242 428,235 450,226 472,218 495,210 518,204 540,198M0,249 22,254 45,257 68,257 90,254 112,249 135,243 158,235 180,227 202,218 225,210 248,204 270,198 292,194 315,192 338,192 360,194 382,198 405,203 428,209 450,217 472,225 495,233 518,241 540,248M0,198 22,194 45,192 68,192 90,194 112,198 135,203 158,209 180,217 202,224 225,233 248,241 270,248 292,255 315,261 338,266 360,269 382,271 405,272 428,272 450,270 472,266 495,262 518,256 540,249M0,248 22,255 45,261 68,266 90,269 112,271 135,272 158,272 180,270 202,266 225,262 248,256 270,249 292,241 315,232 338,221 360,210 382,198 405,185 428,171 450,156 472,141 495,125 518,109 540,93M0,249 22,241 45,232 68,221 90,210 112,198 135,185 158,171 180,156 202,141 225,125 248,109 270,93 292,77 315,62 338,48 360,36 382,26 405,19 428,14 450,13 472,15 495,21 518,30 540,43M0,93 22,77 45,62 68,48 90,36 112,26 135,19 158,14 180,13 202,15 225,21 248,30 270,43 292,59 315,78 338,99 360,121 382,144 405,167 428,188 450,208 472,224 495,237 518,247 540,252M0,43 22,59 45,78 68,99 90,121 112,144 135,167 158,188 180,208 202,224 225,237 248,247 270,252 292,252 315,249 338,241 360,230 382,215 405,199 428,180 450,162 472,143 495,125 518,109 540,94M0,252 22,252 45,249 68,241 90,230 112,215 135,199 158,180 180,162 202,143 225,125 248,109 270,94 292,83 315,74 338,67 360,64 382,63 405,64 428,67 450,71 472,76 495,82 518,87 540,92M0,94 22,83 45,74 68,67 90,64 112,63 135,64 158,67 180,71 202,76 225,82 248,87 270,92 292,96 315,99 338,101 360,103 382,103 405,102 428,101 450,100 472,98 495,96 518,95 540,94M0,92 22,96 45,99 68,101 90,103 112,103 135,102 158,101 180,100 202,98 225,96 248,95 270,94 292,93 315,93 338,93 360,93 382,94 405,95 428,96 450,97 472,97 495,96 518,95 540,94M0,94 22,93 45,93 68,93 90,93 112,94 135,95 158,96 180,97 202,97 225,96 248,95 270,94 292,93 315,91 338,89 360,89 382,89 405,90 428,93 450,99 472,106 495,117 518,129 540,145M0,94 22,93 45,91 68,89 90,89 112,89 135,90 158,93 180,99 202,106 225,117 248,129 270,145 292,162 315,181 338,201 360,222 382,242 405,260 428,276 450,290 472,299 495,304 518,304 540,300M0,145 22,162 45,181 68,201 90,222 112,242 135,260 158,276 180,290 202,299 225,304 248,304 270,300 292,291 315,277 338,260 360,240 382,217 405,194 428,171 450,149 472,130 495,114 518,101 540,94M0,300 22,291 45,277 68,260 90,240 112,217 135,194 158,171 180,149 202,130 225,114 248,101 270,94 292,91 315,92 338,99 360,109 382,123 405,140 428,159 450,178 472,198 495,217 518,234 540,249M0,94 22,91 45,92 68,99 90,109 112,123 135,140 158,159 180,178 202,198 225,217 248,234 270,249 292,262 315,271 338,276 360,278 382,277 405,273 428,265 450,255 472,243 495,229 518,214 540,197M0,249 22,262 45,271 68,276 90,278 112,277 135,273 158,265 180,255 202,243 225,229 248,214 270,197 292,180 315,162 338,145 360,128 382,112 405,97 428,83 450,71 472,60 495,52 518,46 540,42M0,197 22,180 45,162 68,145 90,128 112,112 135,97 158,83 180,71 202,60 225,52 248,46 270,42 292,41 315,42 338,46 360,52 382,60 405,70 428,81 450,93 472,106 495,120 518,133 540,146M0,42 22,41 45,42 68,46 90,52 112,60 135,70 158,81 180,93 202,106 225,120 248,133 270,146 292,159 315,171 338,182 360,192 382,201 405,210 428,218 450,225 472,231 495,238 518,244 540,250M0,146 22,159 45,171 68,182 90,192 112,201 135,210 158,218 180,225 202,231 225,238 248,244 270,250 292,256 315,262 338,268 360,273 382,279 405,284 428,288 450,292 472,295 495,298 518,300 540,300M0,250 22,256 45,262 68,268 90,273 112,279 135,284 158,288 180,292 202,295 225,298 248,300 270,300 292,300 315,299 338,297 360,294 382,290 405,286 428,281 450,276 472,269 495,263 518,255 540,248M0,300 22,300 45,299 68,297 90,294 112,290 135,286 158,281 180,276 202,269 225,263 248,255 270,248 292,240 315,231 338,222 360,213 382,204 405,195 428,185 450,176 472,168 495,160 518,152 540,145M0,248 22,240 45,231 68,222 90,213 112,204 135,195 158,185 180,176 202,168 225,160 248,152 270,145 292,139 315,133 338,128 360,124 382,120 405,117 428,114 450,110 472,107 495,103 518,98 540,93M0,145 22,139 45,133 68,128 90,124 112,120 135,117 158,114 180,110 202,107 225,103 248,98 270,93 292,88 315,83 338,78 360,73 382,69 405,67 428,65 450,66 472,69 495,75 518,83 540,93M0,93 22,88 45,83 68,78 90,73 112,69 135,67 158,65 180,66 202,69 225,75 248,83 270,93 292,107 315,122 338,138 360,156 382,174 405,191 428,208 450,222 472,233 495,241 518,246 540,246M0,93 22,107 45,122 68,138 90,156 112,174 135,191 158,208 180,222 202,233 225,241 248,246 270,246 292,243 315,235 338,225 360,211 382,195 405,178 428,161 450,144 472,128 495,114 518,102 540,94M0,246 22,243 45,235 68,225 90,211 112,195 135,178 158,161 180,144 202,128 225,114 248,102 270,94 292,89 315,87 338,88 360,91 382,97 405,105 428,113 450,122 472,130 495,137 518,142 540,145M0,94 22,89 45,87 68,88 90,91 112,97 135,105 158,113 180,122 202,130 225,137 248,142 270,145 292,145 315,144 338,140 360,134 382,128 405,120 428,112 450,105 472,99 495,95 518,92 540,92M0,145 22,145 45,144 68,140 90,134 112,127 135,120 158,112 180,105 202,99 225,94 248,92 270,92 292,94 315,99 338,106 360,115 382,126 405,137 428,149 450,161 472,172 495,182 518,190 540,197M0,92 22,94 45,99 68,106 90,115 112,126 135,137 158,149 180,161 202,172 225,182 248,190 270,197 292,202 315,205 338,207 360,207 382,206 405,204 428,201 450,199 472,198 495,196 518,196 540,197M0,197 22,202 45,205 68,207 90,207 112,206 135,204 158,201 180,199 202,198 225,196 248,196 270,197 292,199 315,201 338,204 360,207 382,210 405,213 428,214 450,214 472,213 495,209 518,204 540,196M0,197 22,199 45,201 68,204 90,207 112,210 135,213 158,214 180,214 202,213 225,209 248,204 270,196 292,186 315,175 338,161 360,147 382,131 405,115 428,100 450,85 472,71 495,59 518,48 540,41M0,196 22,186 45,175 68,161 90,147 112,131 135,115 158,100 180,85 202,71 225,59 248,48 270,41 292,35 315,33 338,34 360,37 382,43 405,52 428,63 450,76 472,92 495,108 518,126 540,145M0,41 22,35 45,33 68,34 90,37 112,43 135,52 158,63 180,76 202,92 225,108 248,126 270,145 292,165 315,184 338,203 360,221 382,238 405,254 428,267 450,279 472,288 495,295 518,299 540,300M0,145 22,165 45,184 68,203 90,221 112,238 135,254 158,267 180,279 202,288 225,295 248,299 270,300 292,298 315,293 338,286 360,276 382,263 405,249 428,233 450,216 472,198 495,180 518,163 540,146M0,300 22,298 45,293 68,286 90,276 112,263 135,249 158,233 180,216 202,198 225,180 248,163 270,146 292,129 315,115 338,101 360,89 382,79 405,70 428,63 450,57 472,53 495,49 518,46 540,44M0,146 22,129 45,115 68,101 90,89 112,79 135,70 158,63 180,57 202,53 225,49 248,46 270,44 292,42 315,41 338,40 360,40 382,42 405,44 428,48 450,53 472,60 495,69 518,80 540,93M0,44 22,42 45,41 68,40 90,40 112,41 135,44 158,47 180,53 202,60 225,69 248,80 270,93 292,107 315,123 338,139 360,155 382,170 405,184 428,195 450,204 472,209 495,209 518,205 540,197M0,93 22,107 45,123 68,139 90,155 112,170 135,184 158,195 180,204 202,209 225,209 248,205 270,197 292,185 315,170 338,151 360,131 382,111 405,90 428,72 450,57 472,46 495,39 518,39 540,44M0,197 22,185 45,170 68,152 90,131 112,111 135,90 158,72 180,57 202,46 225,39 248,39 270,44 292,55 315,72 338,93 360,119 382,146 405,176 428,205 450,232 472,256 495,276 518,291 540,301M0,44 22,55 45,72 68,93 90,119 112,146 135,176 158,205 180,232 202,256 225,276 248,291 270,301 292,304 315,301 338,292 360,278 382,259 405,237 428,213 450,187 472,162 495,137 518,115 540,96M0,301 22,304 45,301 68,292 90,278 112,259 135,237 158,212 180,187 202,161 225,137 248,115 270,96 292,80 315,68 338,61 360,58 382,59 405,63 428,71 450,83 472,96 495,112 518,129 540,147M0,96 22,80 45,68 68,61 90,58 112,59 135,63 158,72 180,83 202,96 225,112 248,129 270,147 292,165 315,184 338,202 360,220 382,236 405,251 428,265 450,277 472,286 495,294 518,298 540,300M0,147 22,165 45,184 68,202 90,220 112,236 135,251 158,265 180,277 202,286 225,294 248,298 270,300 292,300 315,297 338,291 360,284 382,274 405,264 428,252 450,240 472,228 495,217 518,207 540,198M0,300 22,300 45,297 68,291 90,284 112,274 135,264 158,252 180,240 202,228 225,217 248,207 270,198 292,191 315,186 338,183 360,181 382,181 405,182 428,184 450,187 472,190 495,193 518,195 540,196M0,198 22,191 45,186 68,183 90,181 112,181 135,182 158,184 180,187 202,190 225,193 248,195 270,196 292,197 315,196 338,196 360,194 382,193 405,191 428,190 450,189 472,190 495,191 518,194 540,199M0,196 22,197 45,196 68,196 90,194 112,192 135,191 158,190 180,189 202,190 225,191 248,194 270,199 292,204 315,211 338,218 360,225 382,233 405,240 428,245 450,250 472,253 495,254 518,252 540,249M0,199 22,204 45,211 68,218 90,225 112,233 135,240 158,246 180,250 202,253 225,254 248,252 270,249 292,243 315,234 338,224 360,212 382,199 405,184 428,169 450,153 472,137 495,122 518,107 540,93M0,249 22,243 45,234 68,224 90,212 112,199 135,184 158,169 180,153 202,137 225,122 248,107 270,93 292,81 315,70 338,61 360,55 382,50 405,48 428,49 450,53 472,59 495,68 518,79 540,92M0,93 22,81 45,70 68,61 90,55 112,50 135,48 158,49 180,53 202,59 225,68 248,79 270,92 292,108 315,125 338,143 360,161 382,179 405,196 428,212 450,225 472,236 495,243 518,247 540,248M0,92 22,108 45,125 68,143 90,161 112,179 135,196 158,212 180,225 202,236 225,243 248,247 270,248 292,245 315,238 338,229 360,216 382,202 405,186 428,169 450,151 472,135 495,119 518,105 540,94M0,248 22,245 45,238 68,229 90,216 112,202 135,186 158,169 180,151 202,135 225,119 248,105 270,94 292,85 315,78 338,75 360,74 382,76 405,81 428,88 450,97 472,107 495,119 518,132 540,146M0,94 22,85 45,78 68,75 90,74 112,76 135,81 158,88 180,97 202,107 225,119 248,132 270,146 292,159 315,173 338,186 360,198 382,210 405,221 428,230 450,237 472,243 495,247 518,249 540,249M0,146 22,159 45,173 68,186 90,198 112,210 135,221 158,230 180,237 202,243 225,247 248,249 270,249 292,247 315,244 338,239 360,233 382,227 405,220 428,213 450,207 472,202 495,198 518,196 540,196M0,249 22,247 45,244 68,239 90,233 112,227 135,220 158,213 180,207 202,202 225,198 248,196 270,196 292,198 315,202 338,207 360,214 382,221 405,229 428,237 450,243 472,248 495,251 518,252 540,249M0,196 22,198 45,202 68,207 90,214 112,221 135,229 158,237 180,243 202,248 225,251 248,252 270,249 292,245 315,237 338,228 360,217 382,204 405,192 428,179 450,168 472,158 495,151 518,146 540,145M0,249 22,245 45,237 68,228 90,217 112,204 135,192 158,179 180,168 202,158 225,151 248,146 270,145 292,147 315,152 338,159 360,169 382,181 405,193 428,206 450,218 472,229 495,238 518,245 540,249M0,145 22,147 45,152 68,159 90,169 112,181 135,193 158,206 180,218 202,229 225,238 248,245 270,249 292,251 315,250 338,246 360,241 382,234 405,227 428,219 450,212 472,206 495,201 518,198 540,197M0,249 22,251 45,250 68,246 90,241 112,234 135,227 158,219 180,212 202,206 225,201 248,198 270,197 292,198 315,202 338,208 360,216 382,226 405,237 428,248 450,260 472,272 495,283 518,292 540,301M0,197 22,198 45,202 68,208 90,216 112,226 135,237 158,248 180,260 202,272 225,283 248,292 270,301 292,307 315,312 338,314 360,314 382,312 405,308 428,302 450,294 472,284 495,272 518,260 540,247M0,301 22,307 45,312 68,314 90,314 112,312 135,308 158,302 180,294 202,284 225,272 248,260 270,247 292,232 315,218 338,203 360,188 382,174 405,160 428,146 450,134 472,122 495,112 518,102 540,95M0,247 22,232 45,218 68,203 90,188 112,174 135,160 158,146 180,134 202,122 225,112 248,102 270,95 292,88 315,84 338,81 360,81 382,82 405,85 428,91 450,98 472,108 495,119 518,131 540,145M0,95 22,88 45,84 68,81 90,81 112,82 135,85 158,91 180,98 202,108 225,119 248,131 270,145 292,160 315,175 338,191 360,206 382,219 405,231 428,241 450,249 472,253 495,255 518,253 540,249M0,145 22,160 45,175 68,191 90,206 112,219 135,231 158,241 180,249 202,253 225,255 248,253 270,249 292,241 315,230 338,217 360,203 382,187 405,170 428,154 450,138 472,124 495,111 518,101 540,93M0,249 22,241 45,230 68,217 90,203 112,187 135,170 158,154 180,138 202,124 225,111 248,101 270,93 292,88 315,87 338,88 360,92 382,98 405,107 428,119 450,132 472,147 495,163 518,180 540,197M0,93 22,88 45,87 68,88 90,92 112,98 135,107 158,119 180,132 202,147 225,163 248,180 270,197 292,214 315,230 338,245 360,259 382,270 405,279 428,284 450,285 472,283 495,276 518,264 540,248M0,197 22,214 45,230 68,245 90,259 112,270 135,279 158,284 180,285 202,283 225,276 248,264 270,248 292,229 315,206 338,181 360,154 382,127 405,102 428,79 450,60 472,45 495,37 518,36 540,41M0,248 22,229 45,206 68,181 90,154 112,127 135,102 158,79 180,60 202,45 225,37 248,36 270,41 292,54 315,73 338,97 360,126 382,157 405,189 428,221 450,249 472,272 495,290 518,300 540,302M0,41 22,54 45,73 68,97 90,126 112,157 135,189 158,221 180,249 202,272 225,290 248,300 270,302 292,296 315,282 338,261 360,235 382,204 405,171 428,139 450,109 472,82 495,62 518,48 540,42M0,302 22,296 45,282 68,261 90,235 112,204 135,171 158,139 180,109 202,82 225,62 248,48 270,42 292,45 315,55 338,73 360,97 382,126 405,157 428,189 450,220 472,249 495,272 518,290 540,302M0,42 22,45 45,55 68,73 90,97 112,126 135,157 158,189 180,220 202,249 225,272 248,290 270,302 292,306 315,303 338,293 360,278 382,257 405,234 428,207 450,181 472,155 495,131 518,110 540,94M0,302 22,306 45,303 68,293 90,278 112,257 135,234 158,207 180,181 202,155 225,131 248,110 270,94 292,82 315,75 338,72 360,75 382,82 405,93 428,107 450,123 472,141 495,160 518,180 540,198M0,94 22,82 45,75 68,72 90,75 112,82 135,93 158,107 180,123 202,141 225,160 248,180 270,198 292,216 315,233 338,247 360,259 382,269 405,275 428,279 450,279 472,277 495,271 518,262 540,250M0,198 22,216 45,233 68,247 90,259 112,269 135,275 158,279 180,280 202,277 225,271 248,262 270,250 292,235 315,218 338,199 360,179 382,157 405,136 428,115 450,96 472,78 495,63 518,51 540,42M0,250 22,235 45,218 68,199 90,179 112,158 135,136 158,115 180,96 202,78 225,63 248,51 270,42 292,38 315,37 338,40 360,47 382,58 405,73 428,90 450,109 472,130 495,152 518,174 540,196M0,42 22,38 45,37 68,40 90,47 112,58 135,73 158,90 180,109 202,130 225,152 248,174 270,196 292,217 315,237 338,255 360,270 382,284 405,295 428,302 450,308 472,310 495,309 518,306 540,300M0,196 22,217 45,237 68,255 90,270 112,284 135,295 158,302 180,308 202,310 225,309 248,306 270,300 292,291 315,280 338,267 360,252 382,235 405,217 428,197 450,177 472,156 495,135 518,114 540,94M0,300 22,291 45,280 68,267 90,252 112,235 135,217 158,197 180,177 202,156 225,135 248,114 270,94 292,75 315,57 338,42 360,29 382,19 405,12 428,8 450,8 472,11 495,18 518,28 540,41M0,94 22,75 45,57 68,42 90,29 112,19 135,12 158,8 180,8 202,11 225,18 248,28 270,41 292,56 315,74 338,93 360,113 382,134 405,155 428,175 450,194 472,211 495,226 518,239 540,250M0,41 22,56 45,74 68,93 90,113 112,134 135,155 158,175 180,194 202,211 225,226 248,239 270,250 292,257 315,262 338,263 360,261 382,256 405,248 428,237 450,223 472,207 495,189 518,169 540,148M0,250 22,257 45,262 68,263 90,261 112,256 135,248 158,237 180,223 202,207 225,189 248,169 270,148 292,126 315,105 338,84 360,65 382,48 405,34 428,24 450,18 472,17 495,20 518,29 540,43M0,148 22,126 45,105 68,84 90,65 112,48 135,34 158,24 180,18 202,17 225,20 248,29 270,43 292,61 315,83 338,109 360,136 382,165 405,194 428,221 450,246 472,267 495,284 518,295 540,301M0,43 22,61 45,83 68,109 90,136 112,165 135,194 158,221 180,246 202,267 225,284 248,295 270,301 292,300 315,294 338,283 360,266 382,246 405,223 428,199 450,174 472,149 495,127 518,108 540,93M0,301 22,300 45,294 68,283 90,266 112,246 135,223 158,199 180,174 202,150 225,127 248,108 270,93 292,82 315,75 338,73 360,76 382,83 405,94 428,107 450,123 472,141 495,159 518,177 540,195M0,93 22,82 45,75 68,73 90,76 112,83 135,94 158,107 180,123 202,141 225,159 248,177 270,195 292,212 315,227 338,241 360,253 382,263 405,272 428,280 450,286 472,291 495,296 518,299 540,302M0,195 22,212 45,227 68,241 90,253 112,263 135,272 158,280 180,286 202,291 225,296 248,299 270,302 292,304 315,305 338,305 360,305 382,303 405,299 428,295 450,288 472,280 495,270 518,259 540,246M0,302 22,304 45,305 68,305 90,305 112,303 135,299 158,295 180,288 202,280 225,270 248,259 270,246 292,232 315,217 338,202 360,186 382,170 405,155 428,141 450,128 472,116 495,106 518,98 540,92M0,246 22,232 45,217 68,202 90,186 112,170 135,155 158,141 180,128 202,116 225,106 248,98 270,92 292,88 315,86 338,85 360,85 382,86 405,88 428,90 450,92 472,94 495,94 518,94 540,93M0,92 22,88 45,86 68,85 90,85 112,86 135,88 158,90 180,92 202,94 225,94 248,94 270,93 292,91 315,87 338,83 360,78 382,72 405,66 428,60 450,54 472,49 495,46 518,43 540,42M0,93 22,91 45,87 68,83 90,78 112,72 135,66 158,60 180,54 202,49 225,46 248,43 270,42 292,43 315,45 338,50 360,56 382,63 405,72 428,82 450,94 472,106 495,118 518,131 540,143M0,42 22,43 45,45 68,50 90,56 112,63 135,72 158,82 180,94 202,106 225,118 248,131 270,143 292,155 315,167 338,179 360,190 382,200 405,209 428,218 450,226 472,233 495,239 518,244 540,249M0,143 22,155 45,167 68,179 90,190 112,200 135,209 158,218 180,226 202,233 225,239 248,244 270,249 292,252 315,255 338,257 360,258 382,258 405,258 428,257 450,255 472,254 495,252 518,251 540,249M0,249 22,252 45,255 68,257 90,258 112,258 135,258 158,257 180,255 202,254 225,252 248,251 270,249 292,248 315,248 338,247 360,247 382,248 405,249 428,249 450,250 472,250 495,250 518,250 540,249M0,249 22,248 45,248 68,247 90,247 112,248 135,249 158,249 180,250 202,250 225,250 248,250 270,249 292,247 315,245 338,242 360,239 382,237 405,235 428,233 450,233 472,235 495,238 518,243 540,250M0,249 22,247 45,245 68,242 90,239 112,237 135,235 158,233 180,233 202,235 225,238 248,243 270,250 292,259 315,269 338,279 360,290 382,301 405,310 428,317 450,321 472,322 495,319 518,312 540,300M0,250 22,259 45,269 68,279 90,290 112,301 135,310 158,317 180,321 202,322 225,319 248,311 270,300 292,284 315,265 338,243 360,219 382,194 405,170 428,147 450,127 472,111 495,100 518,94 540,94M0,300 22,284 45,265 68,243 90,219 112,194 135,170 158,147 180,127 202,111 225,100 248,94 270,94 292,100 315,111 338,127 360,147 382,170 405,195 428,219 450,242 472,263 495,280 518,293 540,300M0,94 22,100 45,111 68,127 90,147 112,170 135,195 158,219 180,242 202,263 225,280 248,293 270,300 292,302 315,298 338,288 360,274 382,255 405,234 428,210 450,185 472,160 495,136 518,113 540,94M0,300 22,302 45,298 68,288 90,274 112,255 135,234 158,210 180,185 202,160 225,136 248,113 270,94 292,77 315,64 338,54 360,48 382,45 405,45 428,49 450,55 472,63 495,72 518,83 540,95M0,94 22,77 45,64 68,54 90,48 112,45 135,45 158,49 180,55 202,63 225,72 248,83 270,95 292,107 315,120 338,132 360,144 382,155 405,165 428,174 450,181 472,187 495,192 518,195 540,196M0,95 22,107 45,120 68,132 90,144 112,155 135,165 158,174 180,181 202,187 225,192 248,195 270,196 292,195 315,193 338,190 360,185 382,179 405,173 428,167 450,161 472,156 495,152 518,149 540,147M0,196 22,195 45,193 68,190 90,185 112,179 135,173 158,167 180,161 202,156 225,152 248,149 270,147 292,146 315,147 338,150 360,153 382,158 405,163 428,169 450,176 472,182 495,187 518,192 540,196M0,147 22,146 45,147 68,150 90,153 112,158 135,163 158,169 180,176 202,182 225,187 248,192 270,196 292,199 315,201 338,201 360,200 382,198 405,194 428,189 450,183 472,175 495,166 518,157 540,147M0,196 22,199 45,201 68,201 90,200 112,198 135,194 158,189 180,183 202,175 225,166 248,157 270,147 292,137 315,127 338,117 360,107 382,99 405,92 428,87 450,84 472,83 495,84 518,88 540,94M0,147 22,137 45,127 68,117 90,107 112,99 135,92 158,87 180,84 202,83 225,84 248,88 270,94 292,102 315,112 338,123 360,135 382,148 405,160 428,172 450,182 472,190 495,195 518,198 540,198M0,94 22,102 45,112 68,123 90,135 112,148 135,160 158,172 180,182 202,190 225,195 248,198 270,198 292,195 315,189 338,180 360,168 382,155 405,139 428,123 450,106 472,89 495,72 518,57 540,42M0,198 22,195 45,189 68,180 90,168 112,155 135,139 158,123 180,106 202,89 225,72 248,57 270,42 292,30 315,20 338,12 360,8 382,6 405,8 428,14 450,23 472,36 495,53 518,72 540,95M0,42 22,30 45,20 68,12 90,8 112,6 135,8 158,14 180,23 202,36 225,53 248,72 270,95 292,119 315,146 338,173 360,200 382,226 405,250 428,271 450,288 472,301 495,307 518,308 540,303M0,95 22,119 45,146 68,173 90,200 112,226 135,251 158,272 180,289 202,301 225,307 248,308 270,303 292,291 315,275 338,253 360,228 382,200 405,170 428,141 450,114 472,89 495,69 518,53 540,44M0,303 22,291 45,275 68,253 90,228 112,200 135,170 158,141 180,114 202,89 225,69 248,53 270,44 292,40 315,43 338,51 360,66 382,84 405,106 428,131 450,157 472,183 495,207 518,229 540,249M0,44 22,40 45,43 68,51 90,66 112,84 135,106 158,131 180,157 202,183 225,207 248,229 270,249 292,265 315,277 338,285 360,289 382,290 405,287 428,283 450,277 472,270 495,262 518,255 540,248M0,249 22,265 45,277 68,285 90,289 112,290 135,287 158,283 180,277 202,270 225,262 248,255 270,248 292,242 315,237 338,234 360,231 382,228 405,226 428,224 450,221 472,217 495,212 518,206 540,199M0,248 22,242 45,237 68,234 90,231 112,228 135,226 158,224 180,221 202,217 225,212 248,206 270,199 292,190 315,180 338,169 360,157 382,145 405,134 428,123 450,113 472,106 495,100 518,97 540,96M0,199 22,190 45,180 68,169 90,157 112,145 135,133 158,123 180,113 202,106 225,100 248,97 270,96 292,98 315,101 338,107 360,114 382,121 405,129 428,136 450,143 472,147 495,149 518,149 540,146M0,96 22,98 45,101 68,107 90,114 112,121 135,129 158,136 180,143 202,147 225,149 248,149 270,146 292,141 315,134 338,125 360,115 382,104 405,95 428,86 450,80 472,78 495,79 518,84 540,94M0,146 22,141 45,134 68,125 90,115 112,104 135,95 158,86 180,80 202,78 225,79 248,84 270,94 292,108 315,126 338,148 360,171 382,196 405,221 428,244 450,265 472,282 495,294 518,300 540,301M0,94 22,108 45,126 68,148 90,171 112,196 135,221 158,244 180,265 202,282 225,294 248,300 270,301 292,296 315,285 338,268 360,248 382,225 405,200 428,175 450,151 472,130 495,113 518,101 540,95M0,301 22,296 45,285 68,268 90,248 112,225 135,200 158,175 180,151 202,130 225,113 248,101 270,95 292,95 315,100 338,112 360,128 382,148 405,172 428,196 450,221 472,245 495,267 518,285 540,300M0,95 22,95 45,100 68,112 90,128 112,148 135,172 158,196 180,221 202,245 225,267 248,285 270,300 292,310 315,315 338,317 360,314 382,309 405,300 428,291 450,280 472,270 495,261 518,253 540,248M0,300 22,310 45,315 68,317 90,314 112,309 135,300 158,291 180,280 202,270 225,261 248,253 270,248 292,245 315,244 338,245 360,247 382,251 405,255 428,259 450,261 472,261 495,260 518,255 540,248M0,248 22,245 45,244 68,245 90,247 112,251 135,255 158,258 180,261 202,261 225,260 248,255 270,248 292,238 315,225 338,210 360,194 382,176 405,159 428,142 450,127 472,114 495,105 518,98 540,95M0,248 22,238 45,225 68,210 90,194 112,176 135,159 158,142 180,127 202,114 225,105 248,98 270,95 292,96 315,100 338,107 360,116 382,128 405,140 428,153 450,166 472,177 495,186 518,193 540,197M0,95 22,96 45,100 68,107 90,116 112,128 135,140 158,153 180,166 202,177 225,186 248,193 270,197 292,198 315,196 338,191 360,184 382,174 405,163 428,151 450,138 472,125 495,114 518,103 540,94M0,197 22,198 45,196 68,191 90,184 112,174 135,163 158,151 180,138 202,125 225,114 248,103 270,94 292,87 315,82 338,79 360,78 382,78 405,80 428,82 450,85 472,88 495,91 518,94 540,95M0,94 22,87 45,82 68,79 90,78 112,78 135,80 158,82 180,85 202,88 225,91 248,94 270,95 292,96 315,96 338,95 360,94 382,92 405,90 428,88 450,87 472,87 495,87 518,90 540,93M0,95 22,96 45,96 68,95 90,94 112,92 135,90 158,88 180,87 202,87 225,87 248,90 270,93 292,98 315,104 338,111 360,119 382,126 405,134 428,140 450,145 472,149 495,150 518,149 540,145M0,93 22,98 45,104 68,111 90,119 112,126 135,134 158,140 180,145 202,149 225,150 248,149 270,145 292,140 315,132 338,123 360,114 382,104 405,94 428,87 450,81 472,79 495,80 518,85 540,94M0,145 22,140 45,132 68,123 90,114 112,104 135,95 158,87 180,81 202,79 225,80 248,85 270,94 292,108 315,125 338,145 360,167 382,190 405,214 428,237 450,257 472,274 495,288 518,296 540,299M0,94 22,108 45,125 68,145 90,167 112,190 135,214 158,237 180,257 202,274 225,288 248,296 270,299 292,297 315,289 338,277 360,262 382,243 405,224 428,204 450,185 472,169 495,156 518,148 540,145M0,299 22,297 45,289 68,277 90,262 112,243 135,224 158,204 180,185 202,169 225,156 248,148 270,145 292,147 315,154 338,165 360,180 382,198 405,218 428,238 450,256 472,273 495,286 518,295 540,300M0,145 22,147 45,153 68,165 90,180 112,198 135,218 158,238 180,256 202,273 225,286 248,295 270,300 292,299 315,293 338,283 360,270 382,253 405,234 428,215 450,196 472,179 495,164 518,153 540,144M0,300 22,299 45,293 68,283 90,269 112,253 135,234 158,215 180,196 202,179 225,164 248,153 270,144 292,140 315,139 338,142 360,147 382,155 405,163 428,172 450,181 472,188 495,194 518,196 540,196M0,144 22,140 45,139 68,142 90,147 112,155 135,163 158,172 180,181 202,188 225,194 248,196 270,196 292,193 315,187 338,178 360,167 382,153 405,138 428,122 450,105 472,89 495,72 518,57 540,44M0,196 22,193 45,187 68,178 90,167 112,153 135,138 158,122 180,105 202,89 225,72 248,57 270,44 292,32 315,22 338,15 360,11 382,10 405,12 428,17 450,26 472,38 495,54 518,73 540,94M0,44 22,32 45,22 68,15 90,11 112,10 135,12 158,17 180,26 202,38 225,54 248,73 270,94 292,118 315,144 338,171 360,198 382,224 405,248 428,268 450,285 472,297 495,304 518,305 540,299M0,94 22,118 45,144 68,171 90,198 112,224 135,248 158,268 180,285 202,297 225,304 248,305 270,299 292,288 315,271 338,250 360,224 382,196 405,167 428,138 450,111 472,87 495,67 518,52 540,43M0,299 22,288 45,271 68,250 90,224 112,196 135,167 158,138 180,111 202,87 225,67 248,52 270,43 292,41 315,45 338,54 360,70 382,89 405,112 428,137 450,163 472,188 495,211 518,232 540,249M0,43 22,41 45,45 68,54 90,70 112,89 135,112 158,137 180,163 202,188 225,211 248,232 270,249 292,261 315,270 338,273 360,273 382,268 405,261 428,251 450,240 472,228 495,217 518,206 540,197M0,249 22,261 45,270 68,273 90,273 112,268 135,261 158,251 180,240 202,228 225,217 248,206 270,197 292,189 315,183 338,179 360,176 382,174 405,173 428,171 450,169 472,166 495,160 518,153 540,144M0,197 22,189 45,183 68,179 90,176 112,174 135,173 158,172 180,169 202,166 225,161 248,153 270,144 292,133 315,120 338,106 360,91 382,77 405,63 428,51 450,42 472,36 495,34 518,35 540,41M0,144 22,133 45,120 68,106 90,91 112,77 135,63 158,51 180,42 202,36 225,34 248,35 270,41 292,51 315,64 338,80 360,98 382,117 405,136 428,154 450,170 472,183 495,192 518,196 540,196M0,41 22,51 45,64 68,80 90,98 112,117 135,136 158,154 180,170 202,183 225,192 248,196 270,196 292,191 315,182 338,169 360,153 382,135 405,116 428,97 450,80 472,65 495,53 518,45 540,43M0,196 22,191 45,182 68,169 90,153 112,135 135,116 158,97 180,80 202,65 225,53 248,45 270,43 292,45 315,52 338,63 360,79 382,98 405,119 428,142 450,166 472,189 495,211 518,231 540,248M0,43 22,45 45,52 68,63 90,79 112,98 135,119 158,142 180,166 202,189 225,211 248,231 270,248 292,261 315,271 338,278 360,280 382,279 405,274 428,266 450,256 472,243 495,229 518,213 540,197M0,248 22,261 45,271 68,278 90,280 112,279 135,274 158,266 180,256 202,243 225,229 248,213 270,197 292,180 315,163 338,146 360,129 382,114 405,99 428,86 450,74 472,64 495,55 518,48 540,43M0,197 22,180 45,163 68,146 90,129 112,114 135,99 158,86 180,74 202,64 225,55 248,48 270,43 292,39 315,38 338,38 360,40 382,43 405,48 428,54 450,61 472,69 495,77 518,85 540,93M0,43 22,39 45,38 68,38 90,40 112,43 135,48 158,54 180,61 202,69 225,77 248,85 270,93 292,100 315,107 338,114 360,120 382,125 405,130 428,133 450,137 472,139 495,141 518,143 540,145M0,93 22,100 45,107 68,114 90,120 112,125 135,130 158,133 180,137 202,139 225,141 248,143 270,145 292,147 315,149 338,151 360,153 382,156 405,160 428,164 450,169 472,175 495,182 518,189 540,198M0,145 22,147 45,149 68,151 90,153 112,156 135,160 158,164 180,169 202,175 225,182 248,189 270,198 292,207 315,217 338,227 360,238 382,248 405,258 428,268 450,276 472,284 495,290 518,296 540,299M0,198 22,207 45,217 68,227 90,238 112,248 135,258 158,268 180,276 202,284 225,290 248,296 270,299 292,301 315,302 338,300 360,298 382,294 405,289 428,284 450,277 472,270 495,263 518,256 540,249M0,299 22,301 45,302 68,300 90,298 112,294 135,289 158,284 180,277 202,270 225,263 248,256 270,249 292,242 315,236 338,229 360,224 382,219 405,214 428,210 450,206 472,203 495,201 518,199 540,197M0,249 22,242 45,236 68,229 90,224 112,219 135,214 158,210 180,206 202,203 225,201 248,199 270,197 292,195 315,193 338,191 360,189 382,187 405,184 428,180 450,175 472,170 495,163 518,156 540,147M0,197 22,195 45,193 68,191 90,189 112,187 135,184 158,180 180,175 202,170 225,163 248,156 270,147 292,138 315,129 338,119 360,110 382,101 405,94 428,88 450,84 472,82 495,83 518,87 540,94M0,147 22,138 45,129 68,119 90,110 112,101 135,94 158,88 180,84 202,82 225,83 248,87 270,94 292,104 315,116 338,130 360,147 382,166 405,186 428,206 450,227 472,247 495,267 518,285 540,301M0,94 22,104 45,116 68,131 90,147 112,166 135,186 158,206 180,227 202,247 225,267 248,285 270,301 292,316 315,328 338,338 360,345 382,348 405,348 428,348 450,344 472,337 495,328 518,315 540,301M0,301 22,316 45,328 68,338 90,345 112,348 135,348 158,348 180,344 202,337 225,327 248,315 270,301 292,286 315,269 338,251 360,233 382,215 405,198 428,183 450,170 472,159 495,152 518,148 540,148M0,301 22,286 45,269 68,251 90,233 112,215 135,198 158,183 180,170 202,159 225,152 248,148 270,148 292,150 315,157 338,165 360,176 382,189 405,202 428,215 450,227 472,236 495,243 518,247 540,247M0,148 22,150 45,157 68,165 90,176 112,189 135,202 158,215 180,227 202,236 225,243 248,247 270,247 292,243 315,235 338,224 360,210 382,194 405,176 428,158 450,141 472,125 495,112 518,101 540,94M0,247 22,243 45,235 68,224 90,210 112,194 135,176 158,158 180,141 202,125 225,112 248,101 270,94 292,91 315,90 338,93 360,99 382,107 405,115 428,124 450,132 472,139 495,144 518,146 540,145M0,94 22,91 45,90 68,93 90,99 112,107 135,115 158,124 180,132 202,139 225,144 248,146 270,145 292,142 315,135 338,126 360,115 382,102 405,89 428,76 450,65 472,55 495,47 518,43 540,41M0,145 22,142 45,135 68,126 90,115 112,102 135,89 158,76 180,65 202,55 225,47 248,43 270,41 292,43 315,48 338,57 360,68 382,82 405,97 428,114 450,131 472,149 495,166 518,182 540,197M0,41 22,43 45,48 68,57 90,68 112,82 135,97 158,114 180,131 202,149 225,166 248,182 270,197 292,210 315,221 338,230 360,236 382,240 405,241 428,239 450,235 472,228 495,220 518,209 540,197M0,197 22,210 45,221 68,230 90,236 112,240 135,241 158,239 180,235 202,228 225,220 248,209 270,197 292,183 315,169 338,154 360,140 382,127 405,115 428,105 450,97 472,92 495,90 518,91 540,95M0,197 22,183 45,169 68,154 90,140 112,127 135,115 158,105 180,97 202,92 225,90 248,91 270,95 292,103 315,114 338,128 360,145 382,163 405,183 428,204 450,225 472,245 495,265 518,284 540,300M0,95 22,103 45,114 68,128 90,145 112,163 135,183 158,204 180,225 202,246 225,265 248,284 270,300 292,314 315,325 338,333 360,338 382,339 405,337 428,331 450,321 472,307 495,291 518,271 540,249M0,300 22,314 45,325 68,334 90,338 112,339 135,337 158,331 180,321 202,307 225,291 248,271 270,249 292,225 315,200 338,174 360,148 382,123 405,100 428,80 450,63 472,50 495,42 518,40 540,42M0,249 22,225 45,200 68,174 90,148 112,123 135,100 158,80 180,63 202,50 225,42 248,40 270,42 292,49 315,61 338,78 360,98 382,120 405,143 428,167 450,190 472,210 495,227 518,240 540,249M0,42 22,49 45,61 68,78 90,98 112,120 135,143 158,167 180,190 202,210 225,227 248,240 270,249 292,252 315,250 338,244 360,233 382,218 405,201 428,182 450,162 472,142 495,124 518,108 540,95M0,249 22,252 45,250 68,244 90,233 112,218 135,201 158,182 180,162 202,142 225,124 248,108 270,95 292,86 315,79 338,76 360,76 382,78 405,81 428,86 450,91 472,94 495,97 518,98 540,96M0,95 22,86 45,79 68,76 90,76 112,78 135,81 158,86 180,91 202,94 225,97 248,98 270,96 292,92 315,86 338,78 360,69 382,59 405,49 428,41 450,35 472,31 495,31 518,35 540,43M0,96 22,92 45,86 68,78 90,69 112,59 135,49 158,41 180,35 202,31 225,31 248,35 270,43 292,56 315,71 338,91 360,112 382,135 405,158 428,181 450,201 472,219 495,233 518,243 540,248M0,43 22,56 45,71 68,91 90,112 112,135 135,158 158,181 180,201 202,219 225,233 248,243 270,248 292,248 315,244 338,236 360,224 382,211 405,196 428,181 450,167 472,156 495,148 518,145 540,145M0,248 22,248 45,244 68,236 90,224 112,211 135,196 158,181 180,168 202,156 225,148 248,145 270,145 292,150 315,160 338,173 360,190 382,208 405,228 428,247 450,265 472,280 495,291 518,298 540,300M0,145 22,150 45,160 68,173 90,190 112,208 135,228 158,247 180,265 202,280 225,291 248,298 270,300 292,297 315,290 338,278 360,262 382,244 405,225 428,206 450,188 472,172 495,160 518,151 540,148M0,300 22,297 45,290 68,278 90,262 112,244 135,225 158,206 180,188 202,172 225,160 248,151 270,148 292,149 315,154 338,164 360,178 382,194 405,213 428,231 450,250 472,267 495,282 518,295 540,303M0,148 22,149 45,154 68,164 90,178 112,194 135,213 158,231 180,250 202,267 225,282 248,295 270,303 292,308 315,309 338,306 360,300 382,291 405,279 428,266 450,252 472,237 495,223 518,210 540,198M0,303 22,308 45,309 68,306 90,300 112,291 135,279 158,266 180,252 202,237 225,223 248,210 270,198 292,187 315,179 338,173 360,168 382,166 405,166 428,168 450,171 472,176 495,182 518,190 540,198M0,198 22,187 45,179 68,173 90,168 112,166 135,166 158,168 180,171 202,176 225,182 248,190 270,198 292,206 315,215 338,223 360,231 382,239 405,245 428,250 450,254 472,256 495,255 518,253 540,249M0,198 22,206 45,215 68,223 90,231 112,239 135,245 158,250 180,254 202,256 225,256 248,253 270,249 292,244 315,236 338,227 360,217 382,206 405,195 428,184 450,173 472,164 495,156 518,150 540,145M0,249 22,244 45,236 68,227 90,217 112,206 135,195 158,184 180,173 202,164 225,156 248,150 270,145 292,143 315,143 338,146 360,150 382,157 405,166 428,177 450,190 472,203 495,218 518,233 540,249M0,145 22,143 45,143 68,146 90,150 112,157 135,166 158,177 180,190 202,203 225,218 248,233 270,249 292,264 315,279 338,293 360,305 382,315 405,323 428,328 450,330 472,328 495,323 518,314 540,302M0,249 22,264 45,279 68,293 90,305 112,315 135,323 158,328 180,330 202,328 225,323 248,314 270,302 292,286 315,267 338,247 360,225 382,202 405,179 428,158 450,138 472,121 495,108 518,99 540,95M0,302 22,286 45,268 68,247 90,225 112,202 135,179 158,158 180,138 202,121 225,108 248,99 270,95 292,95 315,100 338,108 360,121 382,136 405,153 428,172 450,190 472,208 495,224 518,238 540,249M0,95 22,95 45,100 68,108 90,121 112,136 135,153 158,172 180,190 202,208 225,224 248,238 270,249 292,256 315,260 338,261 360,258 382,253 405,246 428,238 450,229 472,219 495,211 518,203 540,197M0,249 22,256 45,260 68,261 90,258 112,253 135,246 158,238 180,229 202,219 225,211 248,203 270,197 292,193 315,190 338,189 360,190 382,192 405,194 428,197 450,199 472,201 495,201 518,200 540,197M0,197 22,193 45,190 68,189 90,190 112,192 135,194 158,197 180,199 202,201 225,201 248,200 270,197 292,193 315,186 338,179 360,169 382,159 405,148 428,137 450,126 472,116 495,106 518,98 540,92M0,197 22,193 45,186 68,179 90,169 112,159 135,148 158,137 180,126 202,116 225,106 248,98 270,92 292,87 315,83 338,81 360,80 382,81 405,82 428,84 450,86 472,89 495,91 518,93 540,94M0,92 22,87 45,83 68,81 90,80 112,81 135,82 158,84 180,86 202,89 225,91 248,93 270,94 292,95 315,96 338,97 360,98 382,100 405,102 428,106 450,110 472,116 495,124 518,134 540,145M0,94 22,95 45,96 68,97 90,98 112,100 135,102 158,106 180,110 202,116 225,124 248,134 270,145 292,159 315,173 338,189 360,205 382,221 405,237 428,253 450,267 472,279 495,289 518,297 540,301M0,145 22,159 45,173 68,189 90,205 112,221 135,237 158,253 180,267 202,279 225,289 248,297 270,301 292,304 315,303 338,300 360,294 382,286 405,276 428,264 450,252 472,238 495,225 518,211 540,198M0,301 22,304 45,303 68,299 90,294 112,286 135,276 158,264 180,252 202,238 225,225 248,211 270,198 292,185 315,172 338,161 360,150 382,140 405,131 428,123 450,116 472,110 495,104 518,98 540,93M0,198 22,185 45,172 68,161 90,150 112,140 135,131 158,123 180,116 202,110 225,104 248,98 270,93 292,89 315,85 338,81 360,77 382,73 405,70 428,66 450,61 472,57 495,52 518,47 540,42M0,93 22,89 45,85 68,81 90,77 112,73 135,70 158,66 180,61 202,57 225,52 248,47 270,42 292,36 315,31 338,26 360,22 382,18 405,16 428,15 450,16 472,19 495,25 518,32 540,43M0,42 22,36 45,31 68,26 90,22 112,18 135,16 158,15 180,16 202,19 225,25 248,32 270,43 292,55 315,70 338,86 360,105 382,124 405,144 428,164 450,183 472,202 495,219 518,235 540,248M0,43 22,55 45,70 68,86 90,105 112,124 135,144 158,164 180,183 202,202 225,219 248,235 270,248 292,260 315,268 338,275 360,278 382,280 405,280 428,277 450,274 472,269 495,263 518,256 540,249M0,248 22,260 45,268 68,275 90,278 112,280 135,280 158,277 180,274 202,269 225,263 248,256 270,249 292,241 315,234 338,227 360,221 382,215 405,210 428,205 450,202 472,199 495,198 518,198 540,199M0,249 22,241 45,234 68,227 90,221 112,215 135,210 158,205 180,202 202,199 225,198 248,198 270,199 292,201 315,205 338,209 360,214 382,219 405,225 428,231 450,236 472,242 495,246 518,250 540,252M0,199 22,201 45,205 68,209 90,214 112,219 135,225 158,231 180,236 202,242 225,246 248,250 270,252 292,254 315,254 338,254 360,252 382,250 405,248 428,246 450,245 472,244 495,244 518,245 540,246M0,252 22,254 45,254 68,254 90,252 112,250 135,248 158,246 180,245 202,244 225,244 248,245 270,246 292,249 315,253 338,257 360,261 382,265 405,269 428,271 450,271 472,269 495,265 518,258 540,248M0,246 22,249 45,253 68,257 90,261 112,265 135,269 158,271 180,271 202,269 225,265 248,258 270,248 292,236 315,221 338,204 360,185 382,165 405,144 428,124 450,104 472,86 495,69 518,54 540,42M0,248 22,236 45,221 68,204 90,185 112,165 135,144 158,124 180,104 202,86 225,69 248,54 270,42 292,33 315,27 338,24 360,24 382,26 405,31 428,38 450,47 472,58 495,70 518,82 540,96M0,42 22,33 45,27 68,24 90,24 112,26 135,31 158,38 180,47 202,58 225,70 248,82 270,96 292,109 315,123 338,136 360,149 382,160 405,171 428,180 450,187 472,193 495,197 518,199 540,199M0,96 22,109 45,123 68,136 90,149 112,160 135,171 158,180 180,187 202,193 225,197 248,199 270,199 292,197 315,193 338,188 360,182 382,176 405,169 428,162 450,156 472,151 495,147 518,145 540,144M0,199 22,197 45,193 68,188 90,182 112,176 135,169 158,162 180,156 202,151 225,147 248,145 270,144 292,145 315,148 338,153 360,158 382,165 405,172 428,179 450,186 472,191 495,196 518,199 540,200M0,144 22,145 45,148 68,153 90,159 112,165 135,172 158,179 180,186 202,191 225,196 248,199 270,200 292,200 315,197 338,193 360,188 382,182 405,175 428,168 450,162 472,156 495,151 518,148 540,146M0,200 22,200 45,197 68,193 90,188 112,182 135,175 158,168 180,162 202,156 225,151 248,148 270,146 292,146 315,148 338,152 360,158 382,166 405,175 428,186 450,197 472,210 495,222 518,235 540,248M0,146 22,146 45,148 68,152 90,158 112,166 135,175 158,186 180,197 202,209 225,222 248,235 270,248 292,260 315,272 338,283 360,292 382,300 405,306 428,311 450,313 472,313 495,311 518,307 540,300M0,248 22,260 45,272 68,283 90,292 112,300 135,306 158,311 180,313 202,313 225,311 248,307 270,300 292,292 315,281 338,269 360,255 382,241 405,226 428,210 450,195 472,181 495,167 518,155 540,145M0,300 22,292 45,281 68,269 90,255 112,241 135,226 158,210 180,195 202,181 225,167 248,155 270,145 292,136 315,129 338,124 360,121 382,120 405,120 428,122 450,125 472,129 495,134 518,140 540,146M0,145 22,136 45,129 68,124 90,121 112,120 135,120 158,122 180,125 202,129 225,134 248,140 270,146 292,152 315,158 338,164 360,170 382,175 405,180 428,185 450,188 472,191 495,193 518,194 540,195M0,146 22,152 45,158 68,164 90,170 112,175 135,180 158,185 180,188 202,191 225,193 248,194 270,195 292,194 315,193 338,192 360,190 382,188 405,186 428,185 450,185 472,186 495,189 518,193 540,198M0,195 22,194 45,193 68,191 90,190 112,188 135,186 158,185 180,185 202,186 225,189 248,193 270,198 292,205 315,214 338,223 360,232 382,241 405,250 428,257 450,261 472,264 495,263 518,258 540,250M0,198 22,205 45,214 68,223 90,232 112,241 135,250 158,257 180,261 202,264 225,263 248,258 270,250 292,239 315,225 338,208 360,189 382,170 405,151 428,133 450,117 472,105 495,97 518,93 540,94M0,250 22,239 45,225 68,208 90,189 112,170 135,151 158,133 180,117 202,105 225,97 248,93 270,94 292,100 315,111 338,126 360,145 382,166 405,189 428,212 450,235 472,256 495,274 518,289 540,299M0,94 22,100 45,111 68,126 90,145 112,166 135,189 158,212 180,235 202,256 225,274 248,289 270,299 292,305 315,306 338,303 360,296 382,286 405,274 428,260 450,245 472,231 495,218 518,207 540,197M0,299 22,305 45,306 68,303 90,296 112,286 135,274 158,260 180,245 202,231 225,218 248,207 270,197 292,190 315,186 338,184 360,184 382,185 405,188 428,191 450,194 472,197 495,198 518,198 540,196M0,197 22,190 45,186 68,184 90,184 112,185 135,188 158,191 180,194 202,197 225,198 248,198 270,196 292,192 315,187 338,179 360,171 382,161 405,150 428,139 450,128 472,118 495,109 518,101 540,95M0,196 22,192 45,187 68,179 90,171 112,161 135,150 158,139 180,128 202,118 225,109 248,101 270,95 292,90 315,87 338,86 360,86 382,89 405,93 428,99 450,106 472,115 495,124 518,135 540,147M0,95 22,90 45,87 68,85 90,86 112,89 135,93 158,99 180,106 202,114 225,124 248,135 270,147 292,159 315,172 338,184 360,197 382,208 405,219 428,229 450,237 472,243 495,247 518,248 540,247M0,147 22,159 45,172 68,184 90,197 112,208 135,219 158,229 180,237 202,243 225,247 248,248 270,247 292,244 315,239 338,231 360,222 382,211 405,200 428,188 450,177 472,167 495,157 518,150 540,144M0,247 22,244 45,239 68,231 90,222 112,211 135,200 158,188 180,177 202,167 225,157 248,150 270,144 292,140 315,138 338,138 360,140 382,142 405,145 428,148 450,150 472,151 495,151 518,149 540,144M0,144 22,140 45,138 68,138 90,140 112,142 135,145 158,148 180,150 202,151 225,151 248,149 270,144 292,137 315,128 338,118 360,106 382,94 405,81 428,69 450,59 472,50 495,45 518,42 540,43M0,144 22,137 45,128 68,118 90,106 112,94 135,81 158,69 180,59 202,50 225,45 248,42 270,43 292,47 315,54 338,63 360,75 382,88 405,102 428,115 450,127 472,136 495,143 518,147 540,147M0,43 22,47 45,54 68,63 90,75 112,88 135,102 158,115 180,127 202,136 225,143 248,147 270,147 292,143 315,136 338,126 360,114 382,101 405,87 428,73 450,61 472,52 495,45 518,42 540,44M0,147 22,143 45,136 68,126 90,114 112,101 135,87 158,73 180,61 202,52 225,45 248,42 270,44 292,49 315,58 338,71 360,86 382,103 405,122 428,140 450,157 472,172 495,184 518,193 540,197M0,44 22,49 45,58 68,71 90,86 112,103 135,122 158,140 180,157 202,172 225,184 248,193 270,197 292,198 315,194 338,186 360,175 382,161 405,144 428,126 450,108 472,89 495,72 518,56 540,42M0,197 22,198 45,194 68,186 90,175 112,161 135,144 158,126 180,108 202,89 225,72 248,56 270,42 292,30 315,21 338,14 360,11 382,9 405,10 428,12 450,16 472,21 495,28 518,35 540,42M0,42 22,30 45,21 68,14 90,11 112,9 135,10 158,12 180,16 202,21 225,28 248,35 270,42 292,49 315,57 338,64 360,70 382,77 405,82 428,87 450,91 472,93 495,95 518,96 540,95M0,42 22,49 45,57 68,64 90,70 112,77 135,82 158,87 180,91 202,94 225,95 248,96 270,95 292,94 315,92 338,89 360,86 382,83 405,80 428,79 450,78 472,79 495,82 518,87 540,94M0,95 22,94 45,92 68,89 90,86 112,83 135,80 158,79 180,78 202,79 225,82 248,87 270,94 292,103 315,113 338,126 360,139 382,152 405,165 428,176 450,186 472,194 495,198 518,200 540,197M0,94 22,103 45,113 68,126 90,139 112,152 135,165 158,176 180,186 202,194 225,198 248,200 270,197 292,191 315,182 338,169 360,155 382,138 405,121 428,103 450,86 472,71 495,58 518,49 540,42M0,197 22,191 45,182 68,169 90,155 112,138 135,121 158,103 180,86 202,71 225,58 248,49 270,42 292,40 315,40 338,45 360,52 382,62 405,74 428,87 450,100 472,113 495,126 518,137 540,146M0,42 22,40 45,40 68,45 90,52 112,62 135,74 158,87 180,100 202,114 225,126 248,137 270,146 292,152 315,157 338,160 360,160 382,159 405,157 428,154 450,151 472,148 495,146 518,145 540,146M0,146 22,152 45,157 68,160 90,160 112,159 135,157 158,154 180,151 202,148 225,146 248,145 270,146 292,148 315,151 338,156 360,161 382,168 405,174 428,181 450,187 472,191 495,195 518,197 540,197M0,146 22,148 45,151 68,156 90,161 112,168 135,174 158,181 180,187 202,191 225,195 248,197 270,197 292,195 315,192 338,187 360,181 382,174 405,167 428,161 450,155 472,150 495,147 518,145 540,145M0,197 22,195 45,192 68,187 90,181 112,174 135,168 158,161 180,155 202,150 225,147 248,145 270,145 292,147 315,151 338,156 360,162 382,169 405,176 428,182 450,188 472,193 495,196 518,197 540,197M0,145 22,147 45,151 68,156 90,162 112,169 135,176 158,182 180,188 202,193 225,196 248,197 270,197 292,195 315,191 338,185 360,179 382,172 405,164 428,158 450,152 472,147 495,145 518,144 540,146M0,197 22,195 45,191 68,185 90,179 112,172 135,164 158,158 180,152 202,147 225,145 248,144 270,146 292,151 315,158 338,167 360,179 382,192 405,206 428,222 450,238 472,255 495,271 518,286 540,300M0,146 22,151 45,158 68,167 90,179 112,192 135,207 158,222 180,239 202,255 225,271 248,286 270,300 292,312 315,323 338,332 360,338 382,342 405,343 428,342 450,338 472,332 495,324 518,313 540,301M0,300 22,312 45,323 68,332 90,338 112,342 135,343 158,342 180,338 202,332 225,324 248,313 270,301 292,286 315,270 338,253 360,235 382,216 405,197 428,178 450,160 472,142 495,125 518,110 540,96M0,301 22,286 45,270 68,253 90,235 112,216 135,197 158,178 180,160 202,142 225,125 248,110 270,96 292,84 315,74 338,67 360,61 382,58 405,57 428,58 450,61 472,67 495,74 518,83 540,94M0,96 22,84 45,74 68,67 90,61 112,58 135,57 158,58 180,61 202,67 225,74 248,83 270,94 292,105 315,118 338,132 360,147 382,161 405,176 428,191 450,204 472,217 495,229 518,240 540,249M0,94 22,105 45,118 68,132 90,147 112,161 135,176 158,191 180,204 202,217 225,229 248,240 270,249 292,257 315,264 338,269 360,273 382,277 405,280 428,283 450,285 472,288 495,291 518,295 540,299M0,249 22,257 45,264 68,269 90,274 112,277 135,280 158,283 180,285 202,288 225,291 248,295 270,299 292,304 315,309 338,315 360,320 382,324 405,327 428,329 450,328 472,326 495,320 518,312 540,301M0,299 22,304 45,309 68,315 90,320 112,324 135,327 158,329 180,328 202,326 225,320 248,312 270,301 292,287 315,270 338,252 360,232 382,211 405,189 428,169 450,149 472,131 495,116 518,103 540,94M0,301 22,287 45,270 68,252 90,232 112,211 135,189 158,169 180,149 202,131 225,116 248,103 270,94 292,88 315,86 338,87 360,92 382,99 405,109 428,121 450,135 472,150 495,166 518,182 540,197M0,94 22,88 45,86 68,87 90,92 112,99 135,109 158,121 180,135 202,150 225,166 248,182 270,197 292,212 315,225 338,237 360,248 382,256 405,262 428,266 450,268 472,267 495,263 518,257 540,249M0,197 22,212 45,225 68,237 90,248 112,256 135,262 158,266 180,268 202,267 225,263 248,257 270,249 292,238 315,226 338,212 360,197 382,182 405,166 428,150 450,136 472,123 495,111 518,102 540,94M0,249 22,238 45,226 68,212 90,197 112,182 135,166 158,150 180,136 202,123 225,111 248,102 270,94 292,90 315,88 338,88 360,91 382,96 405,102 428,109 450,117 472,125 495,133 518,141 540,147M0,94 22,90 45,88 68,88 90,91 112,96 135,102 158,109 180,117 202,125 225,133 248,141 270,147 292,153 315,158 338,162 360,165 382,167 405,169 428,172 450,175 472,178 495,183 518,188 540,195M0,147 22,153 45,158 68,162 90,165 112,167 135,169 158,172 180,175 202,178 225,183 248,188 270,195 292,204 315,213 338,223 360,235 382,246 405,257 428,268 450,278 472,287 495,294 518,299 540,302M0,195 22,204 45,213 68,223 90,235 112,246 135,257 158,268 180,278 202,287 225,294 248,299 270,302 292,303 315,301 338,297 360,291 382,284 405,274 428,263 450,251 472,238 495,225 518,211 540,198M0,302 22,303 45,301 68,297 90,291 112,284 135,274 158,263 180,251 202,238 225,225 248,211 270,198 292,184 315,171 338,159 360,147 382,136 405,126 428,118 450,110 472,104 495,99 518,95 540,93M0,198 22,184 45,171 68,159 90,147 112,136 135,126 158,118 180,110 202,104 225,99 248,95 270,93 292,93 315,93 338,96 360,99 382,103 405,108 428,114 450,121 472,127 495,133 518,140 540,145M0,93 22,93 45,93 68,96 90,99 112,103 135,108 158,114 180,121 202,127 225,133 248,140 270,145 292,150 315,155 338,159 360,162 382,166 405,169 428,172 450,175 472,179 495,184 518,190 540,197M0,145 22,150 45,155 68,159 90,162 112,166 135,169 158,172 180,175 202,179 225,184 248,190 270,197 292,204 315,212 338,221 360,230 382,238 405,246 428,252 450,256 472,258 495,258 518,254 540,248M0,197 22,204 45,212 68,221 90,230 112,238 135,246 158,252 180,256 202,258 225,258 248,254 270,248 292,239 315,228 338,214 360,200 382,185 405,171 428,159 450,148 472,141 495,138 518,139 540,144M0,248 22,239 45,228 68,215 90,200 112,185 135,171 158,159 180,148 202,141 225,138 248,139 270,144 292,154 315,167 338,184 360,203 382,224 405,244 428,263 450,280 472,292 495,301 518,303 540,300M0,144 22,154 45,167 68,184 90,203 112,224 135,244 158,263 180,280 202,292 225,301 248,303 270,300 292,291 315,276 338,257 360,233 382,205 405,177 428,147 450,119 472,93 495,71 518,53 540,39M0,300 22,291 45,276 68,257 90,233 112,205 135,177 158,147 180,119 202,93 225,71 248,53 270,39 292,32 315,29 338,32 360,39 382,50 405,64 428,79 450,95 472,111 495,125 518,137 540,147M0,39 22,32 45,29 68,32 90,39 112,50 135,64 158,79 180,95 202,111 225,125 248,137 270,147 292,153 315,156 338,157 360,154 382,149 405,142 428,134 450,125 472,116 495,107 518,100 540,94M0,147 22,153 45,156 68,157 90,154 112,149 135,142 158,134 180,125 202,116 225,107 248,100 270,94 292,89 315,87 338,86 360,87 382,90 405,94 428,100 450,108 472,116 495,126 518,136 540,146M0,94 22,89 45,87 68,86 90,87 112,90 135,94 158,100 180,108 202,116 225,126 248,136 270,146 292,157 315,167 338,177 360,187 382,195 405,202 428,207 450,210 472,211 495,209 518,205 540,198M0,146 22,157 45,167 68,177 90,187 112,195 135,202 158,207 180,210 202,211 225,209 248,205 270,198 292,189 315,177 338,165 360,151 382,137 405,124 428,112 450,101 472,94 495,90 518,90 540,94M0,198 22,189 45,177 68,165 90,151 112,137 135,124 158,112 180,102 202,94 225,90 248,90 270,94 292,102 315,113 338,129 360,147 382,168 405,190 428,212 450,234 472,254 495,272 518,287 540,299M0,94 22,102 45,113 68,129 90,147 112,168 135,190 158,212 180,234 202,254 225,272 248,287 270,299 292,306 315,310 338,309 360,305 382,297 405,287 428,274 450,259 472,244 495,228 518,213 540,198M0,299 22,306 45,310 68,309 90,305 112,297 135,287 158,274 180,259 202,244 225,228 248,213 270,198 292,184 315,171 338,160 360,150 382,141 405,132 428,125 450,118 472,112 495,106 518,100 540,95M0,198 22,184 45,171 68,160 90,150 112,141 135,132 158,125 180,118 202,112 225,106 248,100 270,95 292,90 315,85 338,81 360,77 382,75 405,74 428,74 450,75 472,77 495,81 518,87 540,93M0,95 22,90 45,85 68,81 90,77 112,75 135,74 158,74 180,75 202,77 225,81 248,87 270,93 292,101 315,110 338,120 360,131 382,143 405,155 428,169 450,183 472,199 495,215 518,231 540,248M0,93 22,101 45,110 68,120 90,131 112,143 135,155 158,169 180,183 202,199 225,215 248,231 270,248 292,265 315,282 338,297 360,312 382,324 405,333 428,338 450,340 472,337 495,329 518,316 540,298M0,248 22,265 45,282 68,297 90,312 112,324 135,333 158,338 180,340 202,337 225,329 248,316 270,298 292,276 315,250 338,222 360,191 382,160 405,130 428,103 450,79 472,60 495,47 518,41 540,41M0,298 22,276 45,250 68,222 90,191 112,160 135,130 158,103 180,79 202,60 225,47 248,41 270,41 292,49 315,63 338,83 360,107 382,135 405,165 428,195 450,224 472,251 495,273 518,289 540,300M0,41 22,49 45,63 68,83 90,107 112,135 135,165 158,196 180,224 202,251 225,273 248,289 270,300 292,305 315,303 338,294 360,280 382,262 405,239 428,214 450,188 472,162 495,137 518,114 540,94M0,300 22,305 45,303 68,294 90,280 112,262 135,239 158,214 180,188 202,162 225,137 248,114 270,94 292,78 315,66 338,59 360,56 382,57 405,62 428,70 450,81 472,95 495,111 518,128 540,145M0,94 22,78 45,66 68,59 90,56 112,57 135,62 158,70 180,81 202,95 225,111 248,128 270,145 292,163 315,181 338,199 360,215 382,231 405,246 428,259 450,271 472,281 495,289 518,296 540,301M0,145 22,163 45,181 68,199 90,215 112,231 135,246 158,259 180,271 202,281 225,289 248,296 270,301 292,304 315,305 338,304 360,302 382,299 405,294 428,288 450,281 472,273 495,266 518,258 540,250M0,301 22,304 45,305 68,304 90,302 112,299 135,294 158,288 180,281 202,273 225,266 248,258 270,250 292,243 315,237 338,231 360,227 382,224 405,223 428,224 450,226 472,229 495,234 518,241 540,249M0,250 22,243 45,237 68,231 90,227 112,224 135,223 158,223 180,225 202,229 225,234 248,241 270,249 292,258 315,267 338,277 360,286 382,295 405,302 428,308 450,312 472,313 495,312 518,308 540,301M0,249 22,258 45,267 68,277 90,286 112,295 135,302 158,308 180,312 202,313 225,312 248,308 270,301 292,291 315,278 338,264 360,248 382,231 405,214 428,198 450,183 472,169 495,158 518,150 540,146M0,301 22,291 45,278 68,264 90,248 112,231 135,214 158,198 180,183 202,169 225,158 248,150 270,146 292,145 315,147 338,152 360,160 382,170 405,182 428,194 450,207 472,220 495,231 518,241 540,249M0,146 22,145 45,147 68,152 90,160 112,170 135,182 158,194 180,207 202,220 225,231 248,241 270,249 292,255 315,258 338,259 360,257 382,253 405,247 428,240 450,231 472,222 495,213 518,204 540,195M0,249 22,255 45,258 68,259 90,257 112,253 135,247 158,240 180,231 202,222 225,213 248,204 270,195 292,188 315,181 338,176 360,172 382,169 405,168 428,169 450,172 472,176 495,181 518,188 540,196M0,195 22,188 45,181 68,176 90,172 112,169 135,168 158,169 180,172 202,176 225,181 248,188 270,196 292,206 315,216 338,227 360,238 382,249 405,260 428,270 450,279 472,287 495,293 518,297 540,299M0,196 22,206 45,216 68,227 90,238 112,249 135,260 158,270 180,279 202,287 225,293 248,297 270,299 292,299 315,297 338,292 360,286 382,277 405,267 428,256 450,245 472,233 495,220 518,209 540,198M0,299 22,299 45,297 68,292 90,286 112,277 135,267 158,256 180,245 202,232 225,220 248,209 270,198 292,188 315,179 338,172 360,165 382,160 405,157 428,154 450,152 472,150 495,149 518,148 540,147M0,198 22,188 45,179 68,172 90,165 112,161 135,157 158,154 180,152 202,150 225,149 248,148 270,147 292,145 315,144 338,143 360,141 382,140 405,139 428,138 450,138 472,139 495,141 518,143 540,146M0,147 22,145 45,144 68,143 90,141 112,140 135,139 158,138 180,138 202,139 225,141 248,143 270,146 292,150 315,154 338,158 360,162 382,165 405,168 428,169 450,168 472,166 495,161 518,154 540,145M0,146 22,150 45,154 68,158 90,162 112,165 135,168 158,169 180,168 202,166 225,161 248,154 270,145 292,134 315,122 338,108 360,94 382,81 405,68 428,56 450,47 472,41 495,38 518,38 540,43M0,145 22,134 45,122 68,108 90,94 112,81 135,68 158,56 180,47 202,41 225,38 248,38 270,43 292,51 315,63 338,78 360,96 382,116 405,137 428,159 450,180 472,201 495,219 518,236 540,249M0,43 22,51 45,63 68,78 90,96 112,116 135,137 158,159 180,180 202,201 225,219 248,236 270,249 292,259 315,266 338,269 360,270 382,267 405,261 428,253 450,243 472,232 495,220 518,208 540,196M0,249 22,259 45,266 68,269 90,269 112,267 135,261 158,253 180,243 202,232 225,220 248,208 270,196 292,185 315,174 338,165 360,157 382,150 405,145 428,141 450,139 472,138 495,139 518,141 540,145M0,196 22,185 45,174 68,165 90,157 112,150 135,145 158,141 180,139 202,138 225,139 248,141 270,145 292,150 315,157 338,164 360,173 382,182 405,192 428,202 450,212 472,223 495,232 518,242 540,250M0,145 22,150 45,157 68,164 90,173 112,182 135,192 158,202 180,212 202,223 225,232 248,242 270,250 292,257 315,263 338,267 360,270 382,271 405,271 428,270 450,268 472,264 495,260 518,255 540,249M0,250 22,257 45,263 68,267 90,270 112,271 135,271 158,270 180,268 202,264 225,260 248,255 270,249 292,243 315,237 338,230 360,223 382,216 405,208 428,199 450,190 472,180 495,170 518,158 540,146M0,249 22,243 45,237 68,230 90,223 112,216 135,208 158,199 180,190 202,180 225,170 248,158 270,146 292,134 315,122 338,110 360,99 382,89 405,81 428,75 450,72 472,73 495,76 518,83 540,94M0,146 22,134 45,122 68,110 90,99 112,89 135,81 158,75 180,72 202,73 225,76 248,83 270,94 292,108 315,124 338,143 360,164 382,186 405,208 428,229 450,249 472,267 495,282 518,294 540,302M0,94 22,108 45,124 68,143 90,164 112,186 135,208 158,229 180,249 202,267 225,282 248,294 270,302 292,306 315,306 338,302 360,296 382,286 405,275 428,261 450,248 472,234 495,220 518,208 540,197M0,302 22,306 45,306 68,302 90,296 112,286 135,275 158,261 180,248 202,234 225,220 248,208 270,197 292,189 315,182 338,178 360,176 382,175 405,177 428,179 450,182 472,186 495,190 518,194 540,196M0,197 22,189 45,182 68,178 90,176 112,175 135,177 158,179 180,182 202,186 225,190 248,194 270,196 292,199 315,200 338,201 360,201 382,200 405,199 428,198 450,197 472,196 495,196 518,196 540,197M0,196 22,199 45,200 68,201 90,201 112,200 135,199 158,198 180,196 202,196 225,196 248,196 270,197 292,199 315,202 338,204 360,208 382,210 405,213 428,214 450,214 472,213 495,210 518,205 540,198M0,197 22,199 45,202 68,205 90,208 112,210 135,213 158,214 180,214 202,213 225,210 248,205 270,198 292,189 315,179 338,168 360,155 382,143 405,130 428,119 450,109 472,102 495,96 518,94 540,95M0,198 22,189 45,179 68,168 90,155 112,143 135,130 158,119 180,109 202,102 225,96 248,94 270,95 292,98 315,105 338,114 360,124 382,136 405,149 428,161 450,173 472,183 495,190 518,195 540,197M0,95 22,98 45,105 68,114 90,124 112,136 135,149 158,161 180,173 202,183 225,190 248,195 270,197 292,196 315,192 338,186 360,178 382,169 405,160 428,152 450,145 472,140 495,138 518,140 540,145M0,197 22,196 45,192 68,186 90,178 112,169 135,160 158,152 180,145 202,140 225,138 248,140 270,145 292,154 315,166 338,181 360,199 382,217 405,236 428,254 450,270 472,284 495,293 518,299 540,300M0,145 22,154 45,166 68,181 90,199 112,217 135,236 158,254 180,270 202,284 225,293 248,299 270,300 292,295 315,287 338,273 360,256 382,237 405,215 428,192 450,168 472,146 495,126 518,109 540,94M0,300 22,295 45,287 68,273 90,256 112,236 135,215 158,191 180,168 202,146 225,126 248,109 270,94 292,83 315,76 338,73 360,73 382,77 405,83 428,92 450,102 472,113 495,124 518,136 540,147M0,94 22,83 45,76 68,73 90,73 112,77 135,83 158,92 180,102 202,113 225,124 248,136 270,147 292,157 315,166 338,174 360,181 382,186 405,190 428,193 450,195 472,197 495,197 518,197 540,196M0,147 22,157 45,166 68,174 90,181 112,186 135,190 158,193 180,196 202,197 225,197 248,197 270,196 292,194 315,192 338,189 360,186 382,183 405,178 428,174 450,169 472,163 495,157 518,151 540,145M0,196 22,194 45,192 68,189 90,186 112,183 135,178 158,174 180,169 202,163 225,157 248,151 270,145 292,139 315,133 338,128 360,122 382,117 405,112 428,108 450,105 472,101 495,98 518,96 540,94M0,145 22,139 45,133 68,128 90,122 112,117 135,112 158,108 180,105 202,101 225,98 248,96 270,94 292,92 315,90 338,89 360,88 382,88 405,88 428,88 450,88 472,89 495,90 518,92 540,94M0,94 22,92 45,90 68,89 90,88 112,88 135,88 158,88 180,88 202,89 225,90 248,92 270,94 292,96 315,97 338,99 360,101 382,102 405,103 428,103 450,103 472,102 495,100 518,98 540,95M0,94 22,96 45,97 68,99 90,101 112,102 135,103 158,103 180,103 202,102 225,100 248,98 270,95 292,91 315,87 338,83 360,78 382,73 405,68 428,63 450,58 472,53 495,49 518,46 540,43M0,95 22,91 45,87 68,83 90,78 112,73 135,68 158,63 180,58 202,53 225,49 248,46 270,43 292,41 315,39 338,39 360,40 382,42 405,46 428,50 450,56 472,64 495,73 518,83 540,94M0,43 22,41 45,39 68,39 90,40 112,42 135,46 158,50 180,56 202,64 225,73 248,83 270,94 292,106 315,118 338,131 360,144 382,156 405,167 428,177 450,185 472,191 495,195 518,197 540,196M0,94 22,106 45,118 68,131 90,144 112,156 135,167 158,177 180,185 202,191 225,195 248,197 270,196 292,193 315,187 338,180 360,171 382,161 405,150 428,138 450,127 472,117 495,108 518,100 540,94M0,196 22,193 45,187 68,180 90,171 112,161 135,150 158,138 180,127 202,117 225,108 248,100 270,94 292,90 315,88 338,88 360,90 382,94 405,99 428,106 450,114 472,122 495,131 518,140 540,149M0,94 22,90 45,88 68,88 90,90 112,94 135,99 158,106 180,114 202,122 225,131 248,140 270,149 292,157 315,165 338,172 360,179 382,185 405,189 428,193 450,196 472,197 495,198 518,198 540,197M0,149 22,157 45,165 68,172 90,179 112,185 135,189 158,193 180,196 202,197 225,198 248,198 270,197 292,196 315,194 338,192 360,189 382,187 405,185 428,184 450,184 472,185 495,187 518,191 540,197M0,197 22,196 45,194 68,192 90,189 112,187 135,185 158,184 180,184 202,185 225,187 248,191 270,197 292,204 315,212 338,222 360,232 382,243 405,254 428,265 450,275 472,284 495,291 518,296 540,299M0,197 22,204 45,212 68,222 90,232 112,243 135,254 158,265 180,275 202,284 225,291 248,296 270,299 292,300 315,299 338,296 360,291 382,285 405,279 428,272 450,265 472,259 495,254 518,250 540,248M0,299 22,300 45,299 68,296 90,291 112,285 135,279 158,272 180,265 202,259 225,254 248,250 270,248 292,247 315,248 338,250 360,253 382,256 405,259 428,262 450,263 472,262 495,260 518,254 540,246M0,248 22,247 45,248 68,250 90,253 112,256 135,259 158,262 180,263 202,262 225,260 248,254 270,246 292,235 315,222 338,206 360,188 382,168 405,148 428,127 450,106 472,87 495,69 518,54 540,41M0,246 22,235 45,222 68,206 90,188 112,168 135,148 158,127 180,106 202,87 225,69 248,54 270,41 292,31 315,23 338,19 360,17 382,17 405,19 428,22 450,26 472,30 495,35 518,38 540,41M0,41 22,31 45,23 68,19 90,17 112,17 135,19 158,22 180,26 202,30 225,35 248,38 270,41 292,43 315,44 338,45 360,45 382,45 405,46 428,49 450,53 472,59 495,67 518,79 540,93M0,41 22,43 45,44 68,45 90,45 112,45 135,46 158,49 180,53 202,59 225,67 248,79 270,93 292,110 315,128 338,149 360,170 382,190 405,210 428,227 450,241 472,251 495,256 518,256 540,250M0,93 22,110 45,129 68,149 90,170 112,190 135,210 158,227 180,241 202,251 225,256 248,256 270,250 292,239 315,224 338,204 360,181 382,157 405,132 428,107 450,85 472,67 495,53 518,44 540,42M0,250 22,239 45,224 68,204 90,181 112,157 135,132 158,107 180,85 202,67 225,53 248,44 270,42 292,45 315,54 338,68 360,87 382,109 405,134 428,159 450,183 472,205 495,224 518,238 540,248M0,42 22,45 45,54 68,68 90,87 112,109 135,134 158,159 180,183 202,205 225,224 248,238 270,248 292,253 315,252 338,246 360,235 382,221 405,203 428,184 450,164 472,144 495,125 518,109 540,95M0,248 22,253 45,252 68,246 90,235 112,221 135,203 158,184 180,164 202,144 225,125 248,109 270,95 292,84 315,76 338,71 360,69 382,70 405,72 428,76 450,80 472,85 495,89 518,92 540,93M0,95 22,83 45,76 68,71 90,69 112,70 135,72 158,76 180,80 202,85 225,89 248,92 270,93 292,94 315,92 338,90 360,85 382,80 405,74 428,68 450,62 472,56 495,50 518,46 540,42M0,93 22,94 45,92 68,90 90,86 112,80 135,74 158,68 180,62 202,56 225,50 248,46 270,42 292,40 315,38 338,38 360,40 382,42 405,46 428,52 450,58 472,65 495,74 518,84 540,94M0,42 22,40 45,38 68,38 90,40 112,42 135,46 158,52 180,58 202,65 225,74 248,84 270,94 292,106 315,119 338,132 360,146 382,160 405,175 428,189 450,203 472,216 495,228 518,239 540,249M0,94 22,106 45,119 68,132 90,146 112,160 135,175 158,189 180,203 202,216 225,228 248,239 270,249 292,257 315,264 338,269 360,273 382,276 405,279 428,281 450,284 472,287 495,290 518,295 540,301M0,249 22,257 45,264 68,269 90,273 112,276 135,279 158,281 180,284 202,287 225,290 248,295 270,301 292,307 315,314 338,322 360,329 382,335 405,340 428,343 450,342 472,338 495,330 518,317 540,300M0,301 22,307 45,314 68,322 90,329 112,336 135,340 158,343 180,342 202,338 225,330 248,317 270,300 292,279 315,255 338,228 360,198 382,169 405,140 428,112 450,88 472,68 495,54 518,45 540,43M0,300 22,279 45,255 68,228 90,198 112,169 135,140 158,112 180,88 202,68 225,54 248,45 270,43 292,47 315,57 338,72 360,92 382,115 405,140 428,165 450,189 472,210 495,228 518,241 540,248M0,43 22,47 45,57 68,72 90,92 112,115 135,140 158,165 180,189 202,210 225,228 248,241 270,248 292,250 315,247 338,238 360,225 382,209 405,190 428,170 450,151 472,132 495,117 518,104 540,96M0,248 22,250 45,247 68,238 90,225 112,209 135,190 158,170 180,151 202,132 225,117 248,104 270,96 292,92 315,92 338,96 360,104 382,115 405,127 428,141 450,155 472,169 495,181 518,190 540,197M0,96 22,92 45,92 68,96 90,104 112,115 135,127 158,141 180,155 202,169 225,181 248,190 270,197 292,201 315,202 338,200 360,195 382,186 405,176 428,164 450,151 472,137 495,123 518,109 540,96M0,197 22,201 45,202 68,200 90,194 112,186 135,176 158,164 180,151 202,137 225,123 248,109 270,96 292,84 315,73 338,65 360,58 382,53 405,51 428,52 450,55 472,61 495,70 518,81 540,94M0,96 22,84 45,73 68,65 90,58 112,53 135,51 158,52 180,55 202,61 225,70 248,81 270,94 292,110 315,128 338,148 360,168 382,190 405,211 428,231 450,250 472,266 495,281 518,292 540,300M0,94 22,110 45,128 68,148 90,169 112,190 135,211 158,231 180,250 202,266 225,281 248,292 270,300 292,304 315,305 338,302 360,296 382,288 405,277 428,264 450,250 472,236 495,222 518,209 540,197M0,300 22,304 45,305 68,302 90,296 112,288 135,277 158,264 180,250 202,236 225,222 248,209 270,197 292,187 315,178 338,170 360,165 382,160 405,157 428,155 450,153 472,152 495,150 518,148 540,146M0,197 22,187 45,178 68,170 90,165 112,160 135,157 158,155 180,153 202,152 225,150 248,148 270,146 292,143 315,140 338,136 360,133 382,130 405,128 428,127 450,127 472,129 495,133 518,138 540,146M0,146 22,143 45,140 68,136 90,133 112,130 135,128 158,127 180,127 202,129 225,133 248,138 270,146 292,155 315,165 338,177 360,189 382,201 405,213 428,223 450,233 472,240 495,245 518,247 540,247M0,146 22,155 45,165 68,177 90,189 112,201 135,212 158,223 180,232 202,240 225,245 248,247 270,247 292,244 315,238 338,230 360,219 382,206 405,192 428,176 450,159 472,143 495,126 518,110 540,95M0,247 22,244 45,238 68,230 90,219 112,206 135,192 158,176 180,159 202,143 225,126 248,110 270,95 292,82 315,70 338,61 360,54 382,49 405,47 428,48 450,52 472,58 495,68 518,79 540,93M0,95 22,82 45,70 68,61 90,54 112,49 135,47 158,48 180,52 202,58 225,68 248,79 270,93 292,109 315,126 338,145 360,165 382,185 405,205 428,224 450,243 472,260 495,276 518,290 540,302M0,93 22,109 45,126 68,145 90,165 112,185 135,205 158,224 180,243 202,260 225,276 248,290 270,302 292,311 315,318 338,322 360,323 382,321 405,317 428,310 450,302 472,291 495,278 518,264 540,249M0,302 22,311 45,318 68,322 90,323 112,321 135,317 158,311 180,302 202,291 225,278 248,264 270,249 292,234 315,219 338,204 360,189 382,176 405,165 428,156 450,148 472,144 495,142 518,142 540,145M0,249 22,234 45,219 68,204 90,189 112,176 135,165 158,156 180,149 202,144 225,142 248,142 270,145 292,151 315,159 338,170 360,182 382,196 405,211 428,227 450,243 472,259 495,274 518,288 540,301M0,145 22,151 45,159 68,170 90,182 112,196 135,211 158,227 180,243 202,259 225,274 248,288 270,301 292,313 315,322 338,329 360,335 382,337 405,338 428,336 450,333 472,327 495,319 518,310 540,300M0,301 22,313 45,322 68,329 90,335 112,337 135,338 158,336 180,333 202,327 225,319 248,310 270,300 292,289 315,278 338,266 360,254 382,243 405,232 428,223 450,215 472,208 495,202 518,199 540,196M0,300 22,289 45,278 68,266 90,254 112,243 135,232 158,223 180,215 202,208 225,202 248,199 270,196 292,196 315,197 338,199 360,203 382,208 405,214 428,220 450,226 472,233 495,239 518,245 540,250M0,196 22,196 45,197 68,200 90,203 112,208 135,214 158,220 180,226 202,233 225,239 248,245 270,250 292,254 315,257 338,259 360,259 382,257 405,254 428,249 450,242 472,233 495,222 518,211 540,197M0,250 22,254 45,257 68,259 90,259 112,257 135,254 158,249 180,242 202,233 225,222 248,211 270,197 292,183 315,168 338,154 360,139 382,126 405,113 428,103 450,95 472,90 495,88 518,90 540,94M0,197 22,183 45,168 68,154 90,139 112,126 135,113 158,103 180,95 202,90 225,88 248,90 270,94 292,102 315,113 338,126 360,142 382,158 405,175 428,192 450,208 472,223 495,235 518,245 540,251M0,94 22,102 45,113 68,126 90,142 112,158 135,175 158,192 180,208 202,223 225,235 248,245 270,251 292,254 315,253 338,249 360,242 382,233 405,221 428,208 450,195 472,181 495,168 518,156 540,146M0,251 22,254 45,253 68,249 90,242 112,233 135,221 158,209 180,195 202,181 225,168 248,156 270,146 292,137 315,131 338,126 360,124 382,123 405,125 428,127 450,130 472,134 495,138 518,142 540,146M0,146 22,137 45,131 68,126 90,124 112,123 135,125 158,127 180,130 202,134 225,138 248,142 270,146 292,150 315,153 338,156 360,159 382,161 405,164 428,167 450,171 472,176 495,181 518,188 540,196M0,146 22,150 45,153 68,156 90,159 112,161 135,164 158,167 180,171 202,176 225,181 248,188 270,196 292,205 315,215 338,225 360,236 382,248 405,259 428,269 450,279 472,287 495,294 518,298 540,301M0,196 22,205 45,215 68,225 90,236 112,248 135,259 158,269 180,279 202,287 225,294 248,298 270,301 292,302 315,301 338,298 360,294 382,289 405,283 428,276 450,269 472,262 495,256 518,251 540,247M0,301 22,302 45,301 68,299 90,294 112,289 135,283 158,276 180,269 202,262 225,256 248,251 270,247 292,244 315,241 338,239 360,238 382,237 405,235 428,232 450,229 472,223 495,217 518,208 540,198M0,247 22,244 45,241 68,239 90,238 112,237 135,235 158,232 180,229 202,223 225,217 248,208 270,198 292,186 315,173 338,159 360,144 382,130 405,117 428,106 450,97 472,90 495,87 518,88 540,92M0,198 22,186 45,173 68,159 90,144 112,130 135,117 158,106 180,97 202,90 225,87 248,88 270,92 292,100 315,111 338,126 360,143 382,162 405,183 428,204 450,226 472,247 495,266 518,284 540,300M0,92 22,100 45,111 68,126 90,143 112,162 135,183 158,204 180,226 202,247 225,266 248,284 270,300 292,313 315,323 338,329 360,333 382,333 405,330 428,323 450,313 472,301 495,285 518,268 540,248M0,300 22,313 45,323 68,329 90,333 112,333 135,329 158,323 180,313 202,301 225,285 248,268 270,248 292,227 315,206 338,184 360,163 382,143 405,124 428,109 450,97 472,89 495,86 518,87 540,93M0,248 22,227 45,206 68,184 90,163 112,143 135,124 158,109 180,97 202,89 225,86 248,87 270,93 292,104 315,119 338,137 360,159 382,182 405,205 428,229 450,250 472,269 495,284 518,294 540,299M0,93 22,104 45,119 68,137 90,159 112,182 135,205 158,229 180,250 202,269 225,284 248,294 270,299 292,300 315,295 338,285 360,272 382,255 405,236 428,217 450,197 472,180 495,164 518,152 540,144M0,299 22,300 45,295 68,285 90,272 112,255 135,236 158,217 180,197 202,180 225,164 248,152 270,144 292,140 315,141 338,145 360,153 382,164 405,177 428,191 450,205 472,219 495,231 518,240 540,247M0,144 22,140 45,141 68,145 90,153 112,164 135,177 158,191 180,205 202,219 225,231 248,240 270,247 292,251 315,252 338,250 360,245 382,239 405,231 428,223 450,215 472,208 495,203 518,199 540,198M0,247 22,251 45,252 68,250 90,245 112,239 135,232 158,223 180,215 202,208 225,203 248,199 270,198 292,199 315,202 338,208 360,217 382,227 405,238 428,250 450,262 472,274 495,284 518,294 540,302M0,198 22,199 45,202 68,208 90,217 112,227 135,238 158,250 180,262 202,274 225,284 248,294 270,302 292,307 315,311 338,313 360,312 382,309 405,304 428,298 450,290 472,282 495,272 518,262 540,252M0,302 22,307 45,311 68,312 90,312 112,309 135,304 158,298 180,290 202,282 225,272 248,262 270,252 292,241 315,230 338,219 360,207 382,195 405,183 428,170 450,156 472,142 495,126 518,111 540,94M0,252 22,241 45,230 68,219 90,207 112,195 135,183 158,170 180,156 202,142 225,126 248,111 270,94 292,78 315,62 338,47 360,33 382,21 405,12 428,6 450,5 472,7 495,14 518,25 540,42M0,94 22,78 45,62 68,47 90,33 112,21 135,12 158,6 180,5 202,7 225,14 248,26 270,42 292,62 315,86 338,112 360,141 382,170 405,199 428,226 450,250 472,271 495,286 518,296 540,300M0,42 22,62 45,86 68,112 90,141 112,170 135,199 158,226 180,250 202,271 225,286 248,296 270,300 292,298 315,289 338,275 360,256 382,232 405,205 428,176 450,147 472,118 495,90 518,64 540,42M0,300 22,298 45,289 68,275 90,256 112,232 135,205 158,176 180,147 202,118 225,90 248,64 270,42 292,24 315,10 338,0 360,-6 382,-6 405,-6 428,-1 450,6 472,14 495,24 518,33 540,43M0,42 22,24 45,10 68,0 90,-6 112,-6 135,-6 158,-1 180,6 202,14 225,23 248,33 270,43 292,52 315,61 338,69 360,76 382,83 405,90 428,98 450,106 472,114 495,124 518,135 540,146M0,43 22,52 45,61 68,69 90,76 112,83 135,90 158,98 180,106 202,114 225,124 248,135 270,146 292,159 315,172 338,186 360,200 382,213 405,225 428,235 450,243 472,249 495,252 518,252 540,249M0,146 22,159 45,172 68,186 90,200 112,213 135,225 158,235 180,243 202,249 225,252 248,252 270,249 292,244 315,236 338,226 360,215 382,202 405,190 428,178 450,167 472,158 495,151 518,147 540,145M0,249 22,244 45,236 68,226 90,215 112,202 135,190 158,178 180,167 202,158 225,151 248,147 270,145 292,146 315,150 338,156 360,165 382,175 405,186 428,199 450,211 472,223 495,233 518,243 540,251M0,145 22,146 45,150 68,156 90,165 112,175 135,186 158,199 180,211 202,223 225,233 248,243 270,251 292,256 315,260 338,261 360,260 382,257 405,251 428,244 450,236 472,227 495,217 518,207 540,196M0,251 22,256 45,260 68,261 90,260 112,257 135,251 158,244 180,236 202,227 225,217 248,207 270,196 292,186 315,177 338,169 360,161 382,155 405,150 428,146 450,143 472,142 495,143 518,144 540,147M0,196 22,186 45,177 68,169 90,161 112,155 135,150 158,146 180,143 202,142 225,143 248,144 270,147 292,151 315,156 338,162 360,169 382,177 405,186 428,196 450,206 472,216 495,227 518,238 540,249M0,147 22,151 45,156 68,162 90,169 112,177 135,186 158,196 180,206 202,216 225,227 248,238 270,249 292,259 315,269 338,278 360,285 382,290 405,293 428,294 450,291 472,286 495,277 518,265 540,249M0,249 22,259 45,269 68,278 90,285 112,290 135,293 158,294 180,291 202,286 225,277 248,265 270,249 292,231 315,211 338,189 360,166 382,142 405,119 428,98 450,80 472,64 495,53 518,45 540,43M0,249 22,231 45,211 68,189 90,166 112,142 135,119 158,98 180,80 202,64 225,52 248,45 270,43 292,45 315,52 338,62 360,77 382,93 405,112 428,131 450,149 472,166 495,180 518,191 540,198M0,43 22,45 45,52 68,62 90,77 112,93 135,112 158,131 180,149 202,166 225,180 248,191 270,198 292,202 315,201 338,198 360,191 382,182 405,173 428,163 450,154 472,147 495,143 518,143 540,147M0,198 22,202 45,202 68,198 90,191 112,182 135,173 158,163 180,154 202,147 225,143 248,143 270,147 292,154 315,166 338,181 360,198 382,217 405,237 428,256 450,272 472,286 495,296 518,301 540,301M0,147 22,154 45,166 68,181 90,198 112,217 135,237 158,256 180,272 202,286 225,296 248,301 270,301 292,295 315,284 338,269 360,250 382,228 405,204 428,180 450,157 472,136 495,118 518,105 540,95M0,301 22,295 45,284 68,269 90,250 112,228 135,204 158,180 180,157 202,136 225,118 248,105 270,95 292,90 315,91 338,95 360,103 382,114 405,128 428,142 450,156 472,169 495,180 518,189 540,195M0,95 22,90 45,90 68,95 90,103 112,114 135,128 158,142 180,156 202,169 225,180 248,189 270,195 292,197 315,196 338,192 360,186 382,179 405,170 428,162 450,154 472,148 495,144 518,144 540,146M0,195 22,197 45,196 68,193 90,186 112,179 135,170 158,162 180,154 202,148 225,144 248,144 270,146 292,152 315,160 338,172 360,186 382,202 405,218 428,235 450,252 472,267 495,281 518,292 540,301M0,146 22,152 45,160 68,172 90,186 112,202 135,218 158,235 180,252 202,267 225,281 248,292 270,301 292,307 315,310 338,311 360,309 382,304 405,298 428,291 450,283 472,274 495,265 518,257 540,249M0,301 22,307 45,310 68,311 90,309 112,304 135,298 158,291 180,283 202,274 225,265 248,257 270,249 292,243 315,237 338,233 360,230 382,228 405,228 428,229 450,231 472,234 495,239 518,244 540,250M0,249 22,243 45,237 68,233 90,230 112,228 135,228 158,229 180,231 202,234 225,239 248,244 270,250 292,256 315,263 338,269 360,274 382,278 405,281 428,283 450,282 472,278 495,272 518,263 540,251M0,250 22,256 45,263 68,269 90,274 112,278 135,281 158,283 180,282 202,278 225,272 248,263 270,251 292,237 315,220 338,202 360,182 382,160 405,139 428,118 450,99 472,81 495,65 518,52 540,43M0,251 22,237 45,220 68,202 90,182 112,160 135,139 158,118 180,99 202,81 225,65 248,52 270,43 292,37 315,34 338,35 360,39 382,47 405,57 428,69 450,83 472,98 495,114 518,130 540,145M0,43 22,37 45,34 68,35 90,39 112,47 135,57 158,69 180,83 202,98 225,114 248,130 270,145 292,160 315,175 338,188 360,199 382,210 405,219 428,227 450,234 472,239 495,244 518,247 540,250M0,145 22,160 45,174 68,188 90,199 112,210 135,219 158,227 180,234 202,239 225,244 248,247 270,250 292,253 315,254 338,255 360,256 382,256 405,256 428,255 450,255 472,253 495,252 518,250 540,249M0,250 22,253 45,254 68,255 90,256 112,256 135,256 158,255 180,254 202,253 225,252 248,250 270,249 292,247 315,246 338,244 360,243 382,242 405,242 428,242 450,243 472,244 495,245 518,248 540,250M0,249 22,247 45,246 68,244 90,243 112,242 135,242 158,242 180,243 202,244 225,245 248,248 270,250 292,253 315,256 338,259 360,261 382,263 405,265 428,265 450,265 472,263 495,260 518,255 540,249M0,250 22,253 45,256 68,259 90,261 112,263 135,265 158,265 180,265 202,263 225,260 248,255 270,249 292,241 315,233 338,223 360,213 382,202 405,192 428,181 450,172 472,163 495,156 518,150 540,145M0,249 22,241 45,233 68,223 90,213 112,202 135,192 158,181 180,172 202,163 225,156 248,150 270,145 292,142 315,141 338,141 360,142 382,144 405,146 428,148 450,149 472,150 495,150 518,148 540,145M0,145 22,142 45,141 68,141 90,142 112,144 135,146 158,148 180,149 202,150 225,150 248,148 270,145 292,141 315,134 338,127 360,118 382,109 405,98 428,88 450,77 472,67 495,57 518,49 540,42M0,145 22,140 45,134 68,127 90,118 112,108 135,98 158,88 180,77 202,67 225,57 248,49 270,42 292,36 315,32 338,30 360,30 382,32 405,35 428,41 450,48 472,58 495,69 518,81 540,95M0,42 22,36 45,32 68,30 90,30 112,32 135,35 158,41 180,48 202,58 225,69 248,81 270,95 292,110 315,125 338,141 360,157 382,173 405,189 428,203 450,216 472,227 495,236 518,243 540,248M0,95 22,110 45,125 68,141 90,157 112,173 135,189 158,203 180,216 202,227 225,236 248,243 270,248 292,250 315,250 338,248 360,245 382,239 405,233 428,226 450,219 472,213 495,207 518,202 540,198M0,248 22,250 45,250 68,248 90,245 112,239 135,233 158,226 180,219 202,213 225,207 248,202 270,198 292,195 315,193 338,193 360,194 382,195 405,197 428,199 450,200 472,201 495,201 518,199 540,197M0,198 22,195 45,194 68,193 90,194 112,195 135,197 158,199 180,200 202,201 225,201 248,199 270,197 292,193 315,187 338,181 360,173 382,164 405,154 428,144 450,133 472,122 495,112 518,102 540,93M0,197 22,193 45,187 68,181 90,173 112,164 135,154 158,144 180,133 202,122 225,112 248,102 270,93 292,85 315,78 338,72 360,68 382,65 405,64 428,65 450,67 472,71 495,77 518,85 540,94M0,93 22,85 45,78 68,72 90,68 112,65 135,64 158,65 180,67 202,71 225,77 248,85 270,94 292,105 315,116 338,129 360,141 382,154 405,165 428,176 450,185 472,192 495,197 518,199 540,199M0,94 22,105 45,116 68,129 90,141 112,154 135,165 158,176 180,185 202,192 225,197 248,199 270,199 292,196 315,190 338,183 360,173 382,163 405,151 428,139 450,128 472,117 495,107 518,99 540,93M0,199 22,196 45,190 68,183 90,173 112,163 135,151 158,139 180,128 202,117 225,107 248,99 270,93 292,89 315,88 338,88 360,91 382,95 405,100 428,107 450,115 472,123 495,131 518,139 540,147M0,93 22,89 45,88 68,88 90,91 112,95 135,100 158,107 180,115 202,123 225,131 248,139 270,147 292,154 315,160 338,165 360,168 382,171 405,172 428,171 450,169 472,166 495,160 518,154 540,147M0,147 22,154 45,160 68,165 90,168 112,171 135,172 158,171 180,169 202,166 225,161 248,154 270,147 292,138 315,129 338,119 360,110 382,101 405,94 428,88 450,84 472,83 495,84 518,88 540,95M0,147 22,138 45,129 68,119 90,110 112,101 135,94 158,88 180,84 202,83 225,84 248,88 270,95 292,105 315,118 338,132 360,148 382,165 405,182 428,199 450,214 472,227 495,237 518,244 540,248M0,95 22,105 45,118 68,132 90,148 112,165 135,182 158,199 180,214 202,227 225,237 248,244 270,248 292,248 315,246 338,240 360,231 382,220 405,209 428,196 450,183 472,171 495,161 518,152 540,146M0,248 22,248 45,246 68,240 90,231 112,221 135,209 158,196 180,183 202,171 225,161 248,152 270,146 292,142 315,141 338,143 360,147 382,154 405,164 428,175 450,189 472,203 495,219 518,235 540,251M0,146 22,142 45,141 68,143 90,147 112,154 135,164 158,175 180,189 202,203 225,219 248,235 270,251 292,267 315,282 338,297 360,309 382,319 405,327 428,332 450,333 472,331 495,324 518,314 540,300M0,251 22,267 45,282 68,297 90,309 112,319 135,327 158,332 180,333 202,331 225,324 248,314 270,300 292,282 315,261 338,238 360,213 382,188 405,164 428,141 450,122 472,106 495,96 518,91 540,92M0,300 22,282 45,261 68,238 90,213 112,188 135,164 158,141 180,122 202,106 225,96 248,91 270,92 292,99 315,112 338,129 360,151 382,175 405,201 428,226 450,250 472,270 495,285 518,295 540,299M0,92 22,99 45,112 68,129 90,151 112,175 135,201 158,226 180,250 202,270 225,285 248,295 270,299 292,295 315,286 338,271 360,250 382,227 405,201 428,175 450,151 472,129 495,112 518,100 540,95M0,299 22,295 45,286 68,271 90,251 112,227 135,201 158,175 180,151 202,129 225,112 248,100 270,95 292,95 315,102 338,115 360,132 382,152 405,174 428,196 450,216 472,232 495,244 518,249 540,249M0,95 22,95 45,102 68,115 90,132 112,152 135,174 158,196 180,216 202,232 225,243 248,249 270,249 292,242 315,228 338,210 360,187 382,161 405,135 428,109 450,85 472,65 495,51 518,43 540,42M0,249 22,242 45,228 68,210 90,187 112,161 135,135 158,109 180,85 202,65 225,51 248,43 270,42 292,48 315,60 338,79 360,103 382,131 405,160 428,191 450,220 472,247 495,270 518,287 540,299M0,42 22,48 45,60 68,79 90,103 112,131 135,160 158,191 180,220 202,247 225,270 248,287 270,299 292,305 315,305 338,299 360,287 382,270 405,249 428,225 450,199 472,172 495,145 518,119 540,94M0,299 22,305 45,305 68,299 90,287 112,270 135,249 158,225 180,199 202,172 225,145 248,119 270,94 292,72 315,52 338,35 360,22 382,12 405,6 428,4 450,5 472,10 495,18 518,30 540,44M0,94 22,72 45,52 68,35 90,22 112,12 135,6 158,4 180,5 202,10 225,18 248,30 270,44 292,60 315,78 338,97 360,116 382,136 405,154 428,170 450,183 472,192 495,198 518,200 540,196M0,44 22,60 45,78 68,97 90,116 112,136 135,154 158,170 180,183 202,192 225,198 248,200 270,196 292,189 315,178 338,163 360,145 382,126 405,107 428,88 450,71 472,57 495,48 518,42 540,42M0,196 22,189 45,178 68,163 90,145 112,126 135,107 158,88 180,71 202,57 225,48 248,42 270,42 292,47 315,57 338,71 360,89 382,111 405,134 428,158 450,182 472,204 495,223 518,239 540,250M0,42 22,47 45,56 68,71 90,89 112,111 135,134 158,158 180,182 202,204 225,223 248,239 270,250 292,257 315,259 338,256 360,248 382,237 405,221 428,203 450,183 472,161 495,138 518,116 540,94M0,250 22,257 45,259 68,256 90,248 112,237 135,221 158,203 180,183 202,161 225,138 248,116 270,94 292,74 315,56 338,40 360,27 382,17 405,10 428,7 450,7 472,11 495,18 518,28 540,42M0,94 22,74 45,56 68,40 90,27 112,17 135,10 158,7 180,7 202,11 225,18 248,28 270,42 292,59 315,77 338,98 360,120 382,142 405,164 428,185 450,204 472,221 495,234 518,243 540,249M0,42 22,59 45,77 68,98 90,120 112,142 135,164 158,185 180,204 202,221 225,234 248,243 270,249 292,250 315,247 338,239 360,228 382,214 405,198 428,179 450,161 472,142 495,124 518,108 540,93M0,249 22,250 45,247 68,239 90,228 112,214 135,198 158,180 180,161 202,142 225,124 248,108 270,93 292,82 315,74 338,68 360,65 382,65 405,67 428,70 450,75 472,80 495,85 518,89 540,93M0,93 22,82 45,74 68,68 90,65 112,65 135,67 158,70 180,75 202,80 225,85 248,89 270,93 292,96 315,98 338,99 360,100 382,101 405,102 428,105 450,108 472,114 495,122 518,132 540,145M0,93 22,96 45,98 68,99 90,100 112,101 135,102 158,105 180,108 202,114 225,122 248,132 270,145 292,160 315,177 338,196 360,215 382,235 405,253 428,269 450,283 472,294 495,300 518,303 540,301M0,145 22,160 45,177 68,196 90,215 112,234 135,253 158,269 180,283 202,294 225,300 248,303 270,301 292,294 315,283 338,269 360,253 382,235 405,216 428,198 450,181 472,167 495,156 518,149 540,147M0,301 22,294 45,283 68,269 90,253 112,235 135,216 158,198 180,181 202,167 225,156 248,149 270,147 292,149 315,156 338,167 360,181 382,197 405,215 428,234 450,252 472,268 495,282 518,293 540,300M0,147 22,149 45,156 68,167 90,181 112,197 135,215 158,234 180,252 202,268 225,282 248,293 270,300 292,303 315,302 338,298 360,290 382,280 405,267 428,254 450,240 472,227 495,214 518,204 540,196M0,300 22,303 45,302 68,298 90,290 112,280 135,267 158,254 180,240 202,227 225,214 248,204 270,196 292,190 315,187 338,187 360,189 382,193 405,200 428,207 450,215 472,224 495,232 518,240 540,247M0,196 22,190 45,187 68,187 90,189 112,193 135,200 158,207 180,215 202,224 225,232 248,240 270,247 292,252 315,256 338,259 360,259 382,258 405,255 428,250 450,243 472,234 495,223 518,211 540,197M0,247 22,252 45,256 68,259 90,259 112,258 135,255 158,250 180,243 202,234 225,223 248,211 270,197 292,182 315,167 338,151 360,134 382,118 405,102 428,87 450,74 472,63 495,53 518,47 540,42M0,197 22,183 45,167 68,151 90,134 112,118 135,102 158,87 180,74 202,63 225,53 248,47 270,42 292,41 315,43 338,47 360,53 382,62 405,72 428,84 450,96 472,109 495,121 518,133 540,144M0,42 22,41 45,43 68,47 90,53 112,62 135,72 158,84 180,96 202,109 225,121 248,133 270,144 292,154 315,162 338,170 360,175 382,180 405,183 428,186 450,188 472,190 495,192 518,194 540,196M0,144 22,154 45,162 68,169 90,175 112,180 135,183 158,186 180,188 202,190 225,192 248,194 270,196 292,198 315,200 338,203 360,205 382,207 405,209 428,209 450,209 472,208 495,206 518,202 540,197M0,196 22,198 45,200 68,203 90,205 112,207 135,209 158,210 180,209 202,208 225,206 248,202 270,197 292,190 315,183 338,174 360,165 382,155 405,144 428,134 450,124 472,115 495,107 518,99 540,93M0,197 22,190 45,183 68,174 90,165 112,155 135,144 158,134 180,124 202,115 225,107 248,99 270,93 292,88 315,85 338,82 360,81 382,81 405,81 428,83 450,85 472,87 495,89 518,92 540,95M0,93 22,88 45,85 68,82 90,81 112,81 135,81 158,83 180,85 202,87 225,89 248,92 270,95 292,97 315,99 338,101 360,102 382,103 405,104 428,103 450,102 472,101 495,99 518,96 540,93M0,95 22,97 45,99 68,101 90,102 112,103 135,103 158,103 180,102 202,101 225,99 248,96 270,93 292,90 315,86 338,82 360,78 382,73 405,68 428,64 450,59 472,55 495,51 518,47 540,43M0,93 22,90 45,86 68,82 90,78 112,73 135,68 158,64 180,59 202,55 225,51 248,47 270,43 292,40 315,38 338,36 360,34 382,33 405,33 428,33 450,34 472,35 495,37 518,40 540,43M0,43 22,40 45,38 68,36 90,34 112,33 135,33 158,33 180,34 202,35 225,37 248,40 270,43 292,46 315,50 338,54 360,58 382,62 405,67 428,71 450,76 472,81 495,85 518,90 540,94M0,43 22,46 45,50 68,54 90,58 112,62 135,67 158,71 180,76 202,81 225,85 248,90 270,94 292,98 315,102 338,107 360,111 382,115 405,119 428,123 450,127 472,132 495,136 518,141 540,146M0,94 22,98 45,102 68,107 90,111 112,115 135,119 158,123 180,127 202,132 225,136 248,141 270,146 292,151 315,157 338,162 360,167 382,172 405,177 428,182 450,186 472,190 495,194 518,197 540,199M0,146 22,151 45,157 68,162 90,167 112,172 135,177 158,182 180,186 202,190 225,194 248,197 270,199 292,202 315,203 338,204 360,205 382,206 405,206 428,205 450,204 472,203 495,202 518,200 540,198M0,199 22,202 45,203 68,205 90,205 112,206 135,206 158,205 180,204 202,203 225,202 248,200 270,198 292,196 315,194 338,192 360,190 382,189 405,188 428,188 450,188 472,189 495,191 518,194 540,197M0,198 22,196 45,194 68,192 90,190 112,189 135,188 158,188 180,188 202,189 225,191 248,194 270,197 292,201 315,205 338,209 360,213 382,216 405,219 428,220 450,219 472,217 495,213 518,206 540,197M0,197 22,201 45,205 68,209 90,213 112,216 135,219 158,220 180,219 202,217 225,213 248,206 270,197 292,186 315,174 338,159 360,144 382,128 405,112 428,96 450,81 472,68 495,57 518,49 540,43M0,197 22,186 45,174 68,159 90,144 112,128 135,112 158,96 180,81 202,68 225,57 248,49 270,43 292,40 315,40 338,42 360,48 382,56 405,66 428,78 450,90 472,104 495,118 518,132 540,145M0,43 22,40 45,40 68,43 90,48 112,56 135,66 158,78 180,90 202,104 225,118 248,132 270,145 292,158 315,169 338,179 360,187 382,194 405,199 428,203 450,204 472,205 495,203 518,201 540,197M0,145 22,158 45,169 68,179 90,187 112,194 135,199 158,203 180,204 202,205 225,203 248,201 270,197 292,191 315,185 338,177 360,169 382,160 405,151 428,141 450,131 472,121 495,111 518,102 540,93M0,197 22,191 45,185 68,177 90,169 112,160 135,151 158,141 180,131 202,121 225,111 248,102 270,93 292,85 315,79 338,74 360,70 382,67 405,66 428,67 450,70 472,74 495,79 518,86 540,95M0,93 22,85 45,79 68,74 90,70 112,67 135,67 158,67 180,70 202,74 225,79 248,86 270,95 292,105 315,115 338,127 360,140 382,153 405,167 428,181 450,195 472,209 495,223 518,236 540,249M0,95 22,105 45,115 68,127 90,140 112,153 135,167 158,181 180,195 202,209 225,223 248,236 270,249 292,261 315,272 338,281 360,290 382,297 405,302 428,306 450,308 472,309 495,307 518,305 540,301M0,249 22,261 45,272 68,281 90,290 112,297 135,302 158,306 180,308 202,309 225,307 248,305 270,301 292,295 315,289 338,281 360,273 382,264 405,255 428,245 450,235 472,225 495,216 518,207 540,198M0,301 22,295 45,289 68,281 90,273 112,264 135,255 158,245 180,235 202,225 225,216 248,207 270,198 292,190 315,183 338,178 360,173 382,170 405,169 428,169 450,171 472,175 495,181 518,189 540,199M0,198 22,190 45,183 68,178 90,173 112,170 135,169 158,169 180,171 202,175 225,181 248,189 270,199 292,210 315,222 338,234 360,247 382,260 405,272 428,283 450,291 472,298 495,302 518,303 540,301M0,199 22,210 45,222 68,234 90,247 112,260 135,272 158,283 180,291 202,298 225,302 248,303 270,301 292,295 315,287 338,276 360,263 382,248 405,232 428,216 450,199 472,184 495,169 518,157 540,147M0,301 22,295 45,287 68,276 90,263 112,248 135,232 158,216 180,199 202,184 225,169 248,157 270,147 292,139 315,133 338,130 360,129 382,130 405,132 428,135 450,138 472,141 495,143 518,144 540,143M0,147 22,139 45,133 68,130 90,129 112,130 135,132 158,135 180,138 202,141 225,143 248,144 270,143 292,141 315,138 338,133 360,127 382,120 405,114 428,107 450,101 472,97 495,94 518,93 540,94M0,143 22,141 45,138 68,133 90,127 112,121 135,114 158,107 180,101 202,97 225,94 248,93 270,94 292,97 315,102 338,108 360,115 382,123 405,131 428,138 450,143 472,147 495,149 518,149 540,146M0,94 22,97 45,102 68,108 90,115 112,123 135,131 158,138 180,143 202,147 225,149 248,149 270,146 292,140 315,133 338,123 360,112 382,100 405,88 428,76 450,66 472,56 495,49 518,45 540,43M0,146 22,140 45,133 68,123 90,112 112,100 135,88 158,76 180,66 202,56 225,49 248,45 270,43 292,44 315,48 338,55 360,65 382,77 405,92 428,107 450,125 472,142 495,160 518,178 540,195M0,43 22,44 45,48 68,55 90,65 112,77 135,92 158,107 180,125 202,142 225,160 248,178 270,195 292,211 315,226 338,239 360,250 382,258 405,265 428,269 450,270 472,269 495,265 518,258 540,250M0,195 22,211 45,226 68,239 90,250 112,259 135,265 158,269 180,270 202,269 225,265 248,258 270,250 292,239 315,227 338,213 360,198 382,183 405,168 428,152 450,138 472,124 495,112 518,102 540,94M0,250 22,239 45,227 68,213 90,198 112,183 135,168 158,152 180,138 202,124 225,112 248,102 270,94 292,88 315,85 338,83 360,84 382,87 405,92 428,99 450,107 472,116 495,126 518,136 540,146M0,94 22,88 45,85 68,83 90,84 112,87 135,92 158,99 180,107 202,116 225,126 248,136 270,146 292,157 315,166 338,175 360,183 382,190 405,195 428,199 450,202 472,203 495,203 518,201 540,197M0,146 22,157 45,166 68,175 90,183 112,190 135,195 158,199 180,202 202,203 225,203 248,201 270,197 292,193 315,187 338,181 360,175 382,168 405,162 428,156 450,151 472,147 495,145 518,144 540,146M0,197 22,193 45,187 68,181 90,175 112,168 135,162 158,156 180,151 202,147 225,145 248,144 270,146 292,149 315,154 338,160 360,168 382,177 405,188 428,198 450,209 472,220 495,230 518,240 540,248M0,146 22,149 45,154 68,160 90,168 112,177 135,188 158,198 180,209 202,220 225,230 248,240 270,248 292,254 315,260 338,264 360,266 382,267 405,267 428,265 450,263 472,260 495,257 518,254 540,250M0,248 22,254 45,260 68,264 90,266 112,267 135,267 158,265 180,263 202,260 225,257 248,254 270,250 292,247 315,243 338,240 360,237 382,234 405,230 428,226 450,222 472,217 495,211 518,205 540,197M0,250 22,247 45,243 68,240 90,237 112,234 135,230 158,226 180,222 202,217 225,211 248,205 270,197 292,189 315,180 338,171 360,161 382,150 405,140 428,130 450,121 472,112 495,104 518,98 540,92M0,197 22,189 45,180 68,171 90,161 112,150 135,140 158,130 180,121 202,112 225,104 248,98 270,92 292,88 315,86 338,84 360,83 382,84 405,85 428,86 450,88 472,90 495,92 518,93 540,95M0,92 22,88 45,86 68,84 90,83 112,84 135,85 158,86 180,88 202,90 225,92 248,93 270,95 292,96 315,97 338,98 360,99 382,100 405,103 428,107 450,111 472,118 495,126 518,135 540,146M0,95 22,96 45,97 68,98 90,99 112,101 135,103 158,107 180,111 202,118 225,126 248,135 270,146 292,158 315,171 338,185 360,199 382,212 405,224 428,235 450,244 472,250 495,253 518,253 540,250M0,146 22,158 45,171 68,185 90,199 112,212 135,224 158,235 180,244 202,250 225,253 248,253 270,250 292,243 315,233 338,220 360,205 382,187 405,167 428,146 450,125 472,104 495,83 518,63 540,45M0,250 22,243 45,233 68,220 90,205 112,187 135,167 158,146 180,125 202,104 225,83 248,63 270,45 292,29 315,15 338,4 360,-4 382,-6 405,-6 428,-6 450,-5 472,2 495,13 518,26 540,43M0,45 22,29 45,15 68,4 90,-4 112,-6 135,-6 158,-6 180,-5 202,2 225,13 248,26 270,43 292,61 315,81 338,102 360,124 382,145 405,166 428,186 450,204 472,220 495,232 518,242 540,248M0,43 22,61 45,81 68,102 90,124 112,145 135,166 158,186 180,204 202,220 225,232 248,242 270,248 292,250 315,249 338,244 360,237 382,227 405,215 428,203 450,190 472,177 495,165 518,155 540,146M0,248 22,250 45,249 68,244 90,237 112,227 135,215 158,203 180,190 202,177 225,165 248,155 270,146 292,140 315,135 338,133 360,133 382,134 405,137 428,140 450,143 472,146 495,148 518,148 540,148M0,146 22,140 45,135 68,133 90,133 112,134 135,137 158,140 180,143 202,146 225,148 248,148 270,148 292,145 315,141 338,136 360,130 382,123 405,116 428,109 450,103 472,98 495,95 518,93 540,94M0,148 22,145 45,141 68,136 90,130 112,123 135,116 158,109 180,103 202,98 225,95 248,93 270,94 292,96 315,101 338,108 360,116 382,126 405,137 428,148 450,159 472,170 495,180 518,189 540,197M0,94 22,96 45,101 68,108 90,116 112,126 135,137 158,148 180,159 202,170 225,180 248,189 270,197 292,204 315,209 338,213 360,215 382,216 405,216 428,215 450,212 472,209 495,205 518,201 540,196M0,197 22,204 45,209 68,213 90,215 112,216 135,216 158,215 180,212 202,209 225,205 248,201 270,196 292,191 315,186 338,180 360,175 382,170 405,164 428,160 450,156 472,152 495,149 518,146 540,145M0,196 22,191 45,186 68,180 90,175 112,170 135,164 158,160 180,155 202,152 225,149 248,146 270,145 292,144 315,143 338,144 360,144 382,145 405,146 428,147 450,148 472,148 495,148 518,147 540,146M0,145 22,144 45,143 68,144 90,144 112,145 135,146 158,147 180,148 202,148 225,148 248,147 270,146 292,144 315,142 338,139 360,137 382,134 405,132 428,131 450,131 472,133 495,135 518,139 540,145M0,146 22,144 45,142 68,139 90,137 112,134 135,132 158,131 180,131 202,133 225,135 248,139 270,145 292,152 315,161 338,171 360,181 382,192 405,203 428,214 450,224 472,233 495,241 518,247 540,251M0,145 22,152 45,161 68,171 90,181 112,192 135,203 158,214 180,224 202,233 225,241 248,247 270,251 292,252 315,252 338,249 360,244 382,237 405,228 428,217 450,204 472,190 495,176 518,160 540,144M0,251 22,252 45,252 68,249 90,244 112,237 135,228 158,217 180,204 202,190 225,176 248,160 270,144 292,129 315,113 338,99 360,85 382,73 405,62 428,54 450,47 472,42 495,40 518,40 540,42M0,144 22,129 45,114 68,99 90,85 112,73 135,62 158,54 180,47 202,42 225,40 248,40 270,42 292,47 315,54 338,63 360,74 382,87 405,101 428,117 450,132 472,149 495,165 518,181 540,196M0,42 22,47 45,54 68,63 90,74 112,87 135,101 158,116 180,132 202,149 225,165 248,181 270,196 292,210 315,223 338,234 360,244 382,251 405,257 428,260 450,262 472,261 495,258 518,254 540,248M0,196 22,210 45,223 68,234 90,244 112,251 135,257 158,260 180,262 202,261 225,258 248,254 270,248 292,240 315,232 338,222 360,212 382,202 405,192 428,182 450,172 472,164 495,157 518,150 540,146M0,248 22,240 45,232 68,222 90,212 112,202 135,192 158,182 180,172 202,164 225,156 248,150 270,146 292,143 315,142 338,142 360,144 382,148 405,153 428,159 450,166 472,174 495,182 518,190 540,197M0,146 22,143 45,142 68,142 90,144 112,148 135,153 158,159 180,166 202,174 225,182 248,190 270,197 292,205 315,211 338,216 360,220 382,223 405,224 428,223 450,221 472,218 495,213 518,206 540,198M0,197 22,205 45,211 68,216 90,220 112,223 135,224 158,223 180,221 202,218 225,213 248,206 270,198 292,189 315,179 338,168 360,156 382,143 405,130 428,116 450,101 472,87 495,73 518,58 540,45M0,198 22,189 45,179 68,168 90,156 112,143 135,130 158,116 180,101 202,87 225,73 248,58 270,45 292,32 315,20 338,10 360,1 382,-5 405,-6 428,-6 450,-5 472,2 495,12 518,26 540,43M0,45 22,32 45,20 68,10 90,1 112,-5 135,-6 158,-6 180,-5 202,2 225,12 248,26 270,43 292,63 315,85 338,109 360,135 382,162 405,188 428,213 450,236 472,257 495,275 518,290 540,300M0,43 22,63 45,85 68,110 90,135 112,162 135,188 158,213 180,236 202,257 225,275 248,290 270,300 292,307 315,310 338,309 360,304 382,297 405,286 428,274 450,260 472,245 495,229 518,214 540,198M0,300 22,307 45,310 68,309 90,304 112,297 135,287 158,274 180,260 202,245 225,229 248,214 270,198 292,184 315,171 338,159 360,149 382,141 405,136 428,132 450,130 472,131 495,134 518,138 540,145M0,198 22,184 45,171 68,159 90,149 112,141 135,136 158,132 180,130 202,131 225,134 248,138 270,145 292,153 315,162 338,172 360,182 382,192 405,200 428,207 450,211 472,213 495,211 518,206 540,197M0,145 22,153 45,162 68,172 90,182 112,192 135,200 158,207 180,211 202,213 225,211 248,206 270,197 292,185 315,169 338,152 360,132 382,112 405,92 428,74 450,58 472,47 495,40 518,38 540,42M0,197 22,185 45,169 68,152 90,132 112,112 135,92 158,74 180,58 202,47 225,40 248,38 270,42 292,51 315,66 338,85 360,108 382,133 405,159 428,184 450,207 472,226 495,240 518,248 540,250M0,42 22,51 45,66 68,85 90,108 112,133 135,159 158,184 180,207 202,226 225,240 248,248 270,250 292,245 315,234 338,217 360,196 382,172 405,146 428,120 450,96 472,76 495,59 518,49 540,44M0,250 22,245 45,234 68,217 90,196 112,172 135,146 158,120 180,96 202,76 225,59 248,49 270,44 292,46 315,55 338,69 360,88 382,110 405,135 428,160 450,184 472,207 495,225 518,239 540,248M0,44 22,46 45,55 68,69 90,88 112,110 135,135 158,160 180,184 202,207 225,225 248,239 270,248 292,251 315,248 338,240 360,226 382,208 405,187 428,163 450,138 472,112 495,87 518,63 540,42M0,248 22,251 45,248 68,240 90,226 112,208 135,187 158,163 180,138 202,112 225,87 248,63 270,42 292,23 315,8 338,-4 360,-6 382,-6 405,-6 428,-6 450,-6 472,-1 495,11 518,26 540,43M0,42 22,23 45,8 68,-4 90,-6 112,-6 135,-6 158,-6 180,-6 202,-1 225,11 248,26 270,43 292,61 315,82 338,103 360,125 382,147 405,168 428,188 450,206 472,221 495,234 518,243 540,249M0,43 22,61 45,82 68,103 90,125 112,147 135,168 158,188 180,206 202,221 225,234 248,243 270,249 292,252 315,251 338,247 360,241 382,233 405,224 428,216 450,207 472,201 495,197 518,196 540,198M0,249 22,252 45,251 68,247 90,241 112,233 135,225 158,216 180,207 202,201 225,197 248,196 270,198 292,203 315,211 338,222 360,236 382,250 405,265 428,278 450,290 472,299 495,304 518,305 540,301M0,198 22,203 45,211 68,222 90,236 112,250 135,265 158,278 180,290 202,299 225,304 248,305 270,301 292,291 315,278 338,260 360,239 382,216 405,192 428,168 450,146 472,126 495,111 518,100 540,95M0,301 22,291 45,278 68,260 90,239 112,216 135,192 158,168 180,146 202,126 225,111 248,100 270,95 292,95 315,100 338,110 360,124 382,142 405,161 428,181 450,200 472,218 495,233 518,244 540,251M0,95 22,95 45,100 68,110 90,124 112,142 135,161 158,181 180,200 202,218 225,233 248,244 270,251 292,253 315,252 338,246 360,236 382,224 405,211 428,196 450,182 472,169 495,158 518,150 540,145M0,251 22,253 45,252 68,246 90,236 112,224 135,211 158,196 180,182 202,169 225,158 248,150 270,145 292,143 315,145 338,149 360,155 382,164 405,173 428,182 450,190 472,196 495,200 518,201 540,199M0,145 22,143 45,145 68,149 90,155 112,164 135,173 158,182 180,190 202,196 225,200 248,201 270,199 292,193 315,185 338,173 360,159 382,144 405,127 428,110 450,93 472,77 495,63 518,52 540,43M0,199 22,193 45,185 68,173 90,159 112,144 135,127 158,110 180,93 202,77 225,63 248,52 270,43 292,37 315,34 338,35 360,39 382,46 405,55 428,67 450,81 472,96 495,112 518,129 540,146M0,43 22,37 45,34 68,35 90,39 112,46 135,55 158,67 180,81 202,96 225,112 248,129 270,146 292,163 315,179 338,194 360,207 382,220 405,230 428,239 450,245 472,250 495,252 518,251 540,249M0,146 22,163 45,179 68,194 90,207 112,220 135,230 158,239 180,245 202,249 225,251 248,251 270,249 292,244 315,237 338,227 360,217 382,204 405,190 428,175 450,159 472,143 495,127 518,111 540,96M0,249 22,244 45,237 68,228 90,217 112,204 135,190 158,175 180,159 202,143 225,127 248,111 270,96 292,81 315,68 338,57 360,47 382,39 405,33 428,29 450,27 472,28 495,30 518,35 540,41M0,96 22,81 45,68 68,57 90,47 112,39 135,33 158,29 180,27 202,28 225,30 248,35 270,41 292,49 315,58 338,68 360,78 382,89 405,100 428,110 450,120 472,128 495,135 518,141 540,145M0,41 22,49 45,58 68,68 90,78 112,89 135,100 158,110 180,120 202,128 225,135 248,141 270,145 292,147 315,148 338,147 360,144 382,140 405,135 428,129 450,122 472,114 495,107 518,100 540,93M0,145 22,147 45,148 68,147 90,144 112,140 135,135 158,129 180,122 202,115 225,107 248,100 270,93 292,87 315,82 338,78 360,75 382,73 405,73 428,74 450,76 472,79 495,83 518,87 540,93M0,93 22,87 45,82 68,78 90,75 112,73 135,73 158,74 180,76 202,79 225,83 248,87 270,93 292,98 315,104 338,110 360,116 382,122 405,127 428,132 450,137 472,140 495,143 518,145 540,146M0,93 22,98 45,104 68,110 90,116 112,122 135,127 158,132 180,137 202,140 225,143 248,145 270,146 292,147 315,147 338,145 360,143 382,140 405,136 428,131 450,126 472,119 495,112 518,105 540,97M0,146 22,147 45,147 68,145 90,143 112,140 135,136 158,131 180,126 202,119 225,112 248,105 270,97 292,89 315,82 338,75 360,69 382,65 405,62 428,61 450,63 472,66 495,73 518,82 540,94M0,97 22,90 45,82 68,75 90,69 112,65 135,62 158,61 180,63 202,67 225,73 248,82 270,94 292,107 315,123 338,140 360,158 382,175 405,193 428,208 450,222 472,234 495,242 518,246 540,247M0,94 22,107 45,123 68,140 90,158 112,175 135,192 158,208 180,222 202,234 225,242 248,246 270,247 292,245 315,238 338,229 360,216 382,201 405,185 428,167 450,150 472,133 495,118 518,104 540,93M0,247 22,245 45,238 68,229 90,216 112,201 135,185 158,168 180,150 202,133 225,118 248,104 270,93 292,84 315,79 338,77 360,77 382,81 405,87 428,94 450,104 472,114 495,125 518,136 540,146M0,93 22,84 45,79 68,77 90,77 112,81 135,87 158,94 180,104 202,114 225,125 248,136 270,146 292,156 315,165 338,173 360,180 382,185 405,190 428,193 450,196 472,197 495,198 518,198 540,197M0,146 22,156 45,165 68,173 90,180 112,185 135,190 158,193 180,196 202,197 225,198 248,198 270,197 292,196 315,194 338,192 360,189 382,185 405,181 428,176 450,171 472,165 495,158 518,152 540,145M0,197 22,196 45,194 68,192 90,189 112,185 135,181 158,176 180,171 202,165 225,158 248,152 270,145 292,139 315,133 338,128 360,124 382,121 405,120 428,120 450,122 472,126 495,131 518,139 540,147M0,145 22,139 45,133 68,128 90,124 112,121 135,120 158,120 180,122 202,126 225,131 248,139 270,147 292,158 315,170 338,182 360,196 382,210 405,225 428,239 450,253 472,267 495,279 518,291 540,301M0,147 22,158 45,170 68,183 90,196 112,210 135,225 158,239 180,253 202,267 225,279 248,291 270,301 292,310 315,316 338,321 360,323 382,322 405,320 428,314 450,306 472,295 495,282 518,267 540,249M0,301 22,310 45,316 68,321 90,323 112,322 135,320 158,314 180,306 202,295 225,282 248,267 270,249 292,231 315,211 338,191 360,172 382,153 405,135 428,120 450,108 472,98 495,93 518,90 540,92M0,249 22,231 45,211 68,191 90,172 112,153 135,135 158,120 180,108 202,98 225,93 248,90 270,92 292,98 315,108 338,121 360,137 382,155 405,175 428,197 450,219 472,241 495,263 518,283 540,301M0,92 22,98 45,108 68,121 90,137 112,155 135,175 158,197 180,219 202,241 225,263 248,283 270,301 292,317 315,330 338,341 360,348 382,348 405,348 428,348 450,345 472,337 495,326 518,313 540,299M0,301 22,317 45,330 68,341 90,348 112,348 135,348 158,348 180,345 202,337 225,326 248,313 270,299 292,283 315,266 338,248 360,231 382,214 405,198 428,183 450,171 472,160 495,153 518,148 540,146" fill="none" stroke="#00f400" stroke-width="2" stroke-linejoin="round" shape-rendering="crispEdges"/><g fill="none" stroke="#000" stroke-width="2" shape-rendering="crispEdges" clip-path="url(#cs)"><path d="M0,41 22,33 45,26 68,22 90,20 112,20 135,23 158,29 180,37 202,48 225,61 248,77 270,94 292,114 315,134 338,156 360,177 382,199 405,220 428,239 450,256 472,271 495,283 518,292 540,298M0,298 22,301 45,300 68,297 90,291 112,282 135,272 158,260 180,247 202,234 225,221 248,209 270,197 292,187 315,178 338,170 360,164 382,159 405,155 428,152 450,150 472,149 495,147 518,146 540,144M0,144 22,142 45,140 68,137 90,133 112,129 135,125 158,120 180,115 202,110 225,105 248,100 270,96 292,92 315,88 338,85 360,82 382,80 405,79 428,79 450,80 472,82 495,85 518,88 540,93M0,93 22,99 45,106 68,114 90,122 112,131 135,140 158,150 180,160 202,169 225,179 248,187 270,196 292,203 315,210 338,216 360,222 382,227 405,231 428,234 450,238 472,241 495,243 518,246 540,248M0,248 22,251 45,253 68,255 90,256 112,257 135,258 158,259 180,259 202,258 225,257 248,255 270,253 292,250 315,246 338,243 360,239 382,234 405,230 428,225 450,220 472,214 495,209 518,203 540,197M0,197 22,192 45,187 68,182 90,177 112,174 135,172 158,171 180,172 202,175 225,180 248,187 270,195 292,205 315,216 338,228 360,239 382,250 405,260 428,267 450,271 472,272 495,269 518,261 540,250M0,250 22,235 45,216 68,194 90,171 112,147 135,123 158,100 180,80 202,63 225,51 248,45 270,43 292,47 315,56 338,70 360,88 382,109 405,132 428,156 450,180 472,202 495,222 518,238 540,250M0,250 22,258 45,261 68,260 90,254 112,245 135,233 158,219 180,204 202,188 225,172 248,158 270,145 292,134 315,125 338,118 360,115 382,113 405,114 428,117 450,121 472,126 495,133 518,140 540,147M0,147 22,154 45,161 68,166 90,171 112,174 135,176 158,176 180,174 202,170 225,164 248,156 270,147 292,136 315,123 338,110 360,97 382,83 405,71 428,59 450,50 472,43 495,39 518,38 540,41M0,41 22,48 45,58 68,71 90,88 112,107 135,128 158,150 180,172 202,194 225,216 248,235 270,253 292,268 315,280 338,289 360,295 382,298 405,298 428,295 450,290 472,282 495,273 518,263 540,251M0,251 22,239 45,226 68,212 90,199 112,185 135,171 158,157 180,144 202,131 225,119 248,107 270,96 292,87 315,78 338,71 360,66 382,62 405,61 428,61 450,64 472,69 495,75 518,84 540,94M0,94 22,106 45,119 68,133 90,147 112,162 135,177 158,192 180,206 202,219 225,231 248,241 270,250 292,257 315,263 338,266 360,267 382,265 405,262 428,256 450,248 472,238 495,226 518,213 540,199M0,199 22,184 45,169 68,154 90,140 112,126 135,115 158,105 180,98 202,94 225,92 248,93 270,98 292,105 315,115 338,128 360,144 382,161 405,180 428,200 450,221 472,242 495,263 518,283 540,302M0,302 22,320 45,335 68,347 90,348 112,348 135,348 158,348 180,348 202,348 225,338 248,321 270,301 292,278 315,253 338,226 360,199 382,171 405,144 428,119 450,97 472,78 495,62 518,51 540,45M0,45 22,43 45,46 68,54 90,65 112,79 135,95 158,113 180,132 202,150 225,168 248,184 270,197 292,208 315,217 338,222 360,225 382,225 405,223 428,219 450,215 472,209 495,204 518,199 540,194M0,194 22,191 45,188 68,187 90,187 112,187 135,189 158,190 180,192 202,194 225,195 248,195 270,194 292,193 315,190 338,187 360,183 382,178 405,172 428,167 450,162 472,157 495,152 518,149 540,146" stroke-dasharray="6 84 4 42 2 50 4 23 2 99 5 38 4 97 6 87 3 59 5 24 4 41 6 25" stroke-dashoffset="54"/><path d="M0,197 22,190 45,180 68,168 90,153 112,137 135,119 158,102 180,86 202,72 225,60 248,51 270,45 292,43 315,44 338,50 360,58 382,70 405,85 428,101 450,119 472,138 495,157 518,176 540,194M0,194 22,211 45,226 68,240 90,252 112,263 135,271 158,279 180,285 202,290 225,295 248,298 270,301 292,303 315,305 338,306 360,306 382,304 405,302 428,298 450,292 472,284 495,275 518,264 540,251M0,251 22,236 45,221 68,204 90,187 112,171 135,154 158,139 180,126 202,114 225,105 248,99 270,95 292,95 315,97 338,102 360,109 382,118 405,128 428,140 450,152 472,164 495,176 518,187 540,198M0,198 22,207 45,215 68,221 90,227 112,231 135,235 158,238 180,241 202,243 225,246 248,249 270,251 292,255 315,258 338,261 360,264 382,267 405,268 428,269 450,269 472,267 495,263 518,258 540,251M0,251 22,242 45,231 68,220 90,207 112,192 135,178 158,163 180,148 202,133 225,119 248,106 270,94 292,83 315,74 338,67 360,62 382,59 405,58 428,59 450,62 472,68 495,76 518,85 540,96M0,96 22,108 45,121 68,135 90,148 112,161 135,173 158,183 180,191 202,197 225,200 248,200 270,197 292,190 315,182 338,170 360,157 382,141 405,125 428,109 450,93 472,78 495,64 518,52 540,43M0,43 22,36 45,33 68,31 90,33 112,36 135,42 158,49 180,58 202,67 225,76 248,86 270,94 292,103 315,110 338,116 360,121 382,126 405,129 428,132 450,135 472,137 495,140 518,143 540,146M0,146 22,150 45,154 68,158 90,163 112,169 135,174 158,179 180,184 202,188 225,192 248,195 270,197 292,198 315,198 338,198 360,197 382,196 405,195 428,194 450,193 472,193 495,194 518,196 540,198M0,198 22,201 45,205 68,209 90,213 112,216 135,219 158,220 180,220 202,218 225,213 248,207 270,199 292,188 315,176 338,163 360,150 382,136 405,123 428,112 450,102 472,96 495,92 518,92 540,95M0,95 22,101 45,111 68,123 90,138 112,154 135,172 158,189 180,206 202,221 225,234 248,244 270,252 292,256 315,256 338,254 360,248 382,240 405,229 428,217 450,203 472,188 495,174 518,160 540,147M0,147 22,135 45,124 68,116 90,110 112,106 135,105 158,106 180,109 202,115 225,123 248,133 270,144 292,157 315,171 338,185 360,199 382,212 405,225 428,235 450,244 472,250 495,253 518,252 540,249M0,249 22,242 45,232 68,219 90,204 112,188 135,171 158,154 180,138 202,123 225,110 248,100 270,93 292,89 315,89 338,91 360,96 382,103 405,111 428,120 450,129 472,136 495,142 518,146 540,147M0,147 22,146 45,141 68,134 90,125 112,114 135,102 158,89 180,77 202,66 225,56 248,49 270,43 292,41 315,41 338,43 360,48 382,54 405,61 428,69 450,76 472,83 495,88 518,92 540,94M0,94 22,94 45,93 68,91 90,87 112,83 135,79 158,77 180,75 202,76 225,79 248,86 270,95 292,107 315,122 338,139 360,159 382,180 405,201 428,222 450,242 472,261 495,277 518,291 540,301M0,301 22,309 45,313 68,313 90,311 112,307 135,300 158,293 180,284 202,275 225,266 248,258 270,250 292,244 315,239 338,234 360,231 382,228 405,226 428,223 450,220 472,216 495,212 518,206 540,198M0,198 22,190 45,180 68,170 90,158 112,147 135,136 158,125 180,115 202,107 225,101 248,97 270,95 292,96 315,99 338,104 360,111 382,120 405,131 428,142 450,154 472,166 495,177 518,188 540,198" stroke-dasharray="6 38 6 89 2 76 2 60 4 36 3 84 3 31 5 55 5 38 3 83 4 60 3 21" stroke-dashoffset="74"/><path d="M0,250 22,257 45,264 68,271 90,277 112,283 135,288 158,293 180,297 202,300 225,302 248,303 270,304 292,303 315,301 338,298 360,294 382,288 405,280 428,271 450,260 472,247 495,232 518,216 540,199M0,199 22,180 45,162 68,143 90,126 112,110 135,96 158,86 180,79 202,76 225,77 248,83 270,93 292,108 315,126 338,147 360,170 382,194 405,218 428,241 450,261 472,278 495,290 518,297 540,299M0,299 22,295 45,286 68,271 90,252 112,228 135,202 158,174 180,145 202,117 225,90 248,65 270,43 292,24 315,9 338,-2 360,-6 382,-6 405,-6 428,-6 450,0 472,9 495,20 518,31 540,43M0,43 22,56 45,68 68,81 90,92 112,103 135,112 158,121 180,129 202,135 225,140 248,144 270,146 292,148 315,148 338,147 360,146 382,145 405,143 428,141 450,140 472,140 495,141 518,143 540,146M0,146 22,151 45,157 68,164 90,171 112,179 135,186 158,193 180,198 202,201 225,202 248,200 270,196 292,189 315,179 338,168 360,155 382,142 405,128 428,116 450,106 472,98 495,93 518,93 540,96M0,96 22,103 45,113 68,127 90,143 112,161 135,180 158,197 180,214 202,227 225,238 248,244 270,245 292,242 315,235 338,224 360,209 382,192 405,173 428,155 450,137 472,121 495,108 518,98 540,93M0,93 22,92 45,95 68,103 90,113 112,126 135,140 158,155 180,168 202,181 225,190 248,196 270,199 292,198 315,192 338,184 360,172 382,159 405,145 428,130 450,117 472,106 495,97 518,92 540,91M0,91 22,94 45,101 68,111 90,123 112,137 135,152 158,166 180,179 202,189 225,196 248,199 270,197 292,192 315,182 338,168 360,152 382,133 405,114 428,95 450,78 472,64 495,53 518,46 540,45M0,45 22,48 45,56 68,68 90,85 112,104 135,126 158,149 180,172 202,195 225,215 248,233 270,249 292,261 315,269 338,275 360,277 382,277 405,274 428,271 450,266 472,261 495,256 518,253 540,250M0,250 22,249 45,249 68,251 90,254 112,258 135,264 158,270 180,276 202,283 225,290 248,296 270,301 292,306 315,309 338,311 360,312 382,311 405,308 428,303 450,296 472,287 495,275 518,262 540,247M0,247 22,231 45,213 68,194 90,176 112,157 135,140 158,124 180,111 202,101 225,94 248,90 270,90 292,94 315,101 338,111 360,123 382,136 405,150 428,164 450,176 472,186 495,193 518,197 540,198M0,198 22,194 45,188 68,179 90,167 112,153 135,140 158,126 180,114 202,104 225,97 248,93 270,94 292,99 315,108 338,120 360,137 382,156 405,177 428,200 450,223 472,245 495,266 518,286 540,302M0,302 22,316 45,326 68,332 90,335 112,334 135,330 158,322 180,312 202,299 225,285 248,268 270,251 292,233 315,215 338,196 360,179 382,162 405,147 428,133 450,121 472,111 495,104 518,99 540,96M0,96 22,96 45,97 68,101 90,106 112,112 135,119 158,126 180,133 202,138 225,143 248,145 270,146 292,145 315,142 338,136 360,129 382,119 405,109 428,98 450,86 472,74 495,62 518,51 540,41M0,41 22,33 45,26 68,21 90,18 112,17 135,17 158,19 180,22 202,26 225,31 248,36 270,41 292,47 315,52 338,58 360,63 382,67 405,72 428,76 450,80 472,83 495,87 518,90 540,93M0,93 22,97 45,100 68,102 90,105 112,107 135,108 158,108 180,108 202,106 225,103 248,99 270,94 292,89 315,83 338,77 360,71 382,66 405,62 428,61 450,61 472,65 495,71 518,81 540,93" stroke-dasharray="2 87 3 96 3 94 4 39 5 73 5 57 3 71 2 75 5 50 5 35 3 83 3 77" stroke-dashoffset="49"/><path d="M0,93 22,108 45,124 68,140 90,157 112,172 135,187 158,201 180,214 202,226 225,235 248,243 270,250 292,254 315,256 338,257 360,255 382,252 405,247 428,241 450,233 472,225 495,216 518,206 540,196M0,196 22,185 45,175 68,165 90,155 112,146 135,137 158,128 180,120 202,113 225,106 248,100 270,94 292,89 315,85 338,82 360,80 382,78 405,78 428,78 450,79 472,82 495,85 518,90 540,95M0,95 22,101 45,108 68,116 90,124 112,133 135,142 158,152 180,161 202,171 225,180 248,189 270,197 292,205 315,211 338,217 360,221 382,224 405,225 428,225 450,223 472,219 495,214 518,206 540,198M0,198 22,188 45,176 68,164 90,151 112,137 135,122 158,108 180,93 202,80 225,66 248,54 270,43 292,33 315,25 338,18 360,13 382,10 405,9 428,10 450,13 472,17 495,24 518,32 540,41M0,41 22,52 45,63 68,75 90,87 112,99 135,110 158,120 180,129 202,136 225,142 248,145 270,146 292,146 315,143 338,139 360,134 382,128 405,121 428,114 450,108 472,102 495,98 518,95 540,94M0,94 22,95 45,98 68,103 90,110 112,118 135,128 158,139 180,151 202,163 225,176 248,188 270,200 292,211 315,222 338,231 360,239 382,245 405,250 428,254 450,256 472,257 495,256 518,254 540,250M0,250 22,245 45,239 68,232 90,224 112,215 135,206 158,196 180,185 202,175 225,164 248,154 270,143 292,134 315,124 338,115 360,107 382,98 405,90 428,82 450,75 472,67 495,59 518,51 540,43M0,43 22,35 45,27 68,20 90,14 112,9 135,6 158,5 180,6 202,10 225,18 248,28 270,42 292,58 315,78 338,100 360,124 382,149 405,174 428,200 450,224 472,247 495,267 518,285 540,300M0,300 22,312 45,320 68,325 90,327 112,327 135,325 158,322 180,318 202,313 225,309 248,305 270,302 292,301 315,300 338,301 360,302 382,304 405,306 428,308 450,309 472,309 495,308 518,305 540,300M0,300 22,293 45,285 68,275 90,264 112,253 135,242 158,231 180,221 202,212 225,205 248,200 270,198 292,197 315,199 338,203 360,208 382,215 405,222 428,229 450,236 472,242 495,247 518,250 540,250M0,250 22,249 45,245 68,239 90,231 112,222 135,211 158,199 180,188 202,176 225,165 248,155 270,147 292,140 315,135 338,132 360,130 382,130 405,131 428,132 450,135 472,137 495,139 518,141 540,143M0,143 22,144 45,145 68,146 90,147 112,148 135,150 158,153 180,158 202,165 225,174 248,185 270,199 292,213 315,230 338,246 360,263 382,279 405,293 428,304 450,313 472,316 495,316 518,310 540,300M0,300 22,284 45,265 68,242 90,216 112,188 135,160 158,132 180,106 202,84 225,65 248,50 270,41 292,37 315,39 338,45 360,56 382,70 405,88 428,107 450,127 472,146 495,165 518,182 540,196M0,196 22,207 45,215 68,219 90,220 112,218 135,212 158,205 180,195 202,184 225,172 248,159 270,147 292,135 315,124 338,114 360,105 382,98 405,92 428,88 450,86 472,86 495,87 518,90 540,94M0,94 22,100 45,107 68,114 90,122 112,130 135,137 158,143 180,148 202,151 225,151 248,150 270,146 292,139 315,130 338,119 360,107 382,94 405,82 428,69 450,59 472,50 495,44 518,42 540,43M0,43 22,48 45,56 68,68 90,82 112,98 135,116 158,134 180,151 202,167 225,181 248,192 270,200 292,204 315,205 338,203 360,198 382,192 405,183 428,175 450,166 472,158 495,152 518,148 540,146" stroke-dasharray="6 99 5 84 2 77 6 52 4 58 6 45 4 20 4 70 6 93 3 99 2 85 2 52" stroke-dashoffset="5"/><path d="M0,144 22,144 45,141 68,136 90,128 112,119 135,108 158,96 180,84 202,72 225,61 248,51 270,42 292,35 315,29 338,26 360,24 382,24 405,25 428,27 450,30 472,33 495,36 518,39 540,42M0,42 22,44 45,47 68,49 90,51 112,53 135,56 158,59 180,64 202,70 225,77 248,86 270,97 292,109 315,121 338,135 360,148 382,162 405,174 428,185 450,194 472,200 495,203 518,203 540,200M0,200 22,193 45,184 68,171 90,157 112,141 135,124 158,107 180,90 202,75 225,62 248,52 270,44 292,39 315,37 338,39 360,42 382,48 405,55 428,63 450,72 472,80 495,87 518,93 540,97M0,97 22,100 45,100 68,100 90,98 112,95 135,91 158,88 180,86 202,85 225,86 248,89 270,95 292,102 315,112 338,123 360,135 382,148 405,161 428,173 450,184 472,192 495,197 518,199 540,197M0,197 22,192 45,183 68,172 90,158 112,142 135,125 158,107 180,91 202,75 225,62 248,51 270,43 292,38 315,36 338,37 360,41 382,46 405,53 428,61 450,69 472,77 495,83 518,88 540,92M0,92 22,93 45,93 68,91 90,89 112,86 135,82 158,80 180,78 202,78 225,80 248,85 270,92 292,101 315,113 338,127 360,143 382,160 405,177 428,193 450,209 472,223 495,234 518,244 540,250M0,250 22,253 45,253 68,250 90,244 112,235 135,225 158,212 180,199 202,185 225,171 248,157 270,143 292,131 315,120 338,111 360,103 382,97 405,92 428,90 450,89 472,89 495,91 518,94 540,97M0,97 22,102 45,107 68,113 90,118 112,124 135,129 158,134 180,139 202,142 225,145 248,146 270,147 292,146 315,144 338,141 360,137 382,132 405,127 428,121 450,115 472,109 495,103 518,97 540,92M0,92 22,89 45,86 68,84 90,85 112,86 135,90 158,95 180,101 202,110 225,120 248,131 270,144 292,158 315,173 338,188 360,204 382,219 405,234 428,249 450,262 472,274 495,285 518,293 540,300M0,300 22,305 45,308 68,309 90,308 112,305 135,300 158,294 180,287 202,279 225,270 248,261 270,251 292,241 315,231 338,221 360,211 382,202 405,193 428,184 450,176 472,168 495,161 518,154 540,147M0,147 22,141 45,135 68,130 90,125 112,120 135,115 158,111 180,107 202,103 225,99 248,95 270,92 292,89 315,86 338,83 360,82 382,80 405,80 428,80 450,81 472,83 495,86 518,89 540,94M0,94 22,99 45,105 68,111 90,117 112,123 135,129 158,134 180,138 202,142 225,144 248,145 270,145 292,144 315,142 338,139 360,135 382,130 405,125 428,119 450,113 472,107 495,101 518,96 540,91M0,91 22,87 45,84 68,82 90,81 112,82 135,85 158,90 180,97 202,106 225,117 248,131 270,146 292,162 315,180 338,197 360,214 382,230 405,244 428,255 450,262 472,266 495,265 518,259 540,248M0,248 22,233 45,215 68,193 90,169 112,144 135,120 158,97 180,76 202,60 225,48 248,42 270,42 292,48 315,60 338,77 360,99 382,125 405,153 428,182 450,211 472,238 495,263 518,285 540,302M0,302 22,314 45,321 68,323 90,320 112,313 135,301 158,287 180,270 202,251 225,232 248,214 270,196 292,179 315,165 338,153 360,143 382,136 405,132 428,129 450,129 472,131 495,134 518,139 540,145M0,145 22,152 45,160 68,168 90,177 112,186 135,195 158,205 180,214 202,223 225,232 248,241 270,248 292,256 315,262 338,267 360,271 382,274 405,275 428,275 450,273 472,269 495,264 518,257 540,250" stroke-dasharray="6 86 2 62 3 59 4 28 6 42 4 24 2 35 3 94 6 58 4 73 6 46 5 51" stroke-dashoffset="47"/><path d="M0,195 22,203 45,208 68,210 90,210 112,206 135,201 158,194 180,185 202,175 225,165 248,155 270,145 292,136 315,128 338,121 360,116 382,113 405,112 428,112 450,115 472,119 495,126 518,134 540,144M0,144 22,156 45,169 68,183 90,198 112,213 135,228 158,244 180,258 202,271 225,283 248,293 270,302 292,308 315,311 338,313 360,312 382,309 405,304 428,297 450,289 472,279 495,269 518,258 540,248M0,248 22,237 45,227 68,218 90,210 112,204 135,198 158,195 180,193 202,192 225,193 248,196 270,200 292,205 315,210 338,217 360,224 382,231 405,237 428,243 450,248 472,251 495,253 518,252 540,250M0,250 22,245 45,239 68,230 90,219 112,206 135,192 158,176 180,160 202,144 225,128 248,112 270,98 292,84 315,72 338,62 360,54 382,47 405,42 428,39 450,37 472,37 495,38 518,39 540,42M0,42 22,45 45,49 68,54 90,60 112,66 135,74 158,83 180,93 202,104 225,117 248,131 270,146 292,162 315,179 338,195 360,211 382,226 405,239 428,250 450,257 472,261 495,261 518,258 540,250M0,250 22,239 45,224 68,207 90,189 112,169 135,150 158,133 180,117 202,105 225,97 248,93 270,94 292,100 315,110 338,123 360,140 382,159 405,178 428,197 450,215 472,230 495,241 518,248 540,251M0,251 22,248 45,239 68,227 90,210 112,190 135,167 158,143 180,119 202,95 225,74 248,55 270,39 292,28 315,20 338,16 360,16 382,20 405,26 428,36 450,46 472,58 495,71 518,83 540,95M0,95 22,106 45,116 68,125 90,132 112,137 135,141 158,144 180,146 202,146 225,145 248,144 270,142 292,140 315,137 338,135 360,132 382,130 405,129 428,128 450,128 472,130 495,133 518,138 540,144M0,144 22,152 45,161 68,171 90,183 112,194 135,206 158,217 180,227 202,235 225,242 248,246 270,248 292,248 315,245 338,240 360,234 382,226 405,219 428,211 450,204 472,199 495,195 518,193 540,194M0,194 22,198 45,203 68,210 90,219 112,228 135,237 158,245 180,251 202,255 225,256 248,254 270,248 292,239 315,226 338,211 360,192 382,172 405,151 428,129 450,108 472,88 495,70 518,55 540,42M0,42 22,32 45,26 68,23 90,23 112,25 135,31 158,38 180,47 202,58 225,69 248,80 270,92 292,103 315,113 338,123 360,131 382,138 405,143 428,148 450,150 472,151 495,151 518,149 540,146M0,146 22,142 45,138 68,134 90,129 112,125 135,122 158,121 180,121 202,123 225,128 248,135 270,145 292,156 315,170 338,186 360,202 382,219 405,236 428,251 450,266 472,278 495,287 518,293 540,296M0,296 22,295 45,291 68,283 90,272 112,259 135,244 158,227 180,210 202,192 225,175 248,159 270,145 292,133 315,123 338,115 360,110 382,108 405,108 428,110 450,114 472,121 495,128 518,137 540,147M0,147 22,157 45,167 68,177 90,187 112,195 135,202 158,207 180,210 202,211 225,210 248,205 270,199 292,190 315,178 338,165 360,150 382,134 405,118 428,102 450,87 472,73 495,61 518,51 540,44M0,44 22,39 45,37 68,38 90,41 112,46 135,52 158,60 180,68 202,76 225,83 248,89 270,94 292,97 315,99 338,99 360,98 382,97 405,94 428,92 450,90 472,88 495,88 518,89 540,92M0,92 22,97 45,103 68,111 90,120 112,130 135,140 158,151 180,161 202,172 225,181 248,189 270,196 292,201 315,205 338,208 360,210 382,210 405,210 428,208 450,207 472,205 495,203 518,201 540,199" stroke-dasharray="5 60 5 75 2 23 2 37 3 23 3 68 6 47 3 53 5 82 6 50 5 47 6 38" stroke-dashoffset="69"/><path d="M0,197 22,198 45,199 68,197 90,194 112,189 135,183 158,177 180,170 202,164 225,157 248,152 270,147 292,142 315,139 338,136 360,134 382,131 405,129 428,126 450,122 472,117 495,110 518,103 540,94M0,94 22,84 45,73 68,62 90,51 112,41 135,32 158,26 180,22 202,22 225,25 248,32 270,43 292,58 315,76 338,97 360,120 382,145 405,171 428,197 450,223 472,247 495,269 518,288 540,304M0,304 22,316 45,325 68,330 90,331 112,329 135,324 158,316 180,306 202,294 225,280 248,266 270,251 292,236 315,222 338,208 360,195 382,183 405,173 428,164 450,157 472,152 495,148 518,145 540,145M0,145 22,145 45,146 68,149 90,151 112,154 135,156 158,158 180,158 202,157 225,155 248,151 270,145 292,137 315,127 338,116 360,104 382,92 405,80 428,69 450,59 472,51 495,46 518,43 540,43M0,43 22,47 45,53 68,63 90,75 112,89 135,104 158,121 180,138 202,155 225,170 248,184 270,197 292,207 315,215 338,220 360,223 382,224 405,224 428,221 450,218 472,213 495,208 518,203 540,198M0,198 22,193 45,188 68,184 90,180 112,175 135,171 158,167 180,163 202,159 225,154 248,149 270,144 292,139 315,134 338,129 360,123 382,118 405,113 428,109 450,105 472,101 495,98 518,96 540,94M0,94 22,93 45,92 68,93 90,94 112,96 135,100 158,104 180,110 202,117 225,125 248,134 270,144 292,154 315,165 338,175 360,185 382,195 405,202 428,208 450,211 472,212 495,210 518,205 540,197M0,197 22,186 45,173 68,158 90,142 112,125 135,108 158,92 180,77 202,64 225,54 248,47 270,43 292,43 315,47 338,53 360,64 382,76 405,92 428,108 450,126 472,145 495,163 518,181 540,197M0,197 22,211 45,223 68,232 90,239 112,243 135,244 158,242 180,237 202,230 225,221 248,209 270,196 292,182 315,167 338,151 360,135 382,119 405,104 428,90 450,77 472,65 495,56 518,48 540,42M0,42 22,38 45,37 68,38 90,42 112,48 135,56 158,67 180,79 202,94 225,110 248,127 270,146 292,164 315,183 338,200 360,217 382,232 405,244 428,254 450,260 472,262 495,261 518,256 540,247M0,247 22,235 45,220 68,203 90,185 112,166 135,147 158,130 180,116 202,104 225,96 248,93 270,95 292,101 315,112 338,127 360,146 382,167 405,190 428,213 450,236 472,257 495,276 518,290 540,301M0,301 22,308 45,310 68,307 90,301 112,291 135,278 158,264 180,249 202,234 225,220 248,207 270,197 292,189 315,184 338,182 360,181 382,183 405,186 428,190 450,194 472,197 495,199 518,199 540,198M0,198 22,195 45,190 68,184 90,176 112,168 135,160 158,153 180,147 202,143 225,141 248,142 270,146 292,152 315,161 338,172 360,184 382,197 405,210 428,223 450,233 472,242 495,248 518,250 540,250M0,250 22,246 45,238 68,228 90,215 112,200 135,183 158,166 180,149 202,133 225,118 248,105 270,94 292,85 315,79 338,76 360,74 382,75 405,77 428,80 450,83 472,87 495,90 518,93 540,94M0,94 22,94 45,93 68,91 90,87 112,82 135,77 158,71 180,64 202,58 225,53 248,48 270,44 292,41 315,39 338,39 360,40 382,43 405,46 428,52 450,58 472,66 495,74 518,84 540,94M0,94 22,105 45,117 68,129 90,142 112,155 135,168 158,182 180,195 202,209 225,222 248,234 270,246 292,257 315,267 338,276 360,284 382,290 405,295 428,299 450,302 472,303 495,304 518,303 540,301" stroke-dasharray="4 78 4 45 4 24 2 62 4 86 2 64 4 67 5 61 4 59 5 39 4 73 2 99" stroke-dashoffset="59"/><path d="M0,97 22,100 45,110 68,125 90,146 112,171 135,197 158,224 180,248 202,270 225,286 248,297 270,300 292,297 315,286 338,269 360,247 382,220 405,190 428,160 450,129 472,101 495,77 518,57 540,42M0,42 22,33 45,30 68,32 90,40 112,51 135,65 158,81 180,97 202,112 225,126 248,137 270,145 292,150 315,151 338,149 360,144 382,137 405,129 428,120 450,111 472,103 495,97 518,94 540,93M0,93 22,95 45,100 68,108 90,119 112,132 135,147 158,164 180,181 202,199 225,216 248,232 270,248 292,261 315,272 338,282 360,288 382,292 405,294 428,292 450,288 472,282 495,272 518,261 540,248M0,248 22,233 45,217 68,200 90,183 112,166 135,149 158,134 180,121 202,110 225,102 248,97 270,95 292,96 315,100 338,108 360,118 382,131 405,146 428,163 450,180 472,198 495,215 518,231 540,246M0,246 22,259 45,270 68,278 90,284 112,287 135,288 158,286 180,282 202,276 225,268 248,259 270,248 292,237 315,225 338,213 360,200 382,186 405,173 428,160 450,146 472,133 495,120 518,107 540,95M0,95 22,83 45,73 68,64 90,57 112,52 135,49 158,49 180,52 202,58 225,66 248,77 270,91 292,107 315,125 338,143 360,162 382,181 405,198 428,214 450,227 472,237 495,244 518,246 540,245M0,245 22,239 45,230 68,217 90,200 112,182 135,161 158,139 180,117 202,96 225,76 248,58 270,42 292,29 315,19 338,13 360,10 382,11 405,15 428,22 450,32 472,45 495,59 518,76 540,94M0,94 22,114 45,134 68,154 90,174 112,195 135,214 158,232 180,250 202,266 225,280 248,292 270,302 292,310 315,316 338,320 360,322 382,323 405,322 428,320 450,316 472,313 495,308 518,304 540,300M0,300 22,295 45,291 68,286 90,281 112,275 135,269 158,261 180,252 202,241 225,228 248,213 270,197 292,178 315,159 338,138 360,118 382,98 405,80 428,64 450,52 472,43 495,38 518,39 540,44M0,44 22,54 45,69 68,88 90,111 112,136 135,163 158,191 180,218 202,243 225,266 248,286 270,302 292,314 315,321 338,325 360,324 382,320 405,312 428,303 450,292 472,281 495,270 518,259 540,249M0,249 22,241 45,234 68,229 90,225 112,222 135,220 158,218 180,216 202,213 225,209 248,204 270,198 292,190 315,182 338,172 360,163 382,154 405,146 428,139 450,134 472,132 495,133 518,137 540,144M0,144 22,155 45,168 68,183 90,200 112,218 135,235 158,253 180,268 202,281 225,291 248,298 270,301 292,300 315,295 338,286 360,275 382,260 405,244 428,226 450,208 472,190 495,173 518,157 540,144M0,144 22,133 45,124 68,119 90,115 112,115 135,116 158,119 180,123 202,129 225,134 248,140 270,146 292,152 315,157 338,161 360,165 382,169 405,173 428,176 450,180 472,184 495,188 518,193 540,198M0,198 22,204 45,211 68,217 90,224 112,230 135,236 158,241 180,245 202,248 225,249 248,249 270,248 292,245 315,240 338,235 360,229 382,223 405,217 428,211 450,206 472,202 495,199 518,198 540,198M0,198 22,200 45,203 68,208 90,213 112,220 135,226 158,233 180,239 202,244 225,248 248,251 270,252 292,251 315,249 338,245 360,239 382,231 405,222 428,211 450,199 472,187 495,174 518,160 540,146M0,146 22,133 45,119 68,107 90,94 112,83 135,73 158,65 180,58 202,52 225,48 248,45 270,45 292,45 315,48 338,51 360,56 382,61 405,67 428,73 450,78 472,83 495,88 518,91 540,93" stroke-dasharray="6 43 4 40 2 21 3 88 2 75 3 25 2 74 4 63 4 41 4 93 3 78 3 35" stroke-dashoffset="25"/><path d="M0,45 22,42 45,42 68,45 90,50 112,58 135,68 158,80 180,92 202,105 225,119 248,131 270,143 292,154 315,163 338,171 360,177 382,180 405,181 428,181 450,178 472,172 495,165 518,156 540,146M0,146 22,134 45,121 68,108 90,95 112,82 135,71 158,60 180,52 202,46 225,42 248,41 270,43 292,48 315,56 338,67 360,80 382,94 405,110 428,127 450,143 472,159 495,174 518,187 540,198M0,198 22,208 45,214 68,219 90,221 112,222 135,220 158,218 180,214 202,210 225,206 248,202 270,198 292,195 315,193 338,191 360,190 382,190 405,191 428,192 450,193 472,194 495,196 518,197 540,198M0,198 22,198 45,199 68,199 90,198 112,198 135,198 158,197 180,197 202,196 225,196 248,197 270,197 292,199 315,200 338,202 360,205 382,208 405,212 428,217 450,222 472,228 495,234 518,241 540,249M0,249 22,257 45,264 68,272 90,279 112,286 135,292 158,297 180,301 202,303 225,304 248,303 270,300 292,295 315,289 338,282 360,273 382,264 405,254 428,243 450,233 472,222 495,213 518,204 540,197M0,197 22,190 45,185 68,181 90,179 112,178 135,178 158,179 180,182 202,185 225,189 248,193 270,198 292,202 315,207 338,211 360,214 382,216 405,218 428,218 450,216 472,213 495,209 518,203 540,195M0,195 22,186 45,176 68,166 90,155 112,143 135,133 158,122 180,113 202,106 225,100 248,97 270,95 292,96 315,99 338,104 360,110 382,119 405,129 428,140 450,152 472,164 495,175 518,187 540,198M0,198 22,209 45,218 68,226 90,233 112,239 135,243 158,246 180,248 202,249 225,249 248,248 270,247 292,245 315,243 338,240 360,238 382,236 405,235 428,235 450,235 472,237 495,240 518,244 540,249M0,249 22,255 45,262 68,269 90,277 112,285 135,292 158,297 180,302 202,305 225,305 248,304 270,300 292,294 315,286 338,277 360,266 382,254 405,242 428,231 450,220 472,211 495,203 518,198 540,196M0,196 22,196 45,199 68,204 90,212 112,221 135,232 158,244 180,257 202,269 225,281 248,292 270,301 292,309 315,314 338,318 360,319 382,317 405,314 428,308 450,299 472,289 495,277 518,263 540,248M0,248 22,232 45,215 68,198 90,181 112,164 135,149 158,134 180,121 202,111 225,102 248,97 270,94 292,94 315,97 338,102 360,110 382,119 405,130 428,142 450,154 472,166 495,177 518,187 540,196M0,196 22,203 45,209 68,214 90,217 112,220 135,222 158,224 180,227 202,230 225,235 248,241 270,249 292,259 315,269 338,280 360,291 382,302 405,311 428,318 450,323 472,324 495,321 518,313 540,302M0,302 22,286 45,266 68,243 90,218 112,191 135,163 158,137 180,111 202,89 225,70 248,55 270,45 292,40 315,39 338,44 360,54 382,67 405,83 428,101 450,121 472,141 495,161 518,180 540,198M0,198 22,213 45,226 68,236 90,245 112,250 135,254 158,256 180,256 202,255 225,254 248,252 270,249 292,247 315,244 338,241 360,238 382,235 405,231 428,227 450,223 472,217 495,211 518,204 540,197M0,197 22,189 45,180 68,171 90,161 112,151 135,142 158,133 180,124 202,115 225,108 248,101 270,96 292,91 315,88 338,86 360,86 382,87 405,90 428,95 450,101 472,110 495,120 518,132 540,146M0,146 22,161 45,177 68,193 90,210 112,227 135,243 158,258 180,271 202,282 225,291 248,297 270,300 292,301 315,299 338,294 360,287 382,278 405,268 428,257 450,244 472,232 495,220 518,209 540,198" stroke-dasharray="2 94 3 34 2 24 3 53 5 98 6 39 5 93 2 88 3 82 3 70 4 28 5 85" stroke-dashoffset="38"/><path d="M0,94 22,111 45,129 68,147 90,165 112,182 135,198 158,213 180,225 202,236 225,244 248,249 270,252 292,253 315,251 338,247 360,241 382,235 405,227 428,220 450,212 472,206 495,201 518,198 540,196M0,196 22,197 45,200 68,206 90,213 112,222 135,232 158,243 180,255 202,267 225,279 248,290 270,300 292,308 315,315 338,320 360,323 382,324 405,324 428,322 450,319 472,315 495,309 518,303 540,297M0,297 22,290 45,284 68,277 90,271 112,266 135,261 158,256 180,253 202,250 225,249 248,248 270,248 292,250 315,252 338,256 360,260 382,265 405,270 428,276 450,282 472,288 495,293 518,298 540,303M0,303 22,306 45,308 68,309 90,308 112,306 135,302 158,297 180,290 202,282 225,272 248,262 270,250 292,237 315,224 338,211 360,197 382,183 405,169 428,155 450,141 472,128 495,116 518,104 540,93M0,93 22,83 45,74 68,67 90,62 112,59 135,57 158,58 180,61 202,66 225,74 248,84 270,95 292,109 315,123 338,139 360,155 382,172 405,188 428,202 450,216 472,228 495,237 518,244 540,249M0,249 22,251 45,251 68,248 90,244 112,239 135,232 158,225 180,218 202,211 225,205 248,201 270,198 292,197 315,197 338,200 360,204 382,209 405,215 428,222 450,229 472,235 495,241 518,246 540,250M0,250 22,252 45,252 68,250 90,248 112,243 135,238 158,231 180,224 202,217 225,210 248,203 270,196 292,191 315,185 338,181 360,177 382,174 405,171 428,168 450,164 472,161 495,156 518,152 540,146M0,146 22,140 45,134 68,128 90,122 112,117 135,114 158,112 180,113 202,116 225,122 248,132 270,144 292,159 315,176 338,195 360,215 382,235 405,254 428,271 450,286 472,296 495,303 518,304 540,301M0,301 22,292 45,279 68,262 90,241 112,219 135,195 158,171 180,149 202,129 225,113 248,101 270,93 292,91 315,93 338,99 360,109 382,122 405,137 428,152 450,166 472,179 495,188 518,195 540,197M0,197 22,195 45,189 68,180 90,168 112,155 135,140 158,126 180,114 202,104 225,97 248,95 270,98 292,105 315,117 338,133 360,152 382,173 405,196 428,219 450,240 472,260 495,277 518,290 540,299M0,299 22,303 45,302 68,297 90,287 112,274 135,258 158,240 180,220 202,200 225,180 248,162 270,145 292,130 315,117 338,107 360,101 382,97 405,96 428,98 450,103 472,110 495,119 518,130 540,142M0,142 22,155 45,169 68,183 90,197 112,210 135,221 158,232 180,240 202,246 225,249 248,250 270,247 292,242 315,234 338,224 360,212 382,198 405,183 428,167 450,151 472,135 495,120 518,106 540,94M0,94 22,84 45,76 68,71 90,67 112,66 135,67 158,69 180,73 202,77 225,83 248,88 270,94 292,99 315,104 338,108 360,111 382,113 405,114 428,113 450,111 472,108 495,104 518,99 540,93M0,93 22,86 45,79 68,72 90,64 112,57 135,51 158,45 180,41 202,39 225,38 248,39 270,42 292,48 315,56 338,65 360,77 382,90 405,105 428,120 450,136 472,152 495,168 518,183 540,197M0,197 22,210 45,221 68,231 90,239 112,245 135,249 158,252 180,253 202,253 225,252 248,250 270,247 292,243 315,239 338,234 360,228 382,221 405,213 428,205 450,195 472,185 495,173 518,160 540,147M0,147 22,133 45,119 68,105 90,92 112,79 135,68 158,58 180,50 202,44 225,41 248,40 270,41 292,45 315,51 338,59 360,68 382,78 405,89 428,101 450,111 472,122 495,131 518,139 540,145" stroke-dasharray="3 95 3 90 4 49 3 24 3 38 2 63 4 22 2 93 2 49 6 29 4 84 2 25" stroke-dashoffset="74"/></g></g></g>
    <rect x="406.2" y="234.9" width="270.2" height="171.5" fill="none" stroke="#555"/>
  </svg>

  <!-- ===== menu ===== -->
  <div id="menu">
    <div class="mi" style="top:0;height:30.8px;background:#1a2125;"><div class="l" style="top:10.6px;font-size:10.6px;">QAM测量</div>
      <div style="position:absolute;left:1px;top:11px;width:0;height:0;border-right:5px solid #3a4a54;border-top:4px solid transparent;border-bottom:4px solid transparent;"></div></div>
    <div class="mi" style="top:32.9px;"><div class="l">类型</div><div class="v">32QAM</div><div class="ar"></div></div>
    <div class="mi" style="top:79.3px;"><div class="l">符号率</div><div class="v">100 ksps</div></div>
    <div class="mi" style="top:125.7px;"><div class="l">符号点数</div><div class="v">8</div><div class="ar"></div></div>
    <div class="mi" style="top:171.2px;height:45px;background:#27519b;box-shadow:inset 0 1px 0 #3561b0;"><div class="l" style="top:12px">测量长度</div><div class="v" style="top:29.8px">1024</div></div>
    <div class="mi" style="top:218.5px;"><div class="l l1">滤波器设置</div><div class="ar" style="top:16px"></div></div>
    <div class="mi" style="top:264.9px;"><div class="l" style="top:9.8px">统计</div><div class="v" style="font-size:8.6px;top:28.4px">关闭</div><div class="ar" style="top:16.2px"></div></div>
    <div class="mi" style="top:311.3px;"></div>
    <div class="mi" style="top:357.7px;height:43.7px;"></div>
    <div class="mi" style="top:403.2px;height:17px;background:#161919;"><div class="v" style="top:3.2px;font-size:11.4px;">Local</div></div>
  </div>
</div>
</body>
</html>
